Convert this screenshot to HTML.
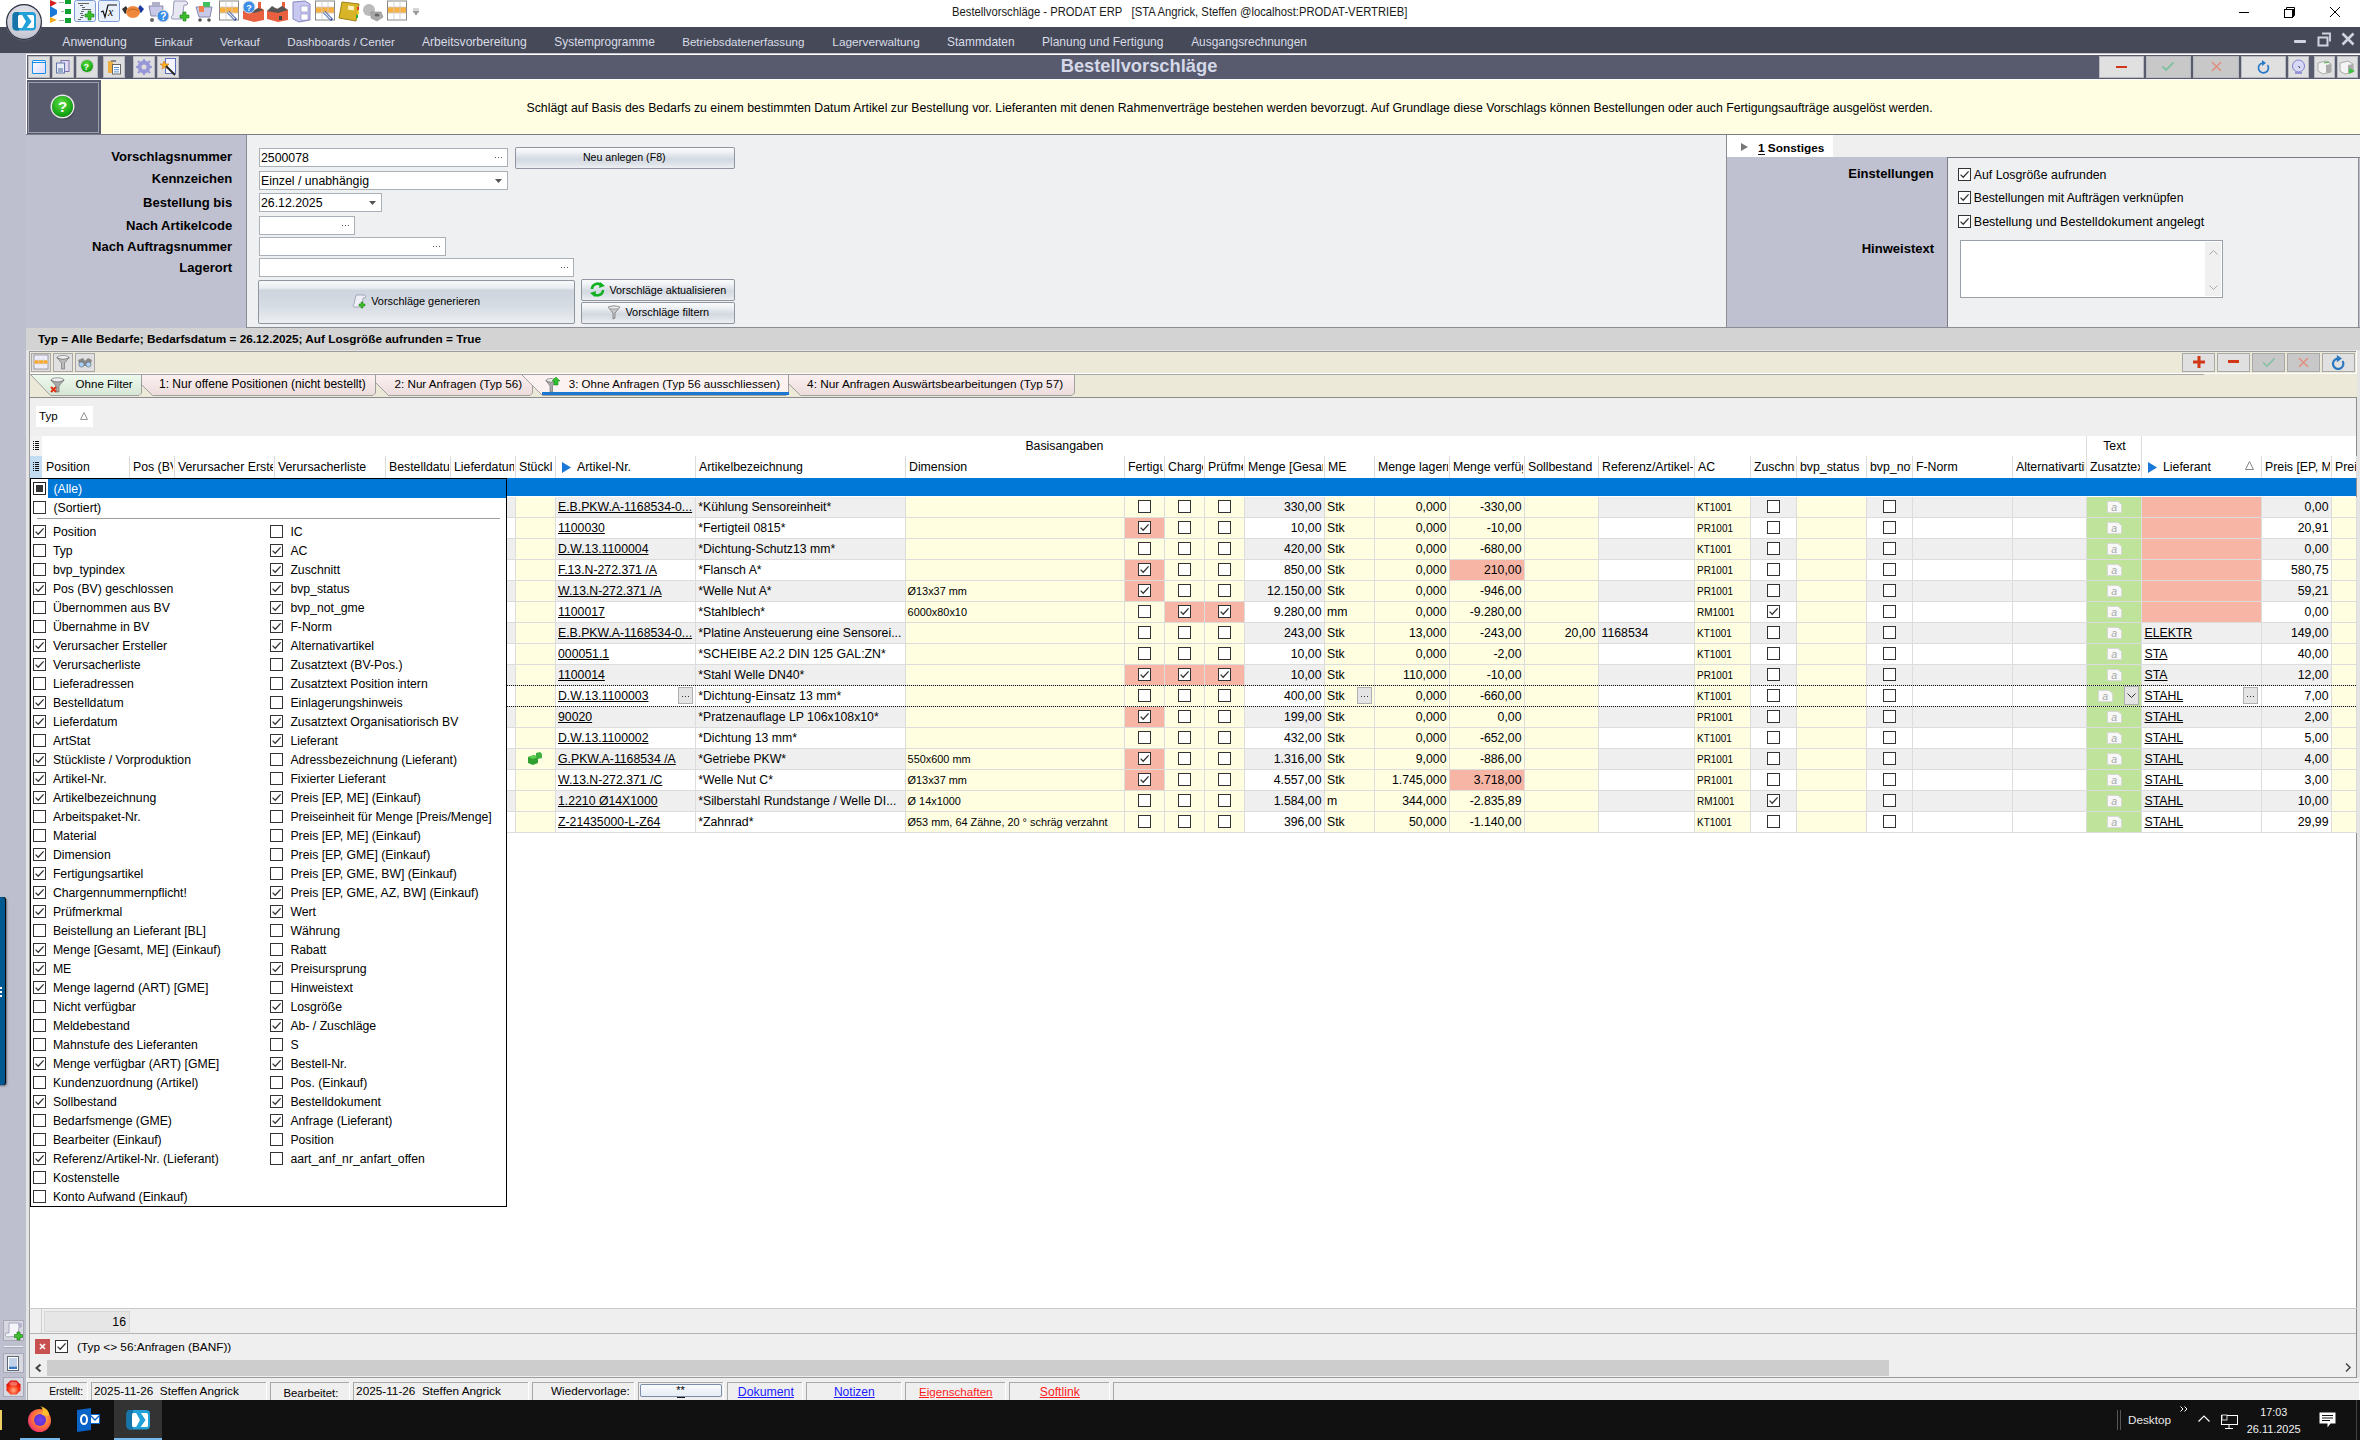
<!DOCTYPE html><html><head><meta charset="utf-8"><style>
html,body{margin:0;padding:0;}
body{width:2360px;height:1440px;position:relative;overflow:hidden;background:#bdbfcf;font-family:"Liberation Sans",sans-serif;color:#000;}
.a{position:absolute;}
.t{position:absolute;white-space:pre;line-height:20px;height:20px;}
svg.a{overflow:visible}
</style></head><body>
<div class="a" style="left:0px;top:0px;width:2360px;height:27px;background:#ffffff;"></div>
<div class="a" style="left:0px;top:27px;width:2360px;height:26px;background:#464957;"></div>
<div class="a" style="left:0px;top:53px;width:26px;height:1347px;background:#bdbfcf;"></div>
<div class="a" style="left:26px;top:53px;width:2334px;height:1px;background:#c4c5cf;"></div>
<div class="a" style="left:26px;top:54px;width:2334px;height:1px;background:#ffffff;"></div>
<div class="a" style="left:26px;top:54px;width:1px;height:80px;background:#ffffff;"></div>
<div class="a" style="left:27px;top:55px;width:2333px;height:24px;background:#585b6d;"></div>
<div class="a" style="left:26px;top:79px;width:2334px;height:1px;background:#ffffff;"></div>
<div class="a" style="left:6px;top:4px;width:36px;height:36px;border-radius:50%;background:radial-gradient(circle at 50% 30%,#e4e5ec 0%,#cfd0da 55%,#b4b6c4 100%);box-shadow:inset 0 0 0 1.2px #2e3140, 0 1px 1px rgba(80,90,120,.6);"></div>
<svg class="a" style="left:12px;top:12px" width="24" height="19" viewBox="0 0 24 19"><rect x="0.5" y="0" width="23.5" height="18.5" rx="4" fill="#22a0d8"/><path d="M4.5 0 Q0.5 0 0.5 4 V14.5 Q0.5 18.5 4.5 18.5 H7 V0Z" fill="#1674a8"/><rect x="6" y="3" width="16" height="13" rx="1.5" fill="#fff"/><path d="M10.2 3 L14.9 3 L19.5 9.5 L14.7 16 L10.2 16 L14 9.5Z" fill="#22a0d8"/></svg>
<svg class="a" style="left:49px;top:0px" width="25" height="24" viewBox="0 0 25 24"><path d="M1 0 L8 3 L1 7Z" fill="#d42020"/><path d="M1 6 L8 10 L8 14 L1 18Z" fill="#1a78d8"/><path d="M1 17 L8 20 L1 23Z" fill="#f8a818"/><rect x="16" y="0" width="6" height="4" fill="#10a030"/><rect x="16" y="9" width="6" height="5" fill="#10a030"/><rect x="16" y="18" width="6" height="5" fill="#10a030"/><rect x="10" y="2" width="5" height="1" fill="#aaa"/><rect x="12" y="11" width="3" height="1" fill="#aaa"/><rect x="10" y="20" width="5" height="1" fill="#aaa"/></svg>
<svg class="a" style="left:74px;top:0px" width="23" height="23" viewBox="0 0 23 23"><rect x="0.5" y="0.5" width="21" height="21" rx="2" fill="#e8f0fc" stroke="#7c9ad8"/><path d="M4 3.5h11M6 5.5h3M8 7.5h3M8 9.5h9M7 11.5h3M6 13.5h3M7 15.5h3M6 17.5h3M4 19.5h3" stroke="#555" stroke-width="0.9"/><path d="M14 11h3v3h3v3h-3v3h-3v-3h-3v-3h3z" fill="#3ac02a" stroke="#1a7a10" stroke-width="0.6"/></svg>
<svg class="a" style="left:98px;top:0px" width="23" height="23" viewBox="0 0 23 23"><rect x="0.5" y="0.5" width="21" height="21" rx="2" fill="#e8f0fc" stroke="#7c9ad8"/><path d="M3 12 L5 11 L7 17 L10 5 L19 5" fill="none" stroke="#111" stroke-width="1.2"/><text x="10" y="16" font-family="Liberation Serif" font-style="italic" font-size="12" fill="#111">x</text></svg>
<svg class="a" style="left:122px;top:3px" width="23" height="17" viewBox="0 0 23 17"><path d="M0 6 L4 3 L7 8 L3 11Z" fill="#333"/><path d="M22 6 L18 2 L15 7 L19 10Z" fill="#1838a0"/><ellipse cx="11" cy="9" rx="7" ry="6" fill="#f0883c"/><path d="M6 8 Q11 4 16 8" stroke="#c06020" fill="none"/></svg>
<svg class="a" style="left:148px;top:0px" width="21" height="23" viewBox="0 0 21 23"><path d="M1 6 L15 6 L14 16 L3 16Z" fill="#c8c8e8" stroke="#8888a8"/><path d="M4 2h8v4H4z" fill="#b0b0c8"/><circle cx="4" cy="20" r="2" fill="#666"/><circle cx="13" cy="11" r="0" fill="#666"/><circle cx="15" cy="16" r="6" fill="#3a8ee8" stroke="#ddd"/><text x="12.3" y="19.5" font-family="Liberation Sans" font-weight="bold" font-size="10" fill="#fff">?</text></svg>
<svg class="a" style="left:170px;top:0px" width="22" height="22" viewBox="0 0 22 22"><path d="M4 1 L16 1 Q19 3 17 5 L14 5 L12 19 L2 19 Q0 16 3 15Z" fill="#e8e8f4" stroke="#9898b8"/><path d="M13 12h3v3h3v3h-3v3h-3v-3h-3v-3h3z" fill="#3ac02a" stroke="#1a7a10" stroke-width="0.6"/></svg>
<svg class="a" style="left:195px;top:0px" width="20" height="22" viewBox="0 0 20 22"><path d="M1 7 L17 7 L15 17 L4 17Z" fill="#c8c8e8" stroke="#8888a8"/><rect x="8" y="2" width="7" height="5" fill="#40c060"/><rect x="4" y="6" width="5" height="6" fill="#f08050"/><circle cx="5" cy="20" r="1.8" fill="#555"/><circle cx="14" cy="20" r="1.8" fill="#555"/></svg>
<svg class="a" style="left:219px;top:0px" width="21" height="22" viewBox="0 0 21 22"><rect x="0.5" y="1" width="19" height="19" fill="#fff" stroke="#888"/><rect x="1" y="7" width="18" height="6" fill="#f8b040"/><path d="M7 1v19M13 1v19M1 7h18M1 13h18" stroke="#ccc" stroke-width="0.8"/><path d="M9 12 L17 20" stroke="#3050b0" stroke-width="3"/><path d="M9 12 L16 19" stroke="#ddd" stroke-width="1.5"/></svg>
<svg class="a" style="left:242px;top:0px" width="23" height="23" viewBox="0 0 23 23"><path d="M1 11 L6 8 L6 11 L11 8 L11 11 L16 8 L16 2 L19 2 L19 8 L22 10 L22 20 L12 22 L1 19Z" fill="#e86040"/><path d="M1 11 L6 8 L11 11 L16 8 L22 10 L12 13Z" fill="#555"/><circle cx="7" cy="7" r="6" fill="#3a8ee8" stroke="#ddd"/><text x="4.3" y="10.5" font-family="Liberation Sans" font-weight="bold" font-size="9" fill="#fff">?</text></svg>
<svg class="a" style="left:266px;top:0px" width="23" height="23" viewBox="0 0 23 23"><path d="M1 11 L6 8 L6 11 L11 8 L11 11 L16 8 L16 2 L19 2 L19 8 L22 10 L22 20 L12 22 L1 19Z" fill="#e86040"/><path d="M1 11 L6 6 L11 9 L16 6 L22 10 L12 13Z" fill="#555"/><rect x="13" y="16" width="3" height="4" fill="#444"/></svg>
<svg class="a" style="left:292px;top:0px" width="19" height="23" viewBox="0 0 19 23"><path d="M1 2 L13 1 L18 4 L18 20 L7 22 L1 19Z" fill="#c8c8f0" stroke="#8888c0"/><rect x="9" y="6" width="7" height="6" fill="#fff" stroke="#8888c0" stroke-width="0.6"/><rect x="9" y="14" width="7" height="6" fill="#fff" stroke="#8888c0" stroke-width="0.6"/></svg>
<svg class="a" style="left:315px;top:0px" width="21" height="22" viewBox="0 0 21 22"><rect x="0.5" y="1" width="19" height="19" fill="#fff" stroke="#888"/><rect x="1" y="7" width="18" height="6" fill="#f8b040"/><path d="M7 1v19M13 1v19M1 7h18M1 13h18" stroke="#ccc" stroke-width="0.8"/><path d="M9 12 L17 20" stroke="#3050b0" stroke-width="3"/><path d="M9 12 L16 19" stroke="#ddd" stroke-width="1.5"/></svg>
<svg class="a" style="left:338px;top:1px" width="23" height="21" viewBox="0 0 23 21"><path d="M4 1 L21 3 L18 20 L1 17Z" fill="#d8b428" stroke="#a08010"/><rect x="10" y="5" width="6" height="4" fill="#fff3c0" transform="rotate(8 13 7)"/><rect x="19" y="6" width="2" height="3" fill="#e04020"/><rect x="19" y="10" width="2" height="3" fill="#f0d020"/><rect x="18" y="14" width="2" height="3" fill="#30b030"/></svg>
<svg class="a" style="left:362px;top:2px" width="22" height="19" viewBox="0 0 22 19"><ellipse cx="7" cy="8" rx="6" ry="6" fill="#bbb"/><path d="M9 10 L19 10 L21 15 L15 19 L9 16Z" fill="#aaa" stroke="#888" stroke-width="0.6"/><ellipse cx="15" cy="13" rx="2.5" ry="1.5" fill="#666"/></svg>
<svg class="a" style="left:387px;top:0px" width="21" height="22" viewBox="0 0 21 22"><rect x="0.5" y="1" width="19" height="19" fill="#fff" stroke="#888"/><rect x="1" y="7" width="18" height="6" fill="#f8b040"/><path d="M7 1v19M13 1v19M1 7h18M1 13h18" stroke="#ccc" stroke-width="0.8"/></svg>
<svg class="a" style="left:413px;top:9px" width="7" height="7" viewBox="0 0 7 7"><path d="M0 0h6M0 2 L3 6 L6 2Z" stroke="#999" fill="#999" stroke-width="0.8"/></svg>
<div class="t" style="left:951.70px;top:2.18px;font-size:11.900px;color:#1a1a1a;transform:scaleX(0.9465555524102656);transform-origin:0 0;">Bestellvorschläge - PRODAT ERP   [STA Angrick, Steffen @localhost:PRODAT-VERTRIEB]</div>
<div class="a" style="left:2239px;top:12px;width:10px;height:1px;background:#000;"></div>
<div class="a" style="left:2286px;top:9px;width:8px;height:8px;box-shadow:inset 0 0 0 1px #000;"></div>
<div class="a" style="left:2284px;top:7px;width:10px;height:10px;"></div>
<svg class="a" style="left:2284px;top:7px" width="11" height="11" viewBox="0 0 11 11"><path d="M2.5 2.5V0.5h8v8h-2" fill="none" stroke="#000"/><rect x="0.5" y="2.5" width="8" height="8" fill="#fff" stroke="#000"/></svg>
<svg class="a" style="left:2330px;top:7px" width="11" height="11" viewBox="0 0 11 11"><path d="M0 0L10 10M10 0L0 10" stroke="#000" stroke-width="1"/></svg>
<div class="t" style="left:62.30px;top:31.56px;font-size:12.230px;color:#d8dce8;">Anwendung</div>
<div class="t" style="left:154.30px;top:31.83px;font-size:11.453px;color:#d8dce8;">Einkauf</div>
<div class="t" style="left:219.90px;top:31.71px;font-size:11.795px;color:#d8dce8;">Verkauf</div>
<div class="t" style="left:287.30px;top:31.76px;font-size:11.661px;color:#d8dce8;">Dashboards / Center</div>
<div class="t" style="left:422.00px;top:31.61px;font-size:12.086px;color:#d8dce8;">Arbeitsvorbereitung</div>
<div class="t" style="left:554.30px;top:31.67px;font-size:11.910px;color:#d8dce8;">Systemprogramme</div>
<div class="t" style="left:682.20px;top:31.78px;font-size:11.598px;color:#d8dce8;">Betriebsdatenerfassung</div>
<div class="t" style="left:832.30px;top:31.70px;font-size:11.835px;color:#d8dce8;">Lagerverwaltung</div>
<div class="t" style="left:947.10px;top:31.67px;font-size:11.924px;color:#d8dce8;">Stammdaten</div>
<div class="t" style="left:1042.00px;top:31.64px;font-size:12.017px;color:#d8dce8;">Planung und Fertigung</div>
<div class="t" style="left:1191.20px;top:31.68px;font-size:11.901px;color:#d8dce8;">Ausgangsrechnungen</div>
<div class="a" style="left:2294px;top:40px;width:12px;height:3px;background:#d0d4e0;border-radius:1px;"></div>
<svg class="a" style="left:2317px;top:32px" width="15" height="15" viewBox="0 0 15 15"><path d="M5 1.5h8v8" fill="none" stroke="#d0d4e0" stroke-width="1.8"/><rect x="1.5" y="5.5" width="9" height="8" fill="none" stroke="#d0d4e0" stroke-width="2"/></svg>
<svg class="a" style="left:2341px;top:32px" width="14" height="14" viewBox="0 0 14 14"><path d="M1.5 1.5L12.5 12.5M12.5 1.5L1.5 12.5" stroke="#d0d4e0" stroke-width="2.6"/></svg>
<div class="a" style="left:28px;top:56px;width:22px;height:22px;background:#dedede;box-shadow:inset 0 0 0 1px #b8b8c0;"></div>
<div class="a" style="left:52px;top:56px;width:22px;height:22px;background:#dedede;box-shadow:inset 0 0 0 1px #b8b8c0;"></div>
<div class="a" style="left:76px;top:56px;width:22px;height:22px;background:#dedede;box-shadow:inset 0 0 0 1px #b8b8c0;"></div>
<div class="a" style="left:103px;top:56px;width:22px;height:22px;background:#dedede;box-shadow:inset 0 0 0 1px #b8b8c0;"></div>
<div class="a" style="left:133px;top:56px;width:22px;height:22px;background:#dedede;box-shadow:inset 0 0 0 1px #b8b8c0;"></div>
<div class="a" style="left:157px;top:56px;width:22px;height:22px;background:#dedede;box-shadow:inset 0 0 0 1px #b8b8c0;"></div>
<div class="a" style="left:32px;top:60px;width:14px;height:14px;background:linear-gradient(135deg,#fff,#d8d8ff);box-shadow:inset 0 0 0 1px #1890f0;border-radius:1.5px;"></div>
<div class="a" style="left:33px;top:62px;width:12px;height:1px;background:#1890f0;"></div>
<svg class="a" style="left:56px;top:60px" width="15" height="14" viewBox="0 0 15 14"><rect x="5" y="0.5" width="8" height="11" fill="#e0d8f0" stroke="#8070b0"/><rect x="0.5" y="3" width="8" height="10" fill="#e8ecf8" stroke="#6078a8"/><rect x="2" y="8" width="5" height="4" fill="#98a8c8"/></svg>
<div class="a" style="left:81px;top:60px;width:12px;height:12px;border-radius:50%;background:radial-gradient(circle at 45% 35%,#5ee040,#10a010 70%,#087008);box-shadow:0 0 0 1px #ccc;"></div>
<div class="t" style="left:83.50px;top:56.88px;font-size:9.000px;font-weight:bold;color:#fff;">?</div>
<svg class="a" style="left:107px;top:59px" width="15" height="16" viewBox="0 0 15 16"><rect x="1" y="2" width="5" height="12" fill="#f0b040"/><rect x="4" y="1" width="5" height="2" fill="#888"/><rect x="5.5" y="5.5" width="8" height="9.5" fill="#fff" stroke="#666"/><path d="M7 8.5h5M7 10.7h5M7 12.9h5" stroke="#2a70c8" stroke-width="0.8"/></svg>
<svg class="a" style="left:136px;top:59px" width="16" height="16" viewBox="0 0 16 16"><circle cx="8" cy="8" r="6.5" fill="#9898d8"/><circle cx="8" cy="8" r="2.5" fill="#dedede"/><path d="M8 0v3M8 13v3M0 8h3M13 8h3M2 2l2 2M12 12l2 2M2 14l2-2M12 4l2-2" stroke="#9898d8" stroke-width="2.2"/></svg>
<svg class="a" style="left:160px;top:58px" width="17" height="18" viewBox="0 0 17 18"><rect x="5.5" y="0.5" width="10" height="15" fill="#f4f4ff" stroke="#6070c0"/><path d="M4 3 L6 6 L9 6 L7 8 L8 11 L5 9 L2 11 L3 8 L0 6 L3 6Z" fill="#f8b020" stroke="#e07010" stroke-width="0.6"/><path d="M6 8 L15 17" stroke="#222" stroke-width="1.8"/></svg>
<div class="t" style="left:1060.70px;top:56.36px;font-size:18.307px;font-weight:bold;color:#d4d8e8;">Bestellvorschläge</div>
<div class="a" style="left:2099px;top:56px;width:45px;height:22px;background:#e0e0e0;box-shadow:inset 0 0 0 1px #b8b8c0;"></div>
<div class="a" style="left:2146px;top:56px;width:45px;height:22px;background:#c8c8c8;box-shadow:inset 0 0 0 1px #b8b8c0;"></div>
<div class="a" style="left:2193px;top:56px;width:46px;height:22px;background:#c8c8c8;box-shadow:inset 0 0 0 1px #b8b8c0;"></div>
<div class="a" style="left:2241px;top:56px;width:45px;height:22px;background:#e0e0e0;box-shadow:inset 0 0 0 1px #b8b8c0;"></div>
<div class="a" style="left:2288px;top:56px;width:21px;height:22px;background:#e0e0e0;box-shadow:inset 0 0 0 1px #b8b8c0;"></div>
<div class="a" style="left:2314px;top:56px;width:21px;height:22px;background:#e0e0e0;box-shadow:inset 0 0 0 1px #b8b8c0;"></div>
<div class="a" style="left:2337px;top:56px;width:21px;height:22px;background:#e0e0e0;box-shadow:inset 0 0 0 1px #b8b8c0;"></div>
<div class="a" style="left:2116px;top:66px;width:11px;height:2px;background:#d03818;"></div>
<svg class="a" style="left:2161px;top:61px" width="14" height="11" viewBox="0 0 14 11"><path d="M1.5 5.5 L5 9 L12.5 1.5" fill="none" stroke="#80c0a0" stroke-width="1.8"/></svg>
<svg class="a" style="left:2211px;top:61px" width="11" height="11" viewBox="0 0 11 11"><path d="M1 1L10 10M10 1L1 10" stroke="#e09080" stroke-width="1.6"/></svg>
<svg class="a" style="left:2256px;top:59px" width="15" height="16" viewBox="0 0 15 16"><path d="M11.5 6 A5 5 0 1 1 6.5 4" fill="none" stroke="#2878c8" stroke-width="1.7"/><path d="M6 1 L10 4 L6 7Z" fill="#2878c8"/></svg>
<svg class="a" style="left:2291px;top:59px" width="15" height="16" viewBox="0 0 15 16"><circle cx="7.5" cy="7" r="6" fill="#d8d8f8" stroke="#8080d0"/><path d="M7.5 7 L9 9" stroke="#333"/><path d="M4 14h7" stroke="#8080d0" stroke-width="1.5"/></svg>
<svg class="a" style="left:2317px;top:60px" width="15" height="14" viewBox="0 0 15 14"><path d="M1 3 L9 1 L14 4 L14 12 L6 14 L1 11Z" fill="#f4f4f4" stroke="#999" stroke-width="0.8"/><path d="M9 5 L14 4 L14 12 L9 13Z" fill="#aaa"/><path d="M7 3 L12 2" stroke="#40b040"/></svg>
<svg class="a" style="left:2339px;top:60px" width="17" height="15" viewBox="0 0 17 15"><path d="M1 3 L9 1 L14 4 L14 12 L6 14 L1 11Z" fill="#f4f4f4" stroke="#999" stroke-width="0.8"/><path d="M9 5 L14 4 L14 12 L9 13Z" fill="#aaa"/><path d="M10 8 L16 11 L10 14Z" fill="#40c040"/></svg>
<div class="a" style="left:27px;top:80px;width:74px;height:54px;background:#585b6d;"></div>
<div class="a" style="left:28px;top:82px;width:71px;height:51px;box-shadow:inset 0 0 0 1px #9a9dac;"></div>
<div class="a" style="left:101px;top:80px;width:2259px;height:54px;background:#fffee2;"></div>
<div class="a" style="left:52px;top:96px;width:21px;height:21px;border-radius:50%;background:radial-gradient(circle at 45% 35%,#60e040,#18a818 60%,#0a780a);box-shadow:0 0 0 1.5px #e8e8e8, 1px 2px 2px rgba(0,0,0,.6);"></div>
<div class="t" style="left:57.92px;top:96.80px;font-size:15.000px;font-weight:bold;color:#fff;">?</div>
<div class="t" style="left:526.50px;top:97.74px;font-size:12.303px;color:#000;">Schlägt auf Basis des Bedarfs zu einem bestimmten Datum Artikel zur Bestellung vor. Lieferanten mit denen Rahmenverträge bestehen werden bevorzugt. Auf Grundlage diese Vorschlags können Bestellungen oder auch Fertigungsaufträge ausgelöst werden.</div>
<div class="a" style="left:26px;top:134px;width:2334px;height:1px;background:#7c7c84;"></div>
<div class="a" style="left:26px;top:135px;width:220px;height:193px;background:#bfc0d0;"></div>
<div class="a" style="left:246px;top:135px;width:1px;height:193px;background:#8c8c94;"></div>
<div class="a" style="left:247px;top:135px;width:1479px;height:192px;background:#eff0f2;"></div>
<div class="a" style="left:1726px;top:135px;width:1px;height:193px;background:#8c8c94;"></div>
<div class="a" style="left:246px;top:327px;width:1481px;height:1px;background:#8c8c94;"></div>
<div class="t" style="left:111.33px;top:147.48px;font-size:13.050px;font-weight:bold;color:#000;">Vorschlagsnummer</div>
<div class="t" style="left:151.71px;top:169.08px;font-size:13.050px;font-weight:bold;color:#000;">Kennzeichen</div>
<div class="t" style="left:143.01px;top:193.48px;font-size:13.050px;font-weight:bold;color:#000;">Bestellung bis</div>
<div class="t" style="left:126.07px;top:216.48px;font-size:13.050px;font-weight:bold;color:#000;">Nach Artikelcode</div>
<div class="t" style="left:92.01px;top:236.68px;font-size:13.050px;font-weight:bold;color:#000;">Nach Auftragsnummer</div>
<div class="t" style="left:179.27px;top:257.88px;font-size:13.050px;font-weight:bold;color:#000;">Lagerort</div>
<div class="a" style="left:259px;top:148px;width:249px;height:19px;background:#ffffff;box-shadow:inset 0 0 0 1px #aab0b8;"></div>
<div class="t" style="left:261.00px;top:147.74px;font-size:12.300px;color:#000;">2500078</div>
<div class="a" style="left:495px;top:157px;width:1px;height:1px;background:#555;"></div>
<div class="a" style="left:498px;top:157px;width:1px;height:1px;background:#555;"></div>
<div class="a" style="left:501px;top:157px;width:1px;height:1px;background:#555;"></div>
<div class="a" style="left:259px;top:171px;width:249px;height:19px;background:#ffffff;box-shadow:inset 0 0 0 1px #aab0b8;"></div>
<div class="t" style="left:261.00px;top:170.74px;font-size:12.300px;color:#000;">Einzel / unabhängig</div>
<svg class="a" style="left:495px;top:179px" width="7" height="4" viewBox="0 0 7 4"><path d="M0 0h7L3.5 4Z" fill="#555"/></svg>
<div class="a" style="left:259px;top:193px;width:123px;height:19px;background:#ffffff;box-shadow:inset 0 0 0 1px #aab0b8;"></div>
<div class="t" style="left:261.00px;top:192.74px;font-size:12.300px;color:#000;">26.12.2025</div>
<svg class="a" style="left:369px;top:201px" width="7" height="4" viewBox="0 0 7 4"><path d="M0 0h7L3.5 4Z" fill="#555"/></svg>
<div class="a" style="left:259px;top:216px;width:96px;height:19px;background:#ffffff;box-shadow:inset 0 0 0 1px #aab0b8;"></div>
<div class="a" style="left:342px;top:225px;width:1px;height:1px;background:#555;"></div>
<div class="a" style="left:345px;top:225px;width:1px;height:1px;background:#555;"></div>
<div class="a" style="left:348px;top:225px;width:1px;height:1px;background:#555;"></div>
<div class="a" style="left:259px;top:237px;width:187px;height:19px;background:#ffffff;box-shadow:inset 0 0 0 1px #aab0b8;"></div>
<div class="a" style="left:433px;top:246px;width:1px;height:1px;background:#555;"></div>
<div class="a" style="left:436px;top:246px;width:1px;height:1px;background:#555;"></div>
<div class="a" style="left:439px;top:246px;width:1px;height:1px;background:#555;"></div>
<div class="a" style="left:259px;top:258px;width:315px;height:19px;background:#ffffff;box-shadow:inset 0 0 0 1px #aab0b8;"></div>
<div class="a" style="left:561px;top:267px;width:1px;height:1px;background:#555;"></div>
<div class="a" style="left:564px;top:267px;width:1px;height:1px;background:#555;"></div>
<div class="a" style="left:567px;top:267px;width:1px;height:1px;background:#555;"></div>
<div class="a" style="left:515px;top:147px;width:220px;height:22px;border-radius:2px;box-shadow:inset 0 0 0 1px #8f96a0;background:linear-gradient(to bottom,#fdfdfe 0%,#eef1f4 25%,#d3d9e1 55%,#dde2e8 75%,#f1f3f6 100%);"></div>
<div class="t" style="left:582.90px;top:147.11px;font-size:10.640px;color:#000;">Neu anlegen (F8)</div>
<div class="a" style="left:258px;top:280px;width:317px;height:44px;border-radius:2px;box-shadow:inset 0 0 0 1px #8f96a0;background:linear-gradient(to bottom,#fafbfc 0%,#e9edf1 18%,#ced5de 24%,#d6dce3 60%,#edf0f3 100%);"></div>
<div class="t" style="left:371.20px;top:291.42px;font-size:10.902px;color:#000;">Vorschläge generieren</div>
<svg class="a" style="left:352px;top:294px" width="16" height="15" viewBox="0 0 16 15"><path d="M4 1 L12 1 Q15 2 13 4 L11 4 L10 13 L2 13 Q0 11 2 10Z" fill="#eeeef6" stroke="#9898b0" stroke-width="0.8"/><path d="M9 8h2v2h2v2h-2v2H9v-2H7v-2h2z" fill="#3ac02a" stroke="#1a7a10" stroke-width="0.5"/></svg>
<div class="a" style="left:581px;top:279px;width:154px;height:22px;border-radius:2px;box-shadow:inset 0 0 0 1px #8f96a0;background:linear-gradient(to bottom,#fdfdfe 0%,#eef1f4 25%,#d3d9e1 55%,#dde2e8 75%,#f1f3f6 100%);"></div>
<div class="t" style="left:609.50px;top:280.27px;font-size:10.775px;color:#000;">Vorschläge aktualisieren</div>
<svg class="a" style="left:589px;top:281px" width="17" height="17" viewBox="0 0 17 17"><path d="M3 8 A5.5 5.5 0 0 1 13 5" fill="none" stroke="#10b020" stroke-width="2.6"/><path d="M14 9 A5.5 5.5 0 0 1 4 12" fill="none" stroke="#10b020" stroke-width="2.6"/><path d="M11 1 L16 5 L10 7Z" fill="#10b020"/><path d="M6 16 L1 12 L7 10Z" fill="#10b020"/></svg>
<div class="a" style="left:581px;top:302px;width:154px;height:22px;border-radius:2px;box-shadow:inset 0 0 0 1px #8f96a0;background:linear-gradient(to bottom,#fdfdfe 0%,#eef1f4 25%,#d3d9e1 55%,#dde2e8 75%,#f1f3f6 100%);"></div>
<div class="t" style="left:625.40px;top:302.01px;font-size:10.937px;color:#000;">Vorschläge filtern</div>
<svg class="a" style="left:607px;top:305px" width="14" height="15" viewBox="0 0 14 15"><path d="M1 2 Q7 0 13 2 L8 8 L8 13 L6 14 L6 8Z" fill="#c8c8c8" stroke="#777" stroke-width="0.8"/><ellipse cx="7" cy="2.5" rx="5.5" ry="1.5" fill="#eee" stroke="#777" stroke-width="0.6"/></svg>
<div class="a" style="left:1727px;top:135px;width:633px;height:22px;background:#efefef;"></div>
<div class="a" style="left:1727px;top:135px;width:106px;height:22px;background:#ffffff;"></div>
<svg class="a" style="left:1741px;top:143px" width="7" height="8" viewBox="0 0 7 8"><path d="M0 0 L7 4 L0 8Z" fill="#777"/></svg>
<div class="t" style="left:1758.00px;top:137.90px;font-size:11.830px;font-weight:bold;color:#000;">1 Sonstiges</div>
<div class="a" style="left:1758px;top:154px;width:7px;height:1px;background:#111;"></div>
<div class="a" style="left:1727px;top:157px;width:220px;height:170px;background:#bfc0d0;"></div>
<div class="a" style="left:1947px;top:157px;width:413px;height:1px;background:#7c7c84;"></div>
<div class="a" style="left:1947px;top:157px;width:1px;height:171px;background:#7c7c84;"></div>
<div class="a" style="left:1948px;top:158px;width:410px;height:169px;background:#eff0f2;"></div>
<div class="a" style="left:2358px;top:157px;width:1px;height:171px;background:#8c8c94;"></div>
<div class="a" style="left:1727px;top:327px;width:633px;height:1px;background:#8c8c94;"></div>
<div class="t" style="left:1848.30px;top:163.68px;font-size:13.041px;font-weight:bold;color:#000;">Einstellungen</div>
<div class="t" style="left:1861.68px;top:238.88px;font-size:13.050px;font-weight:bold;color:#000;">Hinweistext</div>
<div class="a" style="left:1958px;top:168px;width:13px;height:13px;background:#fff;box-shadow:inset 0 0 0 1px #333;"></div>
<svg class="a" style="left:1958px;top:168px" width="13" height="13" viewBox="0 0 13 13"><path d="M2.6 6.6 L5.2 9.2 L10.6 3.4" fill="none" stroke="#333" stroke-width="1.3"/></svg>
<div class="t" style="left:1973.80px;top:164.73px;font-size:12.313px;color:#000;">Auf Losgröße aufrunden</div>
<div class="a" style="left:1958px;top:191px;width:13px;height:13px;background:#fff;box-shadow:inset 0 0 0 1px #333;"></div>
<svg class="a" style="left:1958px;top:191px" width="13" height="13" viewBox="0 0 13 13"><path d="M2.6 6.6 L5.2 9.2 L10.6 3.4" fill="none" stroke="#333" stroke-width="1.3"/></svg>
<div class="t" style="left:1973.80px;top:187.77px;font-size:12.219px;color:#000;">Bestellungen mit Aufträgen verknüpfen</div>
<div class="a" style="left:1958px;top:215px;width:13px;height:13px;background:#fff;box-shadow:inset 0 0 0 1px #333;"></div>
<svg class="a" style="left:1958px;top:215px" width="13" height="13" viewBox="0 0 13 13"><path d="M2.6 6.6 L5.2 9.2 L10.6 3.4" fill="none" stroke="#333" stroke-width="1.3"/></svg>
<div class="t" style="left:1973.80px;top:211.66px;font-size:12.526px;color:#000;">Bestellung und Bestelldokument angelegt</div>
<div class="a" style="left:1960px;top:240px;width:263px;height:58px;background:#ffffff;box-shadow:inset 0 0 0 1px #9aa0a8;"></div>
<div class="a" style="left:2205px;top:242px;width:16px;height:54px;background:#f0f0f0;"></div>
<svg class="a" style="left:2209px;top:250px" width="9" height="5" viewBox="0 0 9 5"><path d="M0.5 4.5 L4.5 0.5 L8.5 4.5" fill="none" stroke="#aaa"/></svg>
<svg class="a" style="left:2209px;top:285px" width="9" height="5" viewBox="0 0 9 5"><path d="M0.5 0.5 L4.5 4.5 L8.5 0.5" fill="none" stroke="#aaa"/></svg>
<div class="a" style="left:26px;top:328px;width:2334px;height:22px;background:#d3d3d3;"></div>
<div class="t" style="left:38.00px;top:329.11px;font-size:11.791px;font-weight:bold;color:#000;">Typ = Alle Bedarfe; Bedarfsdatum = 26.12.2025; Auf Losgröße aufrunden = True</div>
<div class="a" style="left:26px;top:350px;width:2334px;height:1050px;background:#e4e4e4;"></div>
<div class="a" style="left:29px;top:351px;width:2328px;height:1026px;background:#ece9d8;"></div>
<div class="a" style="left:29px;top:351px;width:2328px;height:1px;background:#9a9a9a;"></div>
<div class="a" style="left:29px;top:351px;width:1px;height:1026px;background:#9a9a9a;"></div>
<div class="a" style="left:2356px;top:397px;width:1px;height:980px;background:#8c8c8c;"></div>
<div class="a" style="left:2356px;top:351px;width:1px;height:23px;background:#ffffff;"></div>
<div class="a" style="left:30px;top:373px;width:2326px;height:1px;background:#ffffff;"></div>
<div class="a" style="left:31px;top:353px;width:20px;height:19px;background:#e0e0e0;box-shadow:inset 0 0 0 1px #a8a8a8;"></div>
<div class="a" style="left:53px;top:353px;width:20px;height:19px;background:#e0e0e0;box-shadow:inset 0 0 0 1px #a8a8a8;"></div>
<div class="a" style="left:75px;top:353px;width:20px;height:19px;background:#e0e0e0;box-shadow:inset 0 0 0 1px #a8a8a8;"></div>
<svg class="a" style="left:34px;top:355px" width="14" height="14" viewBox="0 0 14 14"><rect x="0" y="0" width="14" height="14" fill="#eef" stroke="#888" stroke-width="0.8"/><rect x="0.5" y="5" width="13" height="4" fill="#f8a830"/><path d="M4.7 0v14M9.3 0v14M0 5h14M0 9h14" stroke="#ddd" stroke-width="0.6"/></svg>
<svg class="a" style="left:56px;top:355px" width="14" height="15" viewBox="0 0 14 15"><ellipse cx="7" cy="2.5" rx="6" ry="2" fill="#eee" stroke="#666" stroke-width="0.6"/><path d="M1 2.5 Q7 6 13 2.5 L8.5 8 L8.5 14 L5.5 14 L5.5 8Z" fill="#bbb" stroke="#666" stroke-width="0.6"/></svg>
<svg class="a" style="left:77px;top:357px" width="16" height="11" viewBox="0 0 16 11"><path d="M1 3 L6 1 L8 4 L11 1 L15 3 L13 9 L3 9Z" fill="#888"/><circle cx="4.5" cy="7.5" r="2.6" fill="#a8d0f8" stroke="#666" stroke-width="0.6"/><circle cx="11.5" cy="7.5" r="2.6" fill="#a8d0f8" stroke="#666" stroke-width="0.6"/></svg>
<div class="a" style="left:2182px;top:353px;width:33px;height:19px;background:#e0e0e0;box-shadow:inset 0 0 0 1px #a8a8a8;"></div>
<div class="a" style="left:2217px;top:353px;width:33px;height:19px;background:#e0e0e0;box-shadow:inset 0 0 0 1px #a8a8a8;"></div>
<div class="a" style="left:2252px;top:353px;width:33px;height:19px;background:#c8c8c8;box-shadow:inset 0 0 0 1px #a8a8a8;"></div>
<div class="a" style="left:2287px;top:353px;width:33px;height:19px;background:#c8c8c8;box-shadow:inset 0 0 0 1px #a8a8a8;"></div>
<div class="a" style="left:2322px;top:353px;width:33px;height:19px;background:#e0e0e0;box-shadow:inset 0 0 0 1px #a8a8a8;"></div>
<svg class="a" style="left:2193px;top:356px" width="12" height="12" viewBox="0 0 12 12"><path d="M4.5 0h3v4.5H12v3H7.5V12h-3V7.5H0v-3h4.5z" fill="#d03818"/></svg>
<div class="a" style="left:2228px;top:361px;width:11px;height:2px;background:#d03818;"></div>
<div class="a" style="left:2228px;top:360px;width:11px;height:3px;background:#d03818;"></div>
<svg class="a" style="left:2262px;top:357px" width="14" height="11" viewBox="0 0 14 11"><path d="M1.2 5.5 L5 9.2 L12.5 1.5" fill="none" stroke="#80c0a0" stroke-width="1.6"/></svg>
<svg class="a" style="left:2298px;top:357px" width="11" height="11" viewBox="0 0 11 11"><path d="M1 1L10 10M10 1L1 10" stroke="#e09080" stroke-width="1.5"/></svg>
<svg class="a" style="left:2331px;top:355px" width="15" height="15" viewBox="0 0 15 15"><path d="M11.6 6 A5.2 5.2 0 1 1 6.5 3.6" fill="none" stroke="#2a78c0" stroke-width="2.2"/><path d="M5.8 0 L11 3.6 L5.8 7.2Z" fill="#2a78c0"/></svg>
<div class="a" style="left:30px;top:374px;width:2174px;height:1px;background:#a8a8a8;"></div>
<svg width="0" height="0" class="a"><defs><linearGradient id="gt" x1="0" y1="0" x2="0" y2="1"><stop offset="0" stop-color="#eefaee"/><stop offset="1" stop-color="#d6e6d6"/></linearGradient><linearGradient id="pt" x1="0" y1="0" x2="0" y2="1"><stop offset="0" stop-color="#fcf0f0"/><stop offset="1" stop-color="#ecdcdc"/></linearGradient></defs></svg>
<svg class="a" style="left:779px;top:374px" width="297" height="23" viewBox="0 0 297 23"><path d="M0.5 0.5 L295.5 0.5 L295.5 19 L293 21.5 L21.5 21.5 Z" fill="url(#pt)" stroke="#a0a0a0" stroke-width="1"/></svg>
<svg class="a" style="left:367px;top:374px" width="167" height="23" viewBox="0 0 167 23"><path d="M0.5 0.5 L165.5 0.5 L165.5 19 L163 21.5 L21.5 21.5 Z" fill="url(#pt)" stroke="#a0a0a0" stroke-width="1"/></svg>
<svg class="a" style="left:131px;top:374px" width="246" height="23" viewBox="0 0 246 23"><path d="M0.5 0.5 L244.5 0.5 L244.5 19 L242 21.5 L21.5 21.5 Z" fill="url(#pt)" stroke="#a0a0a0" stroke-width="1"/></svg>
<svg class="a" style="left:30px;top:374px" width="113" height="23" viewBox="0 0 113 23"><path d="M0.5 0.5 L111.5 0.5 L111.5 19 L109 21.5 L20.5 21.5 Z" fill="url(#gt)" stroke="#a0a0a0" stroke-width="1"/></svg>
<svg class="a" style="left:521px;top:374px" width="269" height="23" viewBox="0 0 269 23"><path d="M0.5 0.5 L267.5 0.5 L267.5 19 L265 21.5 L21.5 21.5 Z" fill="#fdf2f2" stroke="#a0a0a0" stroke-width="1"/></svg>
<div class="a" style="left:542px;top:392px;width:247px;height:3px;background:#1a78d0;"></div>
<svg class="a" style="left:50px;top:377px" width="15" height="17" viewBox="0 0 15 17"><ellipse cx="7.5" cy="3" rx="6.5" ry="2.2" fill="#eee" stroke="#666" stroke-width="0.6"/><path d="M1 3 Q7.5 7 14 3 L9 9 L9 15 L6 15 L6 9Z" fill="#aaa" stroke="#666" stroke-width="0.6"/><path d="M1 10 L6 15 M6 10 L1 15" stroke="#e03010" stroke-width="2"/></svg>
<div class="t" style="left:75.60px;top:374.00px;font-size:11.544px;color:#000;">Ohne Filter</div>
<div class="t" style="left:159.00px;top:373.83px;font-size:12.025px;color:#000;">1: Nur offene Positionen (nicht bestellt)</div>
<div class="t" style="left:394.50px;top:373.96px;font-size:11.662px;color:#000;">2: Nur Anfragen (Typ 56)</div>
<svg class="a" style="left:545px;top:377px" width="15" height="17" viewBox="0 0 15 17"><ellipse cx="6" cy="3.5" rx="5" ry="2" fill="#eee" stroke="#666" stroke-width="0.6"/><path d="M1 3.5 Q6 7 11 3.5 L7.5 9 L7.5 15 L5 15 L5 9Z" fill="#aaa" stroke="#666" stroke-width="0.6"/><path d="M11 0 L15 4 L13 4 L13 8 L9 8 L9 4 L7 4Z" fill="#30c030" stroke="#108010" stroke-width="0.5"/></svg>
<div class="t" style="left:568.80px;top:374.00px;font-size:11.535px;color:#000;">3: Ohne Anfragen (Typ 56 ausschliessen)</div>
<div class="t" style="left:807.10px;top:373.90px;font-size:11.822px;color:#000;">4: Nur Anfragen Auswärtsbearbeitungen (Typ 57)</div>
<div class="a" style="left:29px;top:397px;width:2328px;height:1px;background:#8c8c8c;"></div>
<div class="a" style="left:30px;top:398px;width:2326px;height:38px;background:#efefef;"></div>
<div class="a" style="left:36px;top:406px;width:57px;height:21px;background:#ffffff;"></div>
<div class="t" style="left:39.00px;top:406.48px;font-size:11.600px;color:#000;">Typ</div>
<svg class="a" style="left:80px;top:412px" width="8" height="8" viewBox="0 0 8 8"><path d="M4 0.5 L7.5 7.5 L0.5 7.5Z" fill="none" stroke="#999"/></svg>
<div class="a" style="left:30px;top:436px;width:2326px;height:872px;background:#ffffff;"></div>
<div class="a" style="left:30px;top:436px;width:12px;height:20px;background:#f2f2f2;"></div>
<div class="a" style="left:30px;top:456px;width:12px;height:22px;background:#c2dcf2;"></div>
<div class="a" style="left:33px;top:441px;width:1px;height:1px;background:#111;"></div>
<div class="a" style="left:35px;top:441px;width:4px;height:1px;background:#111;"></div>
<div class="a" style="left:33px;top:443px;width:1px;height:1px;background:#111;"></div>
<div class="a" style="left:35px;top:443px;width:4px;height:1px;background:#111;"></div>
<div class="a" style="left:33px;top:445px;width:1px;height:1px;background:#111;"></div>
<div class="a" style="left:35px;top:445px;width:4px;height:1px;background:#111;"></div>
<div class="a" style="left:33px;top:447px;width:1px;height:1px;background:#111;"></div>
<div class="a" style="left:35px;top:447px;width:4px;height:1px;background:#111;"></div>
<div class="a" style="left:33px;top:449px;width:1px;height:1px;background:#111;"></div>
<div class="a" style="left:35px;top:449px;width:4px;height:1px;background:#111;"></div>
<div class="a" style="left:33px;top:462px;width:1px;height:1px;background:#111;"></div>
<div class="a" style="left:35px;top:462px;width:4px;height:1px;background:#111;"></div>
<div class="a" style="left:33px;top:464px;width:1px;height:1px;background:#111;"></div>
<div class="a" style="left:35px;top:464px;width:4px;height:1px;background:#111;"></div>
<div class="a" style="left:33px;top:466px;width:1px;height:1px;background:#111;"></div>
<div class="a" style="left:35px;top:466px;width:4px;height:1px;background:#111;"></div>
<div class="a" style="left:33px;top:468px;width:1px;height:1px;background:#111;"></div>
<div class="a" style="left:35px;top:468px;width:4px;height:1px;background:#111;"></div>
<div class="a" style="left:33px;top:470px;width:1px;height:1px;background:#111;"></div>
<div class="a" style="left:35px;top:470px;width:4px;height:1px;background:#111;"></div>
<div class="a" style="left:2086px;top:436px;width:1px;height:42px;background:#dcdcdc;"></div>
<div class="a" style="left:2141px;top:436px;width:1px;height:42px;background:#dcdcdc;"></div>
<div class="t" style="left:1025.42px;top:435.54px;font-size:12.300px;color:#000;">Basisangaben</div>
<div class="t" style="left:2103.22px;top:435.54px;font-size:12.300px;color:#000;">Text</div>
<div class="a" style="left:129px;top:456px;width:1px;height:22px;background:#dcdcdc;"></div>
<div class="a" style="left:46px;top:456px;width:82px;height:22px;overflow:hidden;">
<div class="t" style="left:0;top:0.54px;font-size:12.3px;color:#000">Position</div></div>
<div class="a" style="left:174px;top:456px;width:1px;height:22px;background:#dcdcdc;"></div>
<div class="a" style="left:133px;top:456px;width:40px;height:22px;overflow:hidden;">
<div class="t" style="left:0;top:0.54px;font-size:12.3px;color:#000">Pos (BV) geschlossen</div></div>
<div class="a" style="left:274px;top:456px;width:1px;height:22px;background:#dcdcdc;"></div>
<div class="a" style="left:178px;top:456px;width:95px;height:22px;overflow:hidden;">
<div class="t" style="left:0;top:0.54px;font-size:12.3px;color:#000">Verursacher Ersteller</div></div>
<div class="a" style="left:385px;top:456px;width:1px;height:22px;background:#dcdcdc;"></div>
<div class="a" style="left:278px;top:456px;width:106px;height:22px;overflow:hidden;">
<div class="t" style="left:0;top:0.54px;font-size:12.3px;color:#000">Verursacherliste</div></div>
<div class="a" style="left:450px;top:456px;width:1px;height:22px;background:#dcdcdc;"></div>
<div class="a" style="left:389px;top:456px;width:60px;height:22px;overflow:hidden;">
<div class="t" style="left:0;top:0.54px;font-size:12.3px;color:#000">Bestelldatum</div></div>
<div class="a" style="left:515px;top:456px;width:1px;height:22px;background:#dcdcdc;"></div>
<div class="a" style="left:454px;top:456px;width:60px;height:22px;overflow:hidden;">
<div class="t" style="left:0;top:0.54px;font-size:12.3px;color:#000">Lieferdatum</div></div>
<div class="a" style="left:555px;top:456px;width:1px;height:22px;background:#dcdcdc;"></div>
<div class="a" style="left:519px;top:456px;width:35px;height:22px;overflow:hidden;">
<div class="t" style="left:0;top:0.54px;font-size:12.3px;color:#000">Stückl</div></div>
<div class="a" style="left:695px;top:456px;width:1px;height:22px;background:#dcdcdc;"></div>
<svg class="a" style="left:562px;top:462px" width="9" height="11" viewBox="0 0 9 11"><path d="M0 0 L9 5.5 L0 11Z" fill="#1a78d8"/></svg>
<div class="a" style="left:577px;top:456px;width:117px;height:22px;overflow:hidden;">
<div class="t" style="left:0;top:0.54px;font-size:12.3px;color:#000">Artikel-Nr.</div></div>
<div class="a" style="left:905px;top:456px;width:1px;height:22px;background:#dcdcdc;"></div>
<div class="a" style="left:699px;top:456px;width:205px;height:22px;overflow:hidden;">
<div class="t" style="left:0;top:0.54px;font-size:12.3px;color:#000">Artikelbezeichnung</div></div>
<div class="a" style="left:1124px;top:456px;width:1px;height:22px;background:#dcdcdc;"></div>
<div class="a" style="left:909px;top:456px;width:214px;height:22px;overflow:hidden;">
<div class="t" style="left:0;top:0.54px;font-size:12.3px;color:#000">Dimension</div></div>
<div class="a" style="left:1164px;top:456px;width:1px;height:22px;background:#dcdcdc;"></div>
<div class="a" style="left:1128px;top:456px;width:35px;height:22px;overflow:hidden;">
<div class="t" style="left:0;top:0.54px;font-size:12.3px;color:#000">Fertigungsartikel</div></div>
<div class="a" style="left:1204px;top:456px;width:1px;height:22px;background:#dcdcdc;"></div>
<div class="a" style="left:1168px;top:456px;width:35px;height:22px;overflow:hidden;">
<div class="t" style="left:0;top:0.54px;font-size:12.3px;color:#000">Chargennummernpflicht!</div></div>
<div class="a" style="left:1244px;top:456px;width:1px;height:22px;background:#dcdcdc;"></div>
<div class="a" style="left:1208px;top:456px;width:35px;height:22px;overflow:hidden;">
<div class="t" style="left:0;top:0.54px;font-size:12.3px;color:#000">Prüfmerkmal</div></div>
<div class="a" style="left:1324px;top:456px;width:1px;height:22px;background:#dcdcdc;"></div>
<div class="a" style="left:1248px;top:456px;width:75px;height:22px;overflow:hidden;">
<div class="t" style="left:0;top:0.54px;font-size:12.3px;color:#000">Menge [Gesamt, ME] (Einkauf)</div></div>
<div class="a" style="left:1374px;top:456px;width:1px;height:22px;background:#dcdcdc;"></div>
<div class="a" style="left:1328px;top:456px;width:45px;height:22px;overflow:hidden;">
<div class="t" style="left:0;top:0.54px;font-size:12.3px;color:#000">ME</div></div>
<div class="a" style="left:1449px;top:456px;width:1px;height:22px;background:#dcdcdc;"></div>
<div class="a" style="left:1378px;top:456px;width:70px;height:22px;overflow:hidden;">
<div class="t" style="left:0;top:0.54px;font-size:12.3px;color:#000">Menge lagernd (ART) [GME]</div></div>
<div class="a" style="left:1524px;top:456px;width:1px;height:22px;background:#dcdcdc;"></div>
<div class="a" style="left:1453px;top:456px;width:70px;height:22px;overflow:hidden;">
<div class="t" style="left:0;top:0.54px;font-size:12.3px;color:#000">Menge verfügbar (ART) [GME]</div></div>
<div class="a" style="left:1598px;top:456px;width:1px;height:22px;background:#dcdcdc;"></div>
<div class="a" style="left:1528px;top:456px;width:69px;height:22px;overflow:hidden;">
<div class="t" style="left:0;top:0.54px;font-size:12.3px;color:#000">Sollbestand</div></div>
<div class="a" style="left:1694px;top:456px;width:1px;height:22px;background:#dcdcdc;"></div>
<div class="a" style="left:1602px;top:456px;width:91px;height:22px;overflow:hidden;">
<div class="t" style="left:0;top:0.54px;font-size:12.3px;color:#000">Referenz/Artikel-Nr. (Lieferant)</div></div>
<div class="a" style="left:1750px;top:456px;width:1px;height:22px;background:#dcdcdc;"></div>
<div class="a" style="left:1698px;top:456px;width:51px;height:22px;overflow:hidden;">
<div class="t" style="left:0;top:0.54px;font-size:12.3px;color:#000">AC</div></div>
<div class="a" style="left:1796px;top:456px;width:1px;height:22px;background:#dcdcdc;"></div>
<div class="a" style="left:1754px;top:456px;width:41px;height:22px;overflow:hidden;">
<div class="t" style="left:0;top:0.54px;font-size:12.3px;color:#000">Zuschnitt</div></div>
<div class="a" style="left:1866px;top:456px;width:1px;height:22px;background:#dcdcdc;"></div>
<div class="a" style="left:1800px;top:456px;width:65px;height:22px;overflow:hidden;">
<div class="t" style="left:0;top:0.54px;font-size:12.3px;color:#000">bvp_status</div></div>
<div class="a" style="left:1912px;top:456px;width:1px;height:22px;background:#dcdcdc;"></div>
<div class="a" style="left:1870px;top:456px;width:41px;height:22px;overflow:hidden;">
<div class="t" style="left:0;top:0.54px;font-size:12.3px;color:#000">bvp_not_gme</div></div>
<div class="a" style="left:2012px;top:456px;width:1px;height:22px;background:#dcdcdc;"></div>
<div class="a" style="left:1916px;top:456px;width:95px;height:22px;overflow:hidden;">
<div class="t" style="left:0;top:0.54px;font-size:12.3px;color:#000">F-Norm</div></div>
<div class="a" style="left:2086px;top:456px;width:1px;height:22px;background:#dcdcdc;"></div>
<div class="a" style="left:2016px;top:456px;width:69px;height:22px;overflow:hidden;">
<div class="t" style="left:0;top:0.54px;font-size:12.3px;color:#000">Alternativartikel</div></div>
<div class="a" style="left:2141px;top:456px;width:1px;height:22px;background:#dcdcdc;"></div>
<div class="a" style="left:2090px;top:456px;width:50px;height:22px;overflow:hidden;">
<div class="t" style="left:0;top:0.54px;font-size:12.3px;color:#000">Zusatztext Organisatiorisch BV</div></div>
<div class="a" style="left:2261px;top:456px;width:1px;height:22px;background:#dcdcdc;"></div>
<svg class="a" style="left:2148px;top:462px" width="9" height="11" viewBox="0 0 9 11"><path d="M0 0 L9 5.5 L0 11Z" fill="#1a78d8"/></svg>
<div class="a" style="left:2163px;top:456px;width:97px;height:22px;overflow:hidden;">
<div class="t" style="left:0;top:0.54px;font-size:12.3px;color:#000">Lieferant</div></div>
<div class="a" style="left:2331px;top:456px;width:1px;height:22px;background:#dcdcdc;"></div>
<div class="a" style="left:2265px;top:456px;width:65px;height:22px;overflow:hidden;">
<div class="t" style="left:0;top:0.54px;font-size:12.3px;color:#000">Preis [EP, ME] (Einkauf)</div></div>
<div class="a" style="left:2356px;top:456px;width:1px;height:22px;background:#dcdcdc;"></div>
<div class="a" style="left:2335px;top:456px;width:21px;height:22px;overflow:hidden;">
<div class="t" style="left:0;top:0.54px;font-size:12.3px;color:#000">Preis [EP, GME, AZ, BW] (Einkauf)</div></div>
<svg class="a" style="left:2245px;top:461px" width="9" height="9" viewBox="0 0 9 9"><path d="M4.5 0.5 L8.5 8.5 L0.5 8.5Z" fill="none" stroke="#888"/></svg>
<div class="a" style="left:30px;top:478px;width:2326px;height:18px;background:#0078d7;"></div>
<div class="a" style="left:30px;top:497px;width:2326px;height:20px;background:#efefef;"></div>
<div class="a" style="left:129px;top:497px;width:1px;height:21px;background:#dcdcdc;"></div>
<div class="a" style="left:174px;top:497px;width:1px;height:21px;background:#dcdcdc;"></div>
<div class="a" style="left:274px;top:497px;width:1px;height:21px;background:#dcdcdc;"></div>
<div class="a" style="left:385px;top:497px;width:1px;height:21px;background:#dcdcdc;"></div>
<div class="a" style="left:450px;top:497px;width:1px;height:21px;background:#dcdcdc;"></div>
<div class="a" style="left:515px;top:497px;width:1px;height:21px;background:#dcdcdc;"></div>
<div class="a" style="left:516px;top:497px;width:39px;height:20px;background:#fffee0;"></div>
<div class="a" style="left:555px;top:497px;width:1px;height:21px;background:#dcdcdc;"></div>
<div class="a" style="left:695px;top:497px;width:1px;height:21px;background:#dcdcdc;"></div>
<div class="a" style="left:905px;top:497px;width:1px;height:21px;background:#dcdcdc;"></div>
<div class="a" style="left:906px;top:497px;width:218px;height:20px;background:#fffee0;"></div>
<div class="a" style="left:1124px;top:497px;width:1px;height:21px;background:#dcdcdc;"></div>
<div class="a" style="left:1125px;top:497px;width:39px;height:20px;background:#fffee0;"></div>
<div class="a" style="left:1164px;top:497px;width:1px;height:21px;background:#dcdcdc;"></div>
<div class="a" style="left:1165px;top:497px;width:39px;height:20px;background:#fffee0;"></div>
<div class="a" style="left:1204px;top:497px;width:1px;height:21px;background:#dcdcdc;"></div>
<div class="a" style="left:1205px;top:497px;width:39px;height:20px;background:#fffee0;"></div>
<div class="a" style="left:1244px;top:497px;width:1px;height:21px;background:#dcdcdc;"></div>
<div class="a" style="left:1324px;top:497px;width:1px;height:21px;background:#dcdcdc;"></div>
<div class="a" style="left:1325px;top:497px;width:49px;height:20px;background:#fffee0;"></div>
<div class="a" style="left:1374px;top:497px;width:1px;height:21px;background:#dcdcdc;"></div>
<div class="a" style="left:1375px;top:497px;width:74px;height:20px;background:#fffee0;"></div>
<div class="a" style="left:1449px;top:497px;width:1px;height:21px;background:#dcdcdc;"></div>
<div class="a" style="left:1450px;top:497px;width:74px;height:20px;background:#fffee0;"></div>
<div class="a" style="left:1524px;top:497px;width:1px;height:21px;background:#dcdcdc;"></div>
<div class="a" style="left:1525px;top:497px;width:73px;height:20px;background:#fffee0;"></div>
<div class="a" style="left:1598px;top:497px;width:1px;height:21px;background:#dcdcdc;"></div>
<div class="a" style="left:1694px;top:497px;width:1px;height:21px;background:#dcdcdc;"></div>
<div class="a" style="left:1695px;top:497px;width:55px;height:20px;background:#fffee0;"></div>
<div class="a" style="left:1750px;top:497px;width:1px;height:21px;background:#dcdcdc;"></div>
<div class="a" style="left:1796px;top:497px;width:1px;height:21px;background:#dcdcdc;"></div>
<div class="a" style="left:1797px;top:497px;width:69px;height:20px;background:#fffee0;"></div>
<div class="a" style="left:1866px;top:497px;width:1px;height:21px;background:#dcdcdc;"></div>
<div class="a" style="left:1912px;top:497px;width:1px;height:21px;background:#dcdcdc;"></div>
<div class="a" style="left:2012px;top:497px;width:1px;height:21px;background:#dcdcdc;"></div>
<div class="a" style="left:2086px;top:497px;width:1px;height:21px;background:#dcdcdc;"></div>
<div class="a" style="left:2087px;top:497px;width:54px;height:20px;background:#c0e39b;"></div>
<div class="a" style="left:2141px;top:497px;width:1px;height:21px;background:#dcdcdc;"></div>
<div class="a" style="left:2142px;top:497px;width:119px;height:20px;background:#f7b5a5;"></div>
<div class="a" style="left:2261px;top:497px;width:1px;height:21px;background:#dcdcdc;"></div>
<div class="a" style="left:2331px;top:497px;width:1px;height:21px;background:#dcdcdc;"></div>
<div class="a" style="left:2332px;top:497px;width:24px;height:20px;background:#fffee0;"></div>
<div class="a" style="left:2356px;top:497px;width:1px;height:21px;background:#dcdcdc;"></div>
<div class="a" style="left:30px;top:517px;width:2326px;height:1px;background:#dcdcdc;"></div>
<div class="t" style="left:558.00px;top:496.75px;font-size:12.270px;color:#000;text-decoration:underline;">E.B.PKW.A-1168534-0...</div>
<div class="t" style="left:698.20px;top:496.75px;font-size:12.270px;color:#000;">*Kühlung Sensoreinheit*</div>
<div class="a" style="left:1138px;top:500px;width:13px;height:13px;background:#fff;box-shadow:inset 0 0 0 1px #333;"></div>
<div class="a" style="left:1178px;top:500px;width:13px;height:13px;background:#fff;box-shadow:inset 0 0 0 1px #333;"></div>
<div class="a" style="left:1218px;top:500px;width:13px;height:13px;background:#fff;box-shadow:inset 0 0 0 1px #333;"></div>
<div class="t" style="left:1283.97px;top:496.75px;font-size:12.270px;color:#000;">330,00</div>
<div class="t" style="left:1327.00px;top:496.75px;font-size:12.270px;color:#000;">Stk</div>
<div class="t" style="left:1415.79px;top:496.75px;font-size:12.270px;color:#000;">0,000</div>
<div class="t" style="left:1479.88px;top:496.75px;font-size:12.270px;color:#000;">-330,00</div>
<div class="t" style="left:1697.30px;top:497.19px;font-size:11.000px;color:#000;transform:scaleX(0.905);transform-origin:0 0;">KT1001</div>
<div class="a" style="left:1767px;top:500px;width:13px;height:13px;background:#fff;box-shadow:inset 0 0 0 1px #333;"></div>
<div class="a" style="left:1883px;top:500px;width:13px;height:13px;background:#fff;box-shadow:inset 0 0 0 1px #333;"></div>
<svg class="a" style="left:2107px;top:501px" width="15" height="12" viewBox="0 0 15 12"><path d="M0.5 0.5 H11 L14.5 3.5 V11.5 H0.5Z" fill="#f8f8f8" stroke="#d8d8d8"/><text x="4.3" y="9.8" font-family="Liberation Sans" font-style="italic" font-size="10.5" fill="#a8a8a8">a</text></svg>
<div class="t" style="left:2304.62px;top:496.75px;font-size:12.270px;color:#000;">0,00</div>
<div class="a" style="left:30px;top:518px;width:2326px;height:20px;background:#ffffff;"></div>
<div class="a" style="left:129px;top:518px;width:1px;height:21px;background:#dcdcdc;"></div>
<div class="a" style="left:174px;top:518px;width:1px;height:21px;background:#dcdcdc;"></div>
<div class="a" style="left:274px;top:518px;width:1px;height:21px;background:#dcdcdc;"></div>
<div class="a" style="left:385px;top:518px;width:1px;height:21px;background:#dcdcdc;"></div>
<div class="a" style="left:450px;top:518px;width:1px;height:21px;background:#dcdcdc;"></div>
<div class="a" style="left:515px;top:518px;width:1px;height:21px;background:#dcdcdc;"></div>
<div class="a" style="left:516px;top:518px;width:39px;height:20px;background:#fffee0;"></div>
<div class="a" style="left:555px;top:518px;width:1px;height:21px;background:#dcdcdc;"></div>
<div class="a" style="left:695px;top:518px;width:1px;height:21px;background:#dcdcdc;"></div>
<div class="a" style="left:905px;top:518px;width:1px;height:21px;background:#dcdcdc;"></div>
<div class="a" style="left:906px;top:518px;width:218px;height:20px;background:#fffee0;"></div>
<div class="a" style="left:1124px;top:518px;width:1px;height:21px;background:#dcdcdc;"></div>
<div class="a" style="left:1125px;top:518px;width:39px;height:20px;background:#f7b5a5;"></div>
<div class="a" style="left:1164px;top:518px;width:1px;height:21px;background:#dcdcdc;"></div>
<div class="a" style="left:1165px;top:518px;width:39px;height:20px;background:#fffee0;"></div>
<div class="a" style="left:1204px;top:518px;width:1px;height:21px;background:#dcdcdc;"></div>
<div class="a" style="left:1205px;top:518px;width:39px;height:20px;background:#fffee0;"></div>
<div class="a" style="left:1244px;top:518px;width:1px;height:21px;background:#dcdcdc;"></div>
<div class="a" style="left:1324px;top:518px;width:1px;height:21px;background:#dcdcdc;"></div>
<div class="a" style="left:1325px;top:518px;width:49px;height:20px;background:#fffee0;"></div>
<div class="a" style="left:1374px;top:518px;width:1px;height:21px;background:#dcdcdc;"></div>
<div class="a" style="left:1375px;top:518px;width:74px;height:20px;background:#fffee0;"></div>
<div class="a" style="left:1449px;top:518px;width:1px;height:21px;background:#dcdcdc;"></div>
<div class="a" style="left:1450px;top:518px;width:74px;height:20px;background:#fffee0;"></div>
<div class="a" style="left:1524px;top:518px;width:1px;height:21px;background:#dcdcdc;"></div>
<div class="a" style="left:1525px;top:518px;width:73px;height:20px;background:#fffee0;"></div>
<div class="a" style="left:1598px;top:518px;width:1px;height:21px;background:#dcdcdc;"></div>
<div class="a" style="left:1694px;top:518px;width:1px;height:21px;background:#dcdcdc;"></div>
<div class="a" style="left:1695px;top:518px;width:55px;height:20px;background:#fffee0;"></div>
<div class="a" style="left:1750px;top:518px;width:1px;height:21px;background:#dcdcdc;"></div>
<div class="a" style="left:1796px;top:518px;width:1px;height:21px;background:#dcdcdc;"></div>
<div class="a" style="left:1797px;top:518px;width:69px;height:20px;background:#fffee0;"></div>
<div class="a" style="left:1866px;top:518px;width:1px;height:21px;background:#dcdcdc;"></div>
<div class="a" style="left:1912px;top:518px;width:1px;height:21px;background:#dcdcdc;"></div>
<div class="a" style="left:2012px;top:518px;width:1px;height:21px;background:#dcdcdc;"></div>
<div class="a" style="left:2086px;top:518px;width:1px;height:21px;background:#dcdcdc;"></div>
<div class="a" style="left:2087px;top:518px;width:54px;height:20px;background:#c0e39b;"></div>
<div class="a" style="left:2141px;top:518px;width:1px;height:21px;background:#dcdcdc;"></div>
<div class="a" style="left:2142px;top:518px;width:119px;height:20px;background:#f7b5a5;"></div>
<div class="a" style="left:2261px;top:518px;width:1px;height:21px;background:#dcdcdc;"></div>
<div class="a" style="left:2331px;top:518px;width:1px;height:21px;background:#dcdcdc;"></div>
<div class="a" style="left:2332px;top:518px;width:24px;height:20px;background:#fffee0;"></div>
<div class="a" style="left:2356px;top:518px;width:1px;height:21px;background:#dcdcdc;"></div>
<div class="a" style="left:30px;top:538px;width:2326px;height:1px;background:#dcdcdc;"></div>
<div class="t" style="left:558.00px;top:517.75px;font-size:12.270px;color:#000;text-decoration:underline;">1100030</div>
<div class="t" style="left:698.20px;top:517.75px;font-size:12.270px;color:#000;">*Fertigteil 0815*</div>
<div class="a" style="left:1138px;top:521px;width:13px;height:13px;background:#fff;box-shadow:inset 0 0 0 1px #333;"></div>
<svg class="a" style="left:1138px;top:521px" width="13" height="13" viewBox="0 0 13 13"><path d="M2.6 6.6 L5.2 9.2 L10.6 3.4" fill="none" stroke="#333" stroke-width="1.3"/></svg>
<div class="a" style="left:1178px;top:521px;width:13px;height:13px;background:#fff;box-shadow:inset 0 0 0 1px #333;"></div>
<div class="a" style="left:1218px;top:521px;width:13px;height:13px;background:#fff;box-shadow:inset 0 0 0 1px #333;"></div>
<div class="t" style="left:1290.79px;top:517.75px;font-size:12.270px;color:#000;">10,00</div>
<div class="t" style="left:1327.00px;top:517.75px;font-size:12.270px;color:#000;">Stk</div>
<div class="t" style="left:1415.79px;top:517.75px;font-size:12.270px;color:#000;">0,000</div>
<div class="t" style="left:1486.71px;top:517.75px;font-size:12.270px;color:#000;">-10,00</div>
<div class="t" style="left:1697.30px;top:518.19px;font-size:11.000px;color:#000;transform:scaleX(0.905);transform-origin:0 0;">PR1001</div>
<div class="a" style="left:1767px;top:521px;width:13px;height:13px;background:#fff;box-shadow:inset 0 0 0 1px #333;"></div>
<div class="a" style="left:1883px;top:521px;width:13px;height:13px;background:#fff;box-shadow:inset 0 0 0 1px #333;"></div>
<svg class="a" style="left:2107px;top:522px" width="15" height="12" viewBox="0 0 15 12"><path d="M0.5 0.5 H11 L14.5 3.5 V11.5 H0.5Z" fill="#f8f8f8" stroke="#d8d8d8"/><text x="4.3" y="9.8" font-family="Liberation Sans" font-style="italic" font-size="10.5" fill="#a8a8a8">a</text></svg>
<div class="t" style="left:2297.79px;top:517.75px;font-size:12.270px;color:#000;">20,91</div>
<div class="a" style="left:30px;top:539px;width:2326px;height:20px;background:#efefef;"></div>
<div class="a" style="left:129px;top:539px;width:1px;height:21px;background:#dcdcdc;"></div>
<div class="a" style="left:174px;top:539px;width:1px;height:21px;background:#dcdcdc;"></div>
<div class="a" style="left:274px;top:539px;width:1px;height:21px;background:#dcdcdc;"></div>
<div class="a" style="left:385px;top:539px;width:1px;height:21px;background:#dcdcdc;"></div>
<div class="a" style="left:450px;top:539px;width:1px;height:21px;background:#dcdcdc;"></div>
<div class="a" style="left:515px;top:539px;width:1px;height:21px;background:#dcdcdc;"></div>
<div class="a" style="left:516px;top:539px;width:39px;height:20px;background:#fffee0;"></div>
<div class="a" style="left:555px;top:539px;width:1px;height:21px;background:#dcdcdc;"></div>
<div class="a" style="left:695px;top:539px;width:1px;height:21px;background:#dcdcdc;"></div>
<div class="a" style="left:905px;top:539px;width:1px;height:21px;background:#dcdcdc;"></div>
<div class="a" style="left:906px;top:539px;width:218px;height:20px;background:#fffee0;"></div>
<div class="a" style="left:1124px;top:539px;width:1px;height:21px;background:#dcdcdc;"></div>
<div class="a" style="left:1125px;top:539px;width:39px;height:20px;background:#fffee0;"></div>
<div class="a" style="left:1164px;top:539px;width:1px;height:21px;background:#dcdcdc;"></div>
<div class="a" style="left:1165px;top:539px;width:39px;height:20px;background:#fffee0;"></div>
<div class="a" style="left:1204px;top:539px;width:1px;height:21px;background:#dcdcdc;"></div>
<div class="a" style="left:1205px;top:539px;width:39px;height:20px;background:#fffee0;"></div>
<div class="a" style="left:1244px;top:539px;width:1px;height:21px;background:#dcdcdc;"></div>
<div class="a" style="left:1324px;top:539px;width:1px;height:21px;background:#dcdcdc;"></div>
<div class="a" style="left:1325px;top:539px;width:49px;height:20px;background:#fffee0;"></div>
<div class="a" style="left:1374px;top:539px;width:1px;height:21px;background:#dcdcdc;"></div>
<div class="a" style="left:1375px;top:539px;width:74px;height:20px;background:#fffee0;"></div>
<div class="a" style="left:1449px;top:539px;width:1px;height:21px;background:#dcdcdc;"></div>
<div class="a" style="left:1450px;top:539px;width:74px;height:20px;background:#fffee0;"></div>
<div class="a" style="left:1524px;top:539px;width:1px;height:21px;background:#dcdcdc;"></div>
<div class="a" style="left:1525px;top:539px;width:73px;height:20px;background:#fffee0;"></div>
<div class="a" style="left:1598px;top:539px;width:1px;height:21px;background:#dcdcdc;"></div>
<div class="a" style="left:1694px;top:539px;width:1px;height:21px;background:#dcdcdc;"></div>
<div class="a" style="left:1695px;top:539px;width:55px;height:20px;background:#fffee0;"></div>
<div class="a" style="left:1750px;top:539px;width:1px;height:21px;background:#dcdcdc;"></div>
<div class="a" style="left:1796px;top:539px;width:1px;height:21px;background:#dcdcdc;"></div>
<div class="a" style="left:1797px;top:539px;width:69px;height:20px;background:#fffee0;"></div>
<div class="a" style="left:1866px;top:539px;width:1px;height:21px;background:#dcdcdc;"></div>
<div class="a" style="left:1912px;top:539px;width:1px;height:21px;background:#dcdcdc;"></div>
<div class="a" style="left:2012px;top:539px;width:1px;height:21px;background:#dcdcdc;"></div>
<div class="a" style="left:2086px;top:539px;width:1px;height:21px;background:#dcdcdc;"></div>
<div class="a" style="left:2087px;top:539px;width:54px;height:20px;background:#c0e39b;"></div>
<div class="a" style="left:2141px;top:539px;width:1px;height:21px;background:#dcdcdc;"></div>
<div class="a" style="left:2142px;top:539px;width:119px;height:20px;background:#f7b5a5;"></div>
<div class="a" style="left:2261px;top:539px;width:1px;height:21px;background:#dcdcdc;"></div>
<div class="a" style="left:2331px;top:539px;width:1px;height:21px;background:#dcdcdc;"></div>
<div class="a" style="left:2332px;top:539px;width:24px;height:20px;background:#fffee0;"></div>
<div class="a" style="left:2356px;top:539px;width:1px;height:21px;background:#dcdcdc;"></div>
<div class="a" style="left:30px;top:559px;width:2326px;height:1px;background:#dcdcdc;"></div>
<div class="t" style="left:558.00px;top:538.75px;font-size:12.270px;color:#000;text-decoration:underline;">D.W.13.1100004</div>
<div class="t" style="left:698.20px;top:538.75px;font-size:12.270px;color:#000;">*Dichtung-Schutz13 mm*</div>
<div class="a" style="left:1138px;top:542px;width:13px;height:13px;background:#fff;box-shadow:inset 0 0 0 1px #333;"></div>
<div class="a" style="left:1178px;top:542px;width:13px;height:13px;background:#fff;box-shadow:inset 0 0 0 1px #333;"></div>
<div class="a" style="left:1218px;top:542px;width:13px;height:13px;background:#fff;box-shadow:inset 0 0 0 1px #333;"></div>
<div class="t" style="left:1283.97px;top:538.75px;font-size:12.270px;color:#000;">420,00</div>
<div class="t" style="left:1327.00px;top:538.75px;font-size:12.270px;color:#000;">Stk</div>
<div class="t" style="left:1415.79px;top:538.75px;font-size:12.270px;color:#000;">0,000</div>
<div class="t" style="left:1479.88px;top:538.75px;font-size:12.270px;color:#000;">-680,00</div>
<div class="t" style="left:1697.30px;top:539.19px;font-size:11.000px;color:#000;transform:scaleX(0.905);transform-origin:0 0;">KT1001</div>
<div class="a" style="left:1767px;top:542px;width:13px;height:13px;background:#fff;box-shadow:inset 0 0 0 1px #333;"></div>
<div class="a" style="left:1883px;top:542px;width:13px;height:13px;background:#fff;box-shadow:inset 0 0 0 1px #333;"></div>
<svg class="a" style="left:2107px;top:543px" width="15" height="12" viewBox="0 0 15 12"><path d="M0.5 0.5 H11 L14.5 3.5 V11.5 H0.5Z" fill="#f8f8f8" stroke="#d8d8d8"/><text x="4.3" y="9.8" font-family="Liberation Sans" font-style="italic" font-size="10.5" fill="#a8a8a8">a</text></svg>
<div class="t" style="left:2304.62px;top:538.75px;font-size:12.270px;color:#000;">0,00</div>
<div class="a" style="left:30px;top:560px;width:2326px;height:20px;background:#ffffff;"></div>
<div class="a" style="left:129px;top:560px;width:1px;height:21px;background:#dcdcdc;"></div>
<div class="a" style="left:174px;top:560px;width:1px;height:21px;background:#dcdcdc;"></div>
<div class="a" style="left:274px;top:560px;width:1px;height:21px;background:#dcdcdc;"></div>
<div class="a" style="left:385px;top:560px;width:1px;height:21px;background:#dcdcdc;"></div>
<div class="a" style="left:450px;top:560px;width:1px;height:21px;background:#dcdcdc;"></div>
<div class="a" style="left:515px;top:560px;width:1px;height:21px;background:#dcdcdc;"></div>
<div class="a" style="left:516px;top:560px;width:39px;height:20px;background:#fffee0;"></div>
<div class="a" style="left:555px;top:560px;width:1px;height:21px;background:#dcdcdc;"></div>
<div class="a" style="left:695px;top:560px;width:1px;height:21px;background:#dcdcdc;"></div>
<div class="a" style="left:905px;top:560px;width:1px;height:21px;background:#dcdcdc;"></div>
<div class="a" style="left:906px;top:560px;width:218px;height:20px;background:#fffee0;"></div>
<div class="a" style="left:1124px;top:560px;width:1px;height:21px;background:#dcdcdc;"></div>
<div class="a" style="left:1125px;top:560px;width:39px;height:20px;background:#f7b5a5;"></div>
<div class="a" style="left:1164px;top:560px;width:1px;height:21px;background:#dcdcdc;"></div>
<div class="a" style="left:1165px;top:560px;width:39px;height:20px;background:#fffee0;"></div>
<div class="a" style="left:1204px;top:560px;width:1px;height:21px;background:#dcdcdc;"></div>
<div class="a" style="left:1205px;top:560px;width:39px;height:20px;background:#fffee0;"></div>
<div class="a" style="left:1244px;top:560px;width:1px;height:21px;background:#dcdcdc;"></div>
<div class="a" style="left:1324px;top:560px;width:1px;height:21px;background:#dcdcdc;"></div>
<div class="a" style="left:1325px;top:560px;width:49px;height:20px;background:#fffee0;"></div>
<div class="a" style="left:1374px;top:560px;width:1px;height:21px;background:#dcdcdc;"></div>
<div class="a" style="left:1375px;top:560px;width:74px;height:20px;background:#fffee0;"></div>
<div class="a" style="left:1449px;top:560px;width:1px;height:21px;background:#dcdcdc;"></div>
<div class="a" style="left:1450px;top:560px;width:74px;height:20px;background:#f7b5a5;"></div>
<div class="a" style="left:1524px;top:560px;width:1px;height:21px;background:#dcdcdc;"></div>
<div class="a" style="left:1525px;top:560px;width:73px;height:20px;background:#fffee0;"></div>
<div class="a" style="left:1598px;top:560px;width:1px;height:21px;background:#dcdcdc;"></div>
<div class="a" style="left:1694px;top:560px;width:1px;height:21px;background:#dcdcdc;"></div>
<div class="a" style="left:1695px;top:560px;width:55px;height:20px;background:#fffee0;"></div>
<div class="a" style="left:1750px;top:560px;width:1px;height:21px;background:#dcdcdc;"></div>
<div class="a" style="left:1796px;top:560px;width:1px;height:21px;background:#dcdcdc;"></div>
<div class="a" style="left:1797px;top:560px;width:69px;height:20px;background:#fffee0;"></div>
<div class="a" style="left:1866px;top:560px;width:1px;height:21px;background:#dcdcdc;"></div>
<div class="a" style="left:1912px;top:560px;width:1px;height:21px;background:#dcdcdc;"></div>
<div class="a" style="left:2012px;top:560px;width:1px;height:21px;background:#dcdcdc;"></div>
<div class="a" style="left:2086px;top:560px;width:1px;height:21px;background:#dcdcdc;"></div>
<div class="a" style="left:2087px;top:560px;width:54px;height:20px;background:#c0e39b;"></div>
<div class="a" style="left:2141px;top:560px;width:1px;height:21px;background:#dcdcdc;"></div>
<div class="a" style="left:2142px;top:560px;width:119px;height:20px;background:#f7b5a5;"></div>
<div class="a" style="left:2261px;top:560px;width:1px;height:21px;background:#dcdcdc;"></div>
<div class="a" style="left:2331px;top:560px;width:1px;height:21px;background:#dcdcdc;"></div>
<div class="a" style="left:2332px;top:560px;width:24px;height:20px;background:#fffee0;"></div>
<div class="a" style="left:2356px;top:560px;width:1px;height:21px;background:#dcdcdc;"></div>
<div class="a" style="left:30px;top:580px;width:2326px;height:1px;background:#dcdcdc;"></div>
<div class="t" style="left:558.00px;top:559.75px;font-size:12.270px;color:#000;text-decoration:underline;">F.13.N-272.371 /A</div>
<div class="t" style="left:698.20px;top:559.75px;font-size:12.270px;color:#000;">*Flansch A*</div>
<div class="a" style="left:1138px;top:563px;width:13px;height:13px;background:#fff;box-shadow:inset 0 0 0 1px #333;"></div>
<svg class="a" style="left:1138px;top:563px" width="13" height="13" viewBox="0 0 13 13"><path d="M2.6 6.6 L5.2 9.2 L10.6 3.4" fill="none" stroke="#333" stroke-width="1.3"/></svg>
<div class="a" style="left:1178px;top:563px;width:13px;height:13px;background:#fff;box-shadow:inset 0 0 0 1px #333;"></div>
<div class="a" style="left:1218px;top:563px;width:13px;height:13px;background:#fff;box-shadow:inset 0 0 0 1px #333;"></div>
<div class="t" style="left:1283.97px;top:559.75px;font-size:12.270px;color:#000;">850,00</div>
<div class="t" style="left:1327.00px;top:559.75px;font-size:12.270px;color:#000;">Stk</div>
<div class="t" style="left:1415.79px;top:559.75px;font-size:12.270px;color:#000;">0,000</div>
<div class="t" style="left:1483.97px;top:559.75px;font-size:12.270px;color:#000;">210,00</div>
<div class="t" style="left:1697.30px;top:560.19px;font-size:11.000px;color:#000;transform:scaleX(0.905);transform-origin:0 0;">PR1001</div>
<div class="a" style="left:1767px;top:563px;width:13px;height:13px;background:#fff;box-shadow:inset 0 0 0 1px #333;"></div>
<div class="a" style="left:1883px;top:563px;width:13px;height:13px;background:#fff;box-shadow:inset 0 0 0 1px #333;"></div>
<svg class="a" style="left:2107px;top:564px" width="15" height="12" viewBox="0 0 15 12"><path d="M0.5 0.5 H11 L14.5 3.5 V11.5 H0.5Z" fill="#f8f8f8" stroke="#d8d8d8"/><text x="4.3" y="9.8" font-family="Liberation Sans" font-style="italic" font-size="10.5" fill="#a8a8a8">a</text></svg>
<div class="t" style="left:2290.97px;top:559.75px;font-size:12.270px;color:#000;">580,75</div>
<div class="a" style="left:30px;top:581px;width:2326px;height:20px;background:#efefef;"></div>
<div class="a" style="left:129px;top:581px;width:1px;height:21px;background:#dcdcdc;"></div>
<div class="a" style="left:174px;top:581px;width:1px;height:21px;background:#dcdcdc;"></div>
<div class="a" style="left:274px;top:581px;width:1px;height:21px;background:#dcdcdc;"></div>
<div class="a" style="left:385px;top:581px;width:1px;height:21px;background:#dcdcdc;"></div>
<div class="a" style="left:450px;top:581px;width:1px;height:21px;background:#dcdcdc;"></div>
<div class="a" style="left:515px;top:581px;width:1px;height:21px;background:#dcdcdc;"></div>
<div class="a" style="left:516px;top:581px;width:39px;height:20px;background:#fffee0;"></div>
<div class="a" style="left:555px;top:581px;width:1px;height:21px;background:#dcdcdc;"></div>
<div class="a" style="left:695px;top:581px;width:1px;height:21px;background:#dcdcdc;"></div>
<div class="a" style="left:905px;top:581px;width:1px;height:21px;background:#dcdcdc;"></div>
<div class="a" style="left:906px;top:581px;width:218px;height:20px;background:#fffee0;"></div>
<div class="a" style="left:1124px;top:581px;width:1px;height:21px;background:#dcdcdc;"></div>
<div class="a" style="left:1125px;top:581px;width:39px;height:20px;background:#f7b5a5;"></div>
<div class="a" style="left:1164px;top:581px;width:1px;height:21px;background:#dcdcdc;"></div>
<div class="a" style="left:1165px;top:581px;width:39px;height:20px;background:#fffee0;"></div>
<div class="a" style="left:1204px;top:581px;width:1px;height:21px;background:#dcdcdc;"></div>
<div class="a" style="left:1205px;top:581px;width:39px;height:20px;background:#fffee0;"></div>
<div class="a" style="left:1244px;top:581px;width:1px;height:21px;background:#dcdcdc;"></div>
<div class="a" style="left:1324px;top:581px;width:1px;height:21px;background:#dcdcdc;"></div>
<div class="a" style="left:1325px;top:581px;width:49px;height:20px;background:#fffee0;"></div>
<div class="a" style="left:1374px;top:581px;width:1px;height:21px;background:#dcdcdc;"></div>
<div class="a" style="left:1375px;top:581px;width:74px;height:20px;background:#fffee0;"></div>
<div class="a" style="left:1449px;top:581px;width:1px;height:21px;background:#dcdcdc;"></div>
<div class="a" style="left:1450px;top:581px;width:74px;height:20px;background:#fffee0;"></div>
<div class="a" style="left:1524px;top:581px;width:1px;height:21px;background:#dcdcdc;"></div>
<div class="a" style="left:1525px;top:581px;width:73px;height:20px;background:#fffee0;"></div>
<div class="a" style="left:1598px;top:581px;width:1px;height:21px;background:#dcdcdc;"></div>
<div class="a" style="left:1694px;top:581px;width:1px;height:21px;background:#dcdcdc;"></div>
<div class="a" style="left:1695px;top:581px;width:55px;height:20px;background:#fffee0;"></div>
<div class="a" style="left:1750px;top:581px;width:1px;height:21px;background:#dcdcdc;"></div>
<div class="a" style="left:1796px;top:581px;width:1px;height:21px;background:#dcdcdc;"></div>
<div class="a" style="left:1797px;top:581px;width:69px;height:20px;background:#fffee0;"></div>
<div class="a" style="left:1866px;top:581px;width:1px;height:21px;background:#dcdcdc;"></div>
<div class="a" style="left:1912px;top:581px;width:1px;height:21px;background:#dcdcdc;"></div>
<div class="a" style="left:2012px;top:581px;width:1px;height:21px;background:#dcdcdc;"></div>
<div class="a" style="left:2086px;top:581px;width:1px;height:21px;background:#dcdcdc;"></div>
<div class="a" style="left:2087px;top:581px;width:54px;height:20px;background:#c0e39b;"></div>
<div class="a" style="left:2141px;top:581px;width:1px;height:21px;background:#dcdcdc;"></div>
<div class="a" style="left:2142px;top:581px;width:119px;height:20px;background:#f7b5a5;"></div>
<div class="a" style="left:2261px;top:581px;width:1px;height:21px;background:#dcdcdc;"></div>
<div class="a" style="left:2331px;top:581px;width:1px;height:21px;background:#dcdcdc;"></div>
<div class="a" style="left:2332px;top:581px;width:24px;height:20px;background:#fffee0;"></div>
<div class="a" style="left:2356px;top:581px;width:1px;height:21px;background:#dcdcdc;"></div>
<div class="a" style="left:30px;top:601px;width:2326px;height:1px;background:#dcdcdc;"></div>
<div class="t" style="left:558.00px;top:580.75px;font-size:12.270px;color:#000;text-decoration:underline;">W.13.N-272.371 /A</div>
<div class="t" style="left:698.20px;top:580.75px;font-size:12.270px;color:#000;">*Welle Nut A*</div>
<div class="t" style="left:907.60px;top:581.22px;font-size:10.900px;color:#000;">Ø13x37 mm</div>
<div class="a" style="left:1138px;top:584px;width:13px;height:13px;background:#fff;box-shadow:inset 0 0 0 1px #333;"></div>
<svg class="a" style="left:1138px;top:584px" width="13" height="13" viewBox="0 0 13 13"><path d="M2.6 6.6 L5.2 9.2 L10.6 3.4" fill="none" stroke="#333" stroke-width="1.3"/></svg>
<div class="a" style="left:1178px;top:584px;width:13px;height:13px;background:#fff;box-shadow:inset 0 0 0 1px #333;"></div>
<div class="a" style="left:1218px;top:584px;width:13px;height:13px;background:#fff;box-shadow:inset 0 0 0 1px #333;"></div>
<div class="t" style="left:1266.91px;top:580.75px;font-size:12.270px;color:#000;">12.150,00</div>
<div class="t" style="left:1327.00px;top:580.75px;font-size:12.270px;color:#000;">Stk</div>
<div class="t" style="left:1415.79px;top:580.75px;font-size:12.270px;color:#000;">0,000</div>
<div class="t" style="left:1479.88px;top:580.75px;font-size:12.270px;color:#000;">-946,00</div>
<div class="t" style="left:1697.30px;top:581.19px;font-size:11.000px;color:#000;transform:scaleX(0.905);transform-origin:0 0;">PR1001</div>
<div class="a" style="left:1767px;top:584px;width:13px;height:13px;background:#fff;box-shadow:inset 0 0 0 1px #333;"></div>
<div class="a" style="left:1883px;top:584px;width:13px;height:13px;background:#fff;box-shadow:inset 0 0 0 1px #333;"></div>
<svg class="a" style="left:2107px;top:585px" width="15" height="12" viewBox="0 0 15 12"><path d="M0.5 0.5 H11 L14.5 3.5 V11.5 H0.5Z" fill="#f8f8f8" stroke="#d8d8d8"/><text x="4.3" y="9.8" font-family="Liberation Sans" font-style="italic" font-size="10.5" fill="#a8a8a8">a</text></svg>
<div class="t" style="left:2297.79px;top:580.75px;font-size:12.270px;color:#000;">59,21</div>
<div class="a" style="left:30px;top:602px;width:2326px;height:20px;background:#ffffff;"></div>
<div class="a" style="left:129px;top:602px;width:1px;height:21px;background:#dcdcdc;"></div>
<div class="a" style="left:174px;top:602px;width:1px;height:21px;background:#dcdcdc;"></div>
<div class="a" style="left:274px;top:602px;width:1px;height:21px;background:#dcdcdc;"></div>
<div class="a" style="left:385px;top:602px;width:1px;height:21px;background:#dcdcdc;"></div>
<div class="a" style="left:450px;top:602px;width:1px;height:21px;background:#dcdcdc;"></div>
<div class="a" style="left:515px;top:602px;width:1px;height:21px;background:#dcdcdc;"></div>
<div class="a" style="left:516px;top:602px;width:39px;height:20px;background:#fffee0;"></div>
<div class="a" style="left:555px;top:602px;width:1px;height:21px;background:#dcdcdc;"></div>
<div class="a" style="left:695px;top:602px;width:1px;height:21px;background:#dcdcdc;"></div>
<div class="a" style="left:905px;top:602px;width:1px;height:21px;background:#dcdcdc;"></div>
<div class="a" style="left:906px;top:602px;width:218px;height:20px;background:#fffee0;"></div>
<div class="a" style="left:1124px;top:602px;width:1px;height:21px;background:#dcdcdc;"></div>
<div class="a" style="left:1125px;top:602px;width:39px;height:20px;background:#fffee0;"></div>
<div class="a" style="left:1164px;top:602px;width:1px;height:21px;background:#dcdcdc;"></div>
<div class="a" style="left:1165px;top:602px;width:39px;height:20px;background:#f7b5a5;"></div>
<div class="a" style="left:1204px;top:602px;width:1px;height:21px;background:#dcdcdc;"></div>
<div class="a" style="left:1205px;top:602px;width:39px;height:20px;background:#f7b5a5;"></div>
<div class="a" style="left:1244px;top:602px;width:1px;height:21px;background:#dcdcdc;"></div>
<div class="a" style="left:1324px;top:602px;width:1px;height:21px;background:#dcdcdc;"></div>
<div class="a" style="left:1325px;top:602px;width:49px;height:20px;background:#fffee0;"></div>
<div class="a" style="left:1374px;top:602px;width:1px;height:21px;background:#dcdcdc;"></div>
<div class="a" style="left:1375px;top:602px;width:74px;height:20px;background:#fffee0;"></div>
<div class="a" style="left:1449px;top:602px;width:1px;height:21px;background:#dcdcdc;"></div>
<div class="a" style="left:1450px;top:602px;width:74px;height:20px;background:#fffee0;"></div>
<div class="a" style="left:1524px;top:602px;width:1px;height:21px;background:#dcdcdc;"></div>
<div class="a" style="left:1525px;top:602px;width:73px;height:20px;background:#fffee0;"></div>
<div class="a" style="left:1598px;top:602px;width:1px;height:21px;background:#dcdcdc;"></div>
<div class="a" style="left:1694px;top:602px;width:1px;height:21px;background:#dcdcdc;"></div>
<div class="a" style="left:1695px;top:602px;width:55px;height:20px;background:#fffee0;"></div>
<div class="a" style="left:1750px;top:602px;width:1px;height:21px;background:#dcdcdc;"></div>
<div class="a" style="left:1796px;top:602px;width:1px;height:21px;background:#dcdcdc;"></div>
<div class="a" style="left:1797px;top:602px;width:69px;height:20px;background:#fffee0;"></div>
<div class="a" style="left:1866px;top:602px;width:1px;height:21px;background:#dcdcdc;"></div>
<div class="a" style="left:1912px;top:602px;width:1px;height:21px;background:#dcdcdc;"></div>
<div class="a" style="left:2012px;top:602px;width:1px;height:21px;background:#dcdcdc;"></div>
<div class="a" style="left:2086px;top:602px;width:1px;height:21px;background:#dcdcdc;"></div>
<div class="a" style="left:2087px;top:602px;width:54px;height:20px;background:#c0e39b;"></div>
<div class="a" style="left:2141px;top:602px;width:1px;height:21px;background:#dcdcdc;"></div>
<div class="a" style="left:2142px;top:602px;width:119px;height:20px;background:#f7b5a5;"></div>
<div class="a" style="left:2261px;top:602px;width:1px;height:21px;background:#dcdcdc;"></div>
<div class="a" style="left:2331px;top:602px;width:1px;height:21px;background:#dcdcdc;"></div>
<div class="a" style="left:2332px;top:602px;width:24px;height:20px;background:#fffee0;"></div>
<div class="a" style="left:2356px;top:602px;width:1px;height:21px;background:#dcdcdc;"></div>
<div class="a" style="left:30px;top:622px;width:2326px;height:1px;background:#dcdcdc;"></div>
<div class="t" style="left:558.00px;top:601.75px;font-size:12.270px;color:#000;text-decoration:underline;">1100017</div>
<div class="t" style="left:698.20px;top:601.75px;font-size:12.270px;color:#000;">*Stahlblech*</div>
<div class="t" style="left:907.60px;top:602.22px;font-size:10.900px;color:#000;">6000x80x10</div>
<div class="a" style="left:1138px;top:605px;width:13px;height:13px;background:#fff;box-shadow:inset 0 0 0 1px #333;"></div>
<div class="a" style="left:1178px;top:605px;width:13px;height:13px;background:#fff;box-shadow:inset 0 0 0 1px #333;"></div>
<svg class="a" style="left:1178px;top:605px" width="13" height="13" viewBox="0 0 13 13"><path d="M2.6 6.6 L5.2 9.2 L10.6 3.4" fill="none" stroke="#333" stroke-width="1.3"/></svg>
<div class="a" style="left:1218px;top:605px;width:13px;height:13px;background:#fff;box-shadow:inset 0 0 0 1px #333;"></div>
<svg class="a" style="left:1218px;top:605px" width="13" height="13" viewBox="0 0 13 13"><path d="M2.6 6.6 L5.2 9.2 L10.6 3.4" fill="none" stroke="#333" stroke-width="1.3"/></svg>
<div class="t" style="left:1273.74px;top:601.75px;font-size:12.270px;color:#000;">9.280,00</div>
<div class="t" style="left:1327.00px;top:601.75px;font-size:12.270px;color:#000;">mm</div>
<div class="t" style="left:1415.79px;top:601.75px;font-size:12.270px;color:#000;">0,000</div>
<div class="t" style="left:1469.65px;top:601.75px;font-size:12.270px;color:#000;">-9.280,00</div>
<div class="t" style="left:1697.30px;top:602.19px;font-size:11.000px;color:#000;transform:scaleX(0.905);transform-origin:0 0;">RM1001</div>
<div class="a" style="left:1767px;top:605px;width:13px;height:13px;background:#fff;box-shadow:inset 0 0 0 1px #333;"></div>
<svg class="a" style="left:1767px;top:605px" width="13" height="13" viewBox="0 0 13 13"><path d="M2.6 6.6 L5.2 9.2 L10.6 3.4" fill="none" stroke="#333" stroke-width="1.3"/></svg>
<div class="a" style="left:1883px;top:605px;width:13px;height:13px;background:#fff;box-shadow:inset 0 0 0 1px #333;"></div>
<svg class="a" style="left:2107px;top:606px" width="15" height="12" viewBox="0 0 15 12"><path d="M0.5 0.5 H11 L14.5 3.5 V11.5 H0.5Z" fill="#f8f8f8" stroke="#d8d8d8"/><text x="4.3" y="9.8" font-family="Liberation Sans" font-style="italic" font-size="10.5" fill="#a8a8a8">a</text></svg>
<div class="t" style="left:2304.62px;top:601.75px;font-size:12.270px;color:#000;">0,00</div>
<div class="a" style="left:30px;top:623px;width:2326px;height:20px;background:#efefef;"></div>
<div class="a" style="left:129px;top:623px;width:1px;height:21px;background:#dcdcdc;"></div>
<div class="a" style="left:174px;top:623px;width:1px;height:21px;background:#dcdcdc;"></div>
<div class="a" style="left:274px;top:623px;width:1px;height:21px;background:#dcdcdc;"></div>
<div class="a" style="left:385px;top:623px;width:1px;height:21px;background:#dcdcdc;"></div>
<div class="a" style="left:450px;top:623px;width:1px;height:21px;background:#dcdcdc;"></div>
<div class="a" style="left:515px;top:623px;width:1px;height:21px;background:#dcdcdc;"></div>
<div class="a" style="left:516px;top:623px;width:39px;height:20px;background:#fffee0;"></div>
<div class="a" style="left:555px;top:623px;width:1px;height:21px;background:#dcdcdc;"></div>
<div class="a" style="left:695px;top:623px;width:1px;height:21px;background:#dcdcdc;"></div>
<div class="a" style="left:905px;top:623px;width:1px;height:21px;background:#dcdcdc;"></div>
<div class="a" style="left:906px;top:623px;width:218px;height:20px;background:#fffee0;"></div>
<div class="a" style="left:1124px;top:623px;width:1px;height:21px;background:#dcdcdc;"></div>
<div class="a" style="left:1125px;top:623px;width:39px;height:20px;background:#fffee0;"></div>
<div class="a" style="left:1164px;top:623px;width:1px;height:21px;background:#dcdcdc;"></div>
<div class="a" style="left:1165px;top:623px;width:39px;height:20px;background:#fffee0;"></div>
<div class="a" style="left:1204px;top:623px;width:1px;height:21px;background:#dcdcdc;"></div>
<div class="a" style="left:1205px;top:623px;width:39px;height:20px;background:#fffee0;"></div>
<div class="a" style="left:1244px;top:623px;width:1px;height:21px;background:#dcdcdc;"></div>
<div class="a" style="left:1324px;top:623px;width:1px;height:21px;background:#dcdcdc;"></div>
<div class="a" style="left:1325px;top:623px;width:49px;height:20px;background:#fffee0;"></div>
<div class="a" style="left:1374px;top:623px;width:1px;height:21px;background:#dcdcdc;"></div>
<div class="a" style="left:1375px;top:623px;width:74px;height:20px;background:#fffee0;"></div>
<div class="a" style="left:1449px;top:623px;width:1px;height:21px;background:#dcdcdc;"></div>
<div class="a" style="left:1450px;top:623px;width:74px;height:20px;background:#fffee0;"></div>
<div class="a" style="left:1524px;top:623px;width:1px;height:21px;background:#dcdcdc;"></div>
<div class="a" style="left:1525px;top:623px;width:73px;height:20px;background:#fffee0;"></div>
<div class="a" style="left:1598px;top:623px;width:1px;height:21px;background:#dcdcdc;"></div>
<div class="a" style="left:1694px;top:623px;width:1px;height:21px;background:#dcdcdc;"></div>
<div class="a" style="left:1695px;top:623px;width:55px;height:20px;background:#fffee0;"></div>
<div class="a" style="left:1750px;top:623px;width:1px;height:21px;background:#dcdcdc;"></div>
<div class="a" style="left:1796px;top:623px;width:1px;height:21px;background:#dcdcdc;"></div>
<div class="a" style="left:1797px;top:623px;width:69px;height:20px;background:#fffee0;"></div>
<div class="a" style="left:1866px;top:623px;width:1px;height:21px;background:#dcdcdc;"></div>
<div class="a" style="left:1912px;top:623px;width:1px;height:21px;background:#dcdcdc;"></div>
<div class="a" style="left:2012px;top:623px;width:1px;height:21px;background:#dcdcdc;"></div>
<div class="a" style="left:2086px;top:623px;width:1px;height:21px;background:#dcdcdc;"></div>
<div class="a" style="left:2087px;top:623px;width:54px;height:20px;background:#c0e39b;"></div>
<div class="a" style="left:2141px;top:623px;width:1px;height:21px;background:#dcdcdc;"></div>
<div class="a" style="left:2261px;top:623px;width:1px;height:21px;background:#dcdcdc;"></div>
<div class="a" style="left:2331px;top:623px;width:1px;height:21px;background:#dcdcdc;"></div>
<div class="a" style="left:2332px;top:623px;width:24px;height:20px;background:#fffee0;"></div>
<div class="a" style="left:2356px;top:623px;width:1px;height:21px;background:#dcdcdc;"></div>
<div class="a" style="left:30px;top:643px;width:2326px;height:1px;background:#dcdcdc;"></div>
<div class="t" style="left:558.00px;top:622.75px;font-size:12.270px;color:#000;text-decoration:underline;">E.B.PKW.A-1168534-0...</div>
<div class="t" style="left:698.20px;top:622.75px;font-size:12.270px;color:#000;">*Platine Ansteuerung eine Sensorei...</div>
<div class="a" style="left:1138px;top:626px;width:13px;height:13px;background:#fff;box-shadow:inset 0 0 0 1px #333;"></div>
<div class="a" style="left:1178px;top:626px;width:13px;height:13px;background:#fff;box-shadow:inset 0 0 0 1px #333;"></div>
<div class="a" style="left:1218px;top:626px;width:13px;height:13px;background:#fff;box-shadow:inset 0 0 0 1px #333;"></div>
<div class="t" style="left:1283.97px;top:622.75px;font-size:12.270px;color:#000;">243,00</div>
<div class="t" style="left:1327.00px;top:622.75px;font-size:12.270px;color:#000;">Stk</div>
<div class="t" style="left:1408.97px;top:622.75px;font-size:12.270px;color:#000;">13,000</div>
<div class="t" style="left:1479.88px;top:622.75px;font-size:12.270px;color:#000;">-243,00</div>
<div class="t" style="left:1564.79px;top:622.75px;font-size:12.270px;color:#000;">20,00</div>
<div class="t" style="left:1601.50px;top:622.75px;font-size:12.270px;color:#000;">1168534</div>
<div class="t" style="left:1697.30px;top:623.19px;font-size:11.000px;color:#000;transform:scaleX(0.905);transform-origin:0 0;">KT1001</div>
<div class="a" style="left:1767px;top:626px;width:13px;height:13px;background:#fff;box-shadow:inset 0 0 0 1px #333;"></div>
<div class="a" style="left:1883px;top:626px;width:13px;height:13px;background:#fff;box-shadow:inset 0 0 0 1px #333;"></div>
<svg class="a" style="left:2107px;top:627px" width="15" height="12" viewBox="0 0 15 12"><path d="M0.5 0.5 H11 L14.5 3.5 V11.5 H0.5Z" fill="#f8f8f8" stroke="#d8d8d8"/><text x="4.3" y="9.8" font-family="Liberation Sans" font-style="italic" font-size="10.5" fill="#a8a8a8">a</text></svg>
<div class="t" style="left:2144.50px;top:622.75px;font-size:12.270px;color:#000;text-decoration:underline;">ELEKTR</div>
<div class="t" style="left:2290.97px;top:622.75px;font-size:12.270px;color:#000;">149,00</div>
<div class="a" style="left:30px;top:644px;width:2326px;height:20px;background:#ffffff;"></div>
<div class="a" style="left:129px;top:644px;width:1px;height:21px;background:#dcdcdc;"></div>
<div class="a" style="left:174px;top:644px;width:1px;height:21px;background:#dcdcdc;"></div>
<div class="a" style="left:274px;top:644px;width:1px;height:21px;background:#dcdcdc;"></div>
<div class="a" style="left:385px;top:644px;width:1px;height:21px;background:#dcdcdc;"></div>
<div class="a" style="left:450px;top:644px;width:1px;height:21px;background:#dcdcdc;"></div>
<div class="a" style="left:515px;top:644px;width:1px;height:21px;background:#dcdcdc;"></div>
<div class="a" style="left:516px;top:644px;width:39px;height:20px;background:#fffee0;"></div>
<div class="a" style="left:555px;top:644px;width:1px;height:21px;background:#dcdcdc;"></div>
<div class="a" style="left:695px;top:644px;width:1px;height:21px;background:#dcdcdc;"></div>
<div class="a" style="left:905px;top:644px;width:1px;height:21px;background:#dcdcdc;"></div>
<div class="a" style="left:906px;top:644px;width:218px;height:20px;background:#fffee0;"></div>
<div class="a" style="left:1124px;top:644px;width:1px;height:21px;background:#dcdcdc;"></div>
<div class="a" style="left:1125px;top:644px;width:39px;height:20px;background:#fffee0;"></div>
<div class="a" style="left:1164px;top:644px;width:1px;height:21px;background:#dcdcdc;"></div>
<div class="a" style="left:1165px;top:644px;width:39px;height:20px;background:#fffee0;"></div>
<div class="a" style="left:1204px;top:644px;width:1px;height:21px;background:#dcdcdc;"></div>
<div class="a" style="left:1205px;top:644px;width:39px;height:20px;background:#fffee0;"></div>
<div class="a" style="left:1244px;top:644px;width:1px;height:21px;background:#dcdcdc;"></div>
<div class="a" style="left:1324px;top:644px;width:1px;height:21px;background:#dcdcdc;"></div>
<div class="a" style="left:1325px;top:644px;width:49px;height:20px;background:#fffee0;"></div>
<div class="a" style="left:1374px;top:644px;width:1px;height:21px;background:#dcdcdc;"></div>
<div class="a" style="left:1375px;top:644px;width:74px;height:20px;background:#fffee0;"></div>
<div class="a" style="left:1449px;top:644px;width:1px;height:21px;background:#dcdcdc;"></div>
<div class="a" style="left:1450px;top:644px;width:74px;height:20px;background:#fffee0;"></div>
<div class="a" style="left:1524px;top:644px;width:1px;height:21px;background:#dcdcdc;"></div>
<div class="a" style="left:1525px;top:644px;width:73px;height:20px;background:#fffee0;"></div>
<div class="a" style="left:1598px;top:644px;width:1px;height:21px;background:#dcdcdc;"></div>
<div class="a" style="left:1694px;top:644px;width:1px;height:21px;background:#dcdcdc;"></div>
<div class="a" style="left:1695px;top:644px;width:55px;height:20px;background:#fffee0;"></div>
<div class="a" style="left:1750px;top:644px;width:1px;height:21px;background:#dcdcdc;"></div>
<div class="a" style="left:1796px;top:644px;width:1px;height:21px;background:#dcdcdc;"></div>
<div class="a" style="left:1797px;top:644px;width:69px;height:20px;background:#fffee0;"></div>
<div class="a" style="left:1866px;top:644px;width:1px;height:21px;background:#dcdcdc;"></div>
<div class="a" style="left:1912px;top:644px;width:1px;height:21px;background:#dcdcdc;"></div>
<div class="a" style="left:2012px;top:644px;width:1px;height:21px;background:#dcdcdc;"></div>
<div class="a" style="left:2086px;top:644px;width:1px;height:21px;background:#dcdcdc;"></div>
<div class="a" style="left:2087px;top:644px;width:54px;height:20px;background:#c0e39b;"></div>
<div class="a" style="left:2141px;top:644px;width:1px;height:21px;background:#dcdcdc;"></div>
<div class="a" style="left:2261px;top:644px;width:1px;height:21px;background:#dcdcdc;"></div>
<div class="a" style="left:2331px;top:644px;width:1px;height:21px;background:#dcdcdc;"></div>
<div class="a" style="left:2332px;top:644px;width:24px;height:20px;background:#fffee0;"></div>
<div class="a" style="left:2356px;top:644px;width:1px;height:21px;background:#dcdcdc;"></div>
<div class="a" style="left:30px;top:664px;width:2326px;height:1px;background:#dcdcdc;"></div>
<div class="t" style="left:558.00px;top:643.75px;font-size:12.270px;color:#000;text-decoration:underline;">000051.1</div>
<div class="t" style="left:698.20px;top:643.75px;font-size:12.270px;color:#000;">*SCHEIBE A2.2 DIN 125 GAL:ZN*</div>
<div class="a" style="left:1138px;top:647px;width:13px;height:13px;background:#fff;box-shadow:inset 0 0 0 1px #333;"></div>
<div class="a" style="left:1178px;top:647px;width:13px;height:13px;background:#fff;box-shadow:inset 0 0 0 1px #333;"></div>
<div class="a" style="left:1218px;top:647px;width:13px;height:13px;background:#fff;box-shadow:inset 0 0 0 1px #333;"></div>
<div class="t" style="left:1290.79px;top:643.75px;font-size:12.270px;color:#000;">10,00</div>
<div class="t" style="left:1327.00px;top:643.75px;font-size:12.270px;color:#000;">Stk</div>
<div class="t" style="left:1415.79px;top:643.75px;font-size:12.270px;color:#000;">0,000</div>
<div class="t" style="left:1493.53px;top:643.75px;font-size:12.270px;color:#000;">-2,00</div>
<div class="t" style="left:1697.30px;top:644.19px;font-size:11.000px;color:#000;transform:scaleX(0.905);transform-origin:0 0;">KT1001</div>
<div class="a" style="left:1767px;top:647px;width:13px;height:13px;background:#fff;box-shadow:inset 0 0 0 1px #333;"></div>
<div class="a" style="left:1883px;top:647px;width:13px;height:13px;background:#fff;box-shadow:inset 0 0 0 1px #333;"></div>
<svg class="a" style="left:2107px;top:648px" width="15" height="12" viewBox="0 0 15 12"><path d="M0.5 0.5 H11 L14.5 3.5 V11.5 H0.5Z" fill="#f8f8f8" stroke="#d8d8d8"/><text x="4.3" y="9.8" font-family="Liberation Sans" font-style="italic" font-size="10.5" fill="#a8a8a8">a</text></svg>
<div class="t" style="left:2144.50px;top:643.75px;font-size:12.270px;color:#000;text-decoration:underline;">STA</div>
<div class="t" style="left:2297.79px;top:643.75px;font-size:12.270px;color:#000;">40,00</div>
<div class="a" style="left:30px;top:665px;width:2326px;height:20px;background:#efefef;"></div>
<div class="a" style="left:129px;top:665px;width:1px;height:21px;background:#dcdcdc;"></div>
<div class="a" style="left:174px;top:665px;width:1px;height:21px;background:#dcdcdc;"></div>
<div class="a" style="left:274px;top:665px;width:1px;height:21px;background:#dcdcdc;"></div>
<div class="a" style="left:385px;top:665px;width:1px;height:21px;background:#dcdcdc;"></div>
<div class="a" style="left:450px;top:665px;width:1px;height:21px;background:#dcdcdc;"></div>
<div class="a" style="left:515px;top:665px;width:1px;height:21px;background:#dcdcdc;"></div>
<div class="a" style="left:516px;top:665px;width:39px;height:20px;background:#fffee0;"></div>
<div class="a" style="left:555px;top:665px;width:1px;height:21px;background:#dcdcdc;"></div>
<div class="a" style="left:695px;top:665px;width:1px;height:21px;background:#dcdcdc;"></div>
<div class="a" style="left:905px;top:665px;width:1px;height:21px;background:#dcdcdc;"></div>
<div class="a" style="left:906px;top:665px;width:218px;height:20px;background:#fffee0;"></div>
<div class="a" style="left:1124px;top:665px;width:1px;height:21px;background:#dcdcdc;"></div>
<div class="a" style="left:1125px;top:665px;width:39px;height:20px;background:#f7b5a5;"></div>
<div class="a" style="left:1164px;top:665px;width:1px;height:21px;background:#dcdcdc;"></div>
<div class="a" style="left:1165px;top:665px;width:39px;height:20px;background:#f7b5a5;"></div>
<div class="a" style="left:1204px;top:665px;width:1px;height:21px;background:#dcdcdc;"></div>
<div class="a" style="left:1205px;top:665px;width:39px;height:20px;background:#f7b5a5;"></div>
<div class="a" style="left:1244px;top:665px;width:1px;height:21px;background:#dcdcdc;"></div>
<div class="a" style="left:1324px;top:665px;width:1px;height:21px;background:#dcdcdc;"></div>
<div class="a" style="left:1325px;top:665px;width:49px;height:20px;background:#fffee0;"></div>
<div class="a" style="left:1374px;top:665px;width:1px;height:21px;background:#dcdcdc;"></div>
<div class="a" style="left:1375px;top:665px;width:74px;height:20px;background:#fffee0;"></div>
<div class="a" style="left:1449px;top:665px;width:1px;height:21px;background:#dcdcdc;"></div>
<div class="a" style="left:1450px;top:665px;width:74px;height:20px;background:#fffee0;"></div>
<div class="a" style="left:1524px;top:665px;width:1px;height:21px;background:#dcdcdc;"></div>
<div class="a" style="left:1525px;top:665px;width:73px;height:20px;background:#fffee0;"></div>
<div class="a" style="left:1598px;top:665px;width:1px;height:21px;background:#dcdcdc;"></div>
<div class="a" style="left:1694px;top:665px;width:1px;height:21px;background:#dcdcdc;"></div>
<div class="a" style="left:1695px;top:665px;width:55px;height:20px;background:#fffee0;"></div>
<div class="a" style="left:1750px;top:665px;width:1px;height:21px;background:#dcdcdc;"></div>
<div class="a" style="left:1796px;top:665px;width:1px;height:21px;background:#dcdcdc;"></div>
<div class="a" style="left:1797px;top:665px;width:69px;height:20px;background:#fffee0;"></div>
<div class="a" style="left:1866px;top:665px;width:1px;height:21px;background:#dcdcdc;"></div>
<div class="a" style="left:1912px;top:665px;width:1px;height:21px;background:#dcdcdc;"></div>
<div class="a" style="left:2012px;top:665px;width:1px;height:21px;background:#dcdcdc;"></div>
<div class="a" style="left:2086px;top:665px;width:1px;height:21px;background:#dcdcdc;"></div>
<div class="a" style="left:2087px;top:665px;width:54px;height:20px;background:#c0e39b;"></div>
<div class="a" style="left:2141px;top:665px;width:1px;height:21px;background:#dcdcdc;"></div>
<div class="a" style="left:2261px;top:665px;width:1px;height:21px;background:#dcdcdc;"></div>
<div class="a" style="left:2331px;top:665px;width:1px;height:21px;background:#dcdcdc;"></div>
<div class="a" style="left:2332px;top:665px;width:24px;height:20px;background:#fffee0;"></div>
<div class="a" style="left:2356px;top:665px;width:1px;height:21px;background:#dcdcdc;"></div>
<div class="a" style="left:30px;top:685px;width:2326px;height:1px;background:#dcdcdc;"></div>
<div class="t" style="left:558.00px;top:664.75px;font-size:12.270px;color:#000;text-decoration:underline;">1100014</div>
<div class="t" style="left:698.20px;top:664.75px;font-size:12.270px;color:#000;">*Stahl Welle DN40*</div>
<div class="a" style="left:1138px;top:668px;width:13px;height:13px;background:#fff;box-shadow:inset 0 0 0 1px #333;"></div>
<svg class="a" style="left:1138px;top:668px" width="13" height="13" viewBox="0 0 13 13"><path d="M2.6 6.6 L5.2 9.2 L10.6 3.4" fill="none" stroke="#333" stroke-width="1.3"/></svg>
<div class="a" style="left:1178px;top:668px;width:13px;height:13px;background:#fff;box-shadow:inset 0 0 0 1px #333;"></div>
<svg class="a" style="left:1178px;top:668px" width="13" height="13" viewBox="0 0 13 13"><path d="M2.6 6.6 L5.2 9.2 L10.6 3.4" fill="none" stroke="#333" stroke-width="1.3"/></svg>
<div class="a" style="left:1218px;top:668px;width:13px;height:13px;background:#fff;box-shadow:inset 0 0 0 1px #333;"></div>
<svg class="a" style="left:1218px;top:668px" width="13" height="13" viewBox="0 0 13 13"><path d="M2.6 6.6 L5.2 9.2 L10.6 3.4" fill="none" stroke="#333" stroke-width="1.3"/></svg>
<div class="t" style="left:1290.79px;top:664.75px;font-size:12.270px;color:#000;">10,00</div>
<div class="t" style="left:1327.00px;top:664.75px;font-size:12.270px;color:#000;">Stk</div>
<div class="t" style="left:1403.06px;top:664.75px;font-size:12.270px;color:#000;">110,000</div>
<div class="t" style="left:1486.71px;top:664.75px;font-size:12.270px;color:#000;">-10,00</div>
<div class="t" style="left:1697.30px;top:665.19px;font-size:11.000px;color:#000;transform:scaleX(0.905);transform-origin:0 0;">PR1001</div>
<div class="a" style="left:1767px;top:668px;width:13px;height:13px;background:#fff;box-shadow:inset 0 0 0 1px #333;"></div>
<div class="a" style="left:1883px;top:668px;width:13px;height:13px;background:#fff;box-shadow:inset 0 0 0 1px #333;"></div>
<svg class="a" style="left:2107px;top:669px" width="15" height="12" viewBox="0 0 15 12"><path d="M0.5 0.5 H11 L14.5 3.5 V11.5 H0.5Z" fill="#f8f8f8" stroke="#d8d8d8"/><text x="4.3" y="9.8" font-family="Liberation Sans" font-style="italic" font-size="10.5" fill="#a8a8a8">a</text></svg>
<div class="t" style="left:2144.50px;top:664.75px;font-size:12.270px;color:#000;text-decoration:underline;">STA</div>
<div class="t" style="left:2297.79px;top:664.75px;font-size:12.270px;color:#000;">12,00</div>
<div class="a" style="left:30px;top:686px;width:2326px;height:20px;background:#ffffff;"></div>
<div class="a" style="left:129px;top:686px;width:1px;height:21px;background:#dcdcdc;"></div>
<div class="a" style="left:174px;top:686px;width:1px;height:21px;background:#dcdcdc;"></div>
<div class="a" style="left:274px;top:686px;width:1px;height:21px;background:#dcdcdc;"></div>
<div class="a" style="left:385px;top:686px;width:1px;height:21px;background:#dcdcdc;"></div>
<div class="a" style="left:450px;top:686px;width:1px;height:21px;background:#dcdcdc;"></div>
<div class="a" style="left:515px;top:686px;width:1px;height:21px;background:#dcdcdc;"></div>
<div class="a" style="left:516px;top:686px;width:39px;height:20px;background:#fffee0;"></div>
<div class="a" style="left:555px;top:686px;width:1px;height:21px;background:#dcdcdc;"></div>
<div class="a" style="left:695px;top:686px;width:1px;height:21px;background:#dcdcdc;"></div>
<div class="a" style="left:905px;top:686px;width:1px;height:21px;background:#dcdcdc;"></div>
<div class="a" style="left:906px;top:686px;width:218px;height:20px;background:#fffee0;"></div>
<div class="a" style="left:1124px;top:686px;width:1px;height:21px;background:#dcdcdc;"></div>
<div class="a" style="left:1125px;top:686px;width:39px;height:20px;background:#fffee0;"></div>
<div class="a" style="left:1164px;top:686px;width:1px;height:21px;background:#dcdcdc;"></div>
<div class="a" style="left:1165px;top:686px;width:39px;height:20px;background:#fffee0;"></div>
<div class="a" style="left:1204px;top:686px;width:1px;height:21px;background:#dcdcdc;"></div>
<div class="a" style="left:1205px;top:686px;width:39px;height:20px;background:#fffee0;"></div>
<div class="a" style="left:1244px;top:686px;width:1px;height:21px;background:#dcdcdc;"></div>
<div class="a" style="left:1324px;top:686px;width:1px;height:21px;background:#dcdcdc;"></div>
<div class="a" style="left:1325px;top:686px;width:49px;height:20px;background:#fffee0;"></div>
<div class="a" style="left:1374px;top:686px;width:1px;height:21px;background:#dcdcdc;"></div>
<div class="a" style="left:1375px;top:686px;width:74px;height:20px;background:#fffee0;"></div>
<div class="a" style="left:1449px;top:686px;width:1px;height:21px;background:#dcdcdc;"></div>
<div class="a" style="left:1450px;top:686px;width:74px;height:20px;background:#fffee0;"></div>
<div class="a" style="left:1524px;top:686px;width:1px;height:21px;background:#dcdcdc;"></div>
<div class="a" style="left:1525px;top:686px;width:73px;height:20px;background:#fffee0;"></div>
<div class="a" style="left:1598px;top:686px;width:1px;height:21px;background:#dcdcdc;"></div>
<div class="a" style="left:1694px;top:686px;width:1px;height:21px;background:#dcdcdc;"></div>
<div class="a" style="left:1695px;top:686px;width:55px;height:20px;background:#fffee0;"></div>
<div class="a" style="left:1750px;top:686px;width:1px;height:21px;background:#dcdcdc;"></div>
<div class="a" style="left:1796px;top:686px;width:1px;height:21px;background:#dcdcdc;"></div>
<div class="a" style="left:1797px;top:686px;width:69px;height:20px;background:#fffee0;"></div>
<div class="a" style="left:1866px;top:686px;width:1px;height:21px;background:#dcdcdc;"></div>
<div class="a" style="left:1912px;top:686px;width:1px;height:21px;background:#dcdcdc;"></div>
<div class="a" style="left:2012px;top:686px;width:1px;height:21px;background:#dcdcdc;"></div>
<div class="a" style="left:2086px;top:686px;width:1px;height:21px;background:#dcdcdc;"></div>
<div class="a" style="left:2087px;top:686px;width:54px;height:20px;background:#c0e39b;"></div>
<div class="a" style="left:2141px;top:686px;width:1px;height:21px;background:#dcdcdc;"></div>
<div class="a" style="left:2261px;top:686px;width:1px;height:21px;background:#dcdcdc;"></div>
<div class="a" style="left:2331px;top:686px;width:1px;height:21px;background:#dcdcdc;"></div>
<div class="a" style="left:2332px;top:686px;width:24px;height:20px;background:#fffee0;"></div>
<div class="a" style="left:2356px;top:686px;width:1px;height:21px;background:#dcdcdc;"></div>
<div class="a" style="left:30px;top:706px;width:2326px;height:1px;background:#dcdcdc;"></div>
<div class="t" style="left:558.00px;top:685.75px;font-size:12.270px;color:#000;text-decoration:underline;">D.W.13.1100003</div>
<div class="t" style="left:698.20px;top:685.75px;font-size:12.270px;color:#000;">*Dichtung-Einsatz 13 mm*</div>
<div class="a" style="left:1138px;top:689px;width:13px;height:13px;background:#fff;box-shadow:inset 0 0 0 1px #333;"></div>
<div class="a" style="left:1178px;top:689px;width:13px;height:13px;background:#fff;box-shadow:inset 0 0 0 1px #333;"></div>
<div class="a" style="left:1218px;top:689px;width:13px;height:13px;background:#fff;box-shadow:inset 0 0 0 1px #333;"></div>
<div class="t" style="left:1283.97px;top:685.75px;font-size:12.270px;color:#000;">400,00</div>
<div class="t" style="left:1327.00px;top:685.75px;font-size:12.270px;color:#000;">Stk</div>
<div class="t" style="left:1415.79px;top:685.75px;font-size:12.270px;color:#000;">0,000</div>
<div class="t" style="left:1479.88px;top:685.75px;font-size:12.270px;color:#000;">-660,00</div>
<div class="t" style="left:1697.30px;top:686.19px;font-size:11.000px;color:#000;transform:scaleX(0.905);transform-origin:0 0;">KT1001</div>
<div class="a" style="left:1767px;top:689px;width:13px;height:13px;background:#fff;box-shadow:inset 0 0 0 1px #333;"></div>
<div class="a" style="left:1883px;top:689px;width:13px;height:13px;background:#fff;box-shadow:inset 0 0 0 1px #333;"></div>
<svg class="a" style="left:2098px;top:690px" width="15" height="12" viewBox="0 0 15 12"><path d="M0.5 0.5 H11 L14.5 3.5 V11.5 H0.5Z" fill="#f8f8f8" stroke="#d8d8d8"/><text x="4.3" y="9.8" font-family="Liberation Sans" font-style="italic" font-size="10.5" fill="#a8a8a8">a</text></svg>
<div class="t" style="left:2144.50px;top:685.75px;font-size:12.270px;color:#000;text-decoration:underline;">STAHL</div>
<div class="t" style="left:2304.62px;top:685.75px;font-size:12.270px;color:#000;">7,00</div>
<div class="a" style="left:30px;top:707px;width:2326px;height:20px;background:#efefef;"></div>
<div class="a" style="left:129px;top:707px;width:1px;height:21px;background:#dcdcdc;"></div>
<div class="a" style="left:174px;top:707px;width:1px;height:21px;background:#dcdcdc;"></div>
<div class="a" style="left:274px;top:707px;width:1px;height:21px;background:#dcdcdc;"></div>
<div class="a" style="left:385px;top:707px;width:1px;height:21px;background:#dcdcdc;"></div>
<div class="a" style="left:450px;top:707px;width:1px;height:21px;background:#dcdcdc;"></div>
<div class="a" style="left:515px;top:707px;width:1px;height:21px;background:#dcdcdc;"></div>
<div class="a" style="left:516px;top:707px;width:39px;height:20px;background:#fffee0;"></div>
<div class="a" style="left:555px;top:707px;width:1px;height:21px;background:#dcdcdc;"></div>
<div class="a" style="left:695px;top:707px;width:1px;height:21px;background:#dcdcdc;"></div>
<div class="a" style="left:905px;top:707px;width:1px;height:21px;background:#dcdcdc;"></div>
<div class="a" style="left:906px;top:707px;width:218px;height:20px;background:#fffee0;"></div>
<div class="a" style="left:1124px;top:707px;width:1px;height:21px;background:#dcdcdc;"></div>
<div class="a" style="left:1125px;top:707px;width:39px;height:20px;background:#f7b5a5;"></div>
<div class="a" style="left:1164px;top:707px;width:1px;height:21px;background:#dcdcdc;"></div>
<div class="a" style="left:1165px;top:707px;width:39px;height:20px;background:#fffee0;"></div>
<div class="a" style="left:1204px;top:707px;width:1px;height:21px;background:#dcdcdc;"></div>
<div class="a" style="left:1205px;top:707px;width:39px;height:20px;background:#fffee0;"></div>
<div class="a" style="left:1244px;top:707px;width:1px;height:21px;background:#dcdcdc;"></div>
<div class="a" style="left:1324px;top:707px;width:1px;height:21px;background:#dcdcdc;"></div>
<div class="a" style="left:1325px;top:707px;width:49px;height:20px;background:#fffee0;"></div>
<div class="a" style="left:1374px;top:707px;width:1px;height:21px;background:#dcdcdc;"></div>
<div class="a" style="left:1375px;top:707px;width:74px;height:20px;background:#fffee0;"></div>
<div class="a" style="left:1449px;top:707px;width:1px;height:21px;background:#dcdcdc;"></div>
<div class="a" style="left:1450px;top:707px;width:74px;height:20px;background:#fffee0;"></div>
<div class="a" style="left:1524px;top:707px;width:1px;height:21px;background:#dcdcdc;"></div>
<div class="a" style="left:1525px;top:707px;width:73px;height:20px;background:#fffee0;"></div>
<div class="a" style="left:1598px;top:707px;width:1px;height:21px;background:#dcdcdc;"></div>
<div class="a" style="left:1694px;top:707px;width:1px;height:21px;background:#dcdcdc;"></div>
<div class="a" style="left:1695px;top:707px;width:55px;height:20px;background:#fffee0;"></div>
<div class="a" style="left:1750px;top:707px;width:1px;height:21px;background:#dcdcdc;"></div>
<div class="a" style="left:1796px;top:707px;width:1px;height:21px;background:#dcdcdc;"></div>
<div class="a" style="left:1797px;top:707px;width:69px;height:20px;background:#fffee0;"></div>
<div class="a" style="left:1866px;top:707px;width:1px;height:21px;background:#dcdcdc;"></div>
<div class="a" style="left:1912px;top:707px;width:1px;height:21px;background:#dcdcdc;"></div>
<div class="a" style="left:2012px;top:707px;width:1px;height:21px;background:#dcdcdc;"></div>
<div class="a" style="left:2086px;top:707px;width:1px;height:21px;background:#dcdcdc;"></div>
<div class="a" style="left:2087px;top:707px;width:54px;height:20px;background:#c0e39b;"></div>
<div class="a" style="left:2141px;top:707px;width:1px;height:21px;background:#dcdcdc;"></div>
<div class="a" style="left:2261px;top:707px;width:1px;height:21px;background:#dcdcdc;"></div>
<div class="a" style="left:2331px;top:707px;width:1px;height:21px;background:#dcdcdc;"></div>
<div class="a" style="left:2332px;top:707px;width:24px;height:20px;background:#fffee0;"></div>
<div class="a" style="left:2356px;top:707px;width:1px;height:21px;background:#dcdcdc;"></div>
<div class="a" style="left:30px;top:727px;width:2326px;height:1px;background:#dcdcdc;"></div>
<div class="t" style="left:558.00px;top:706.75px;font-size:12.270px;color:#000;text-decoration:underline;">90020</div>
<div class="t" style="left:698.20px;top:706.75px;font-size:12.270px;color:#000;">*Pratzenauflage LP 106x108x10*</div>
<div class="a" style="left:1138px;top:710px;width:13px;height:13px;background:#fff;box-shadow:inset 0 0 0 1px #333;"></div>
<svg class="a" style="left:1138px;top:710px" width="13" height="13" viewBox="0 0 13 13"><path d="M2.6 6.6 L5.2 9.2 L10.6 3.4" fill="none" stroke="#333" stroke-width="1.3"/></svg>
<div class="a" style="left:1178px;top:710px;width:13px;height:13px;background:#fff;box-shadow:inset 0 0 0 1px #333;"></div>
<div class="a" style="left:1218px;top:710px;width:13px;height:13px;background:#fff;box-shadow:inset 0 0 0 1px #333;"></div>
<div class="t" style="left:1283.97px;top:706.75px;font-size:12.270px;color:#000;">199,00</div>
<div class="t" style="left:1327.00px;top:706.75px;font-size:12.270px;color:#000;">Stk</div>
<div class="t" style="left:1415.79px;top:706.75px;font-size:12.270px;color:#000;">0,000</div>
<div class="t" style="left:1497.62px;top:706.75px;font-size:12.270px;color:#000;">0,00</div>
<div class="t" style="left:1697.30px;top:707.19px;font-size:11.000px;color:#000;transform:scaleX(0.905);transform-origin:0 0;">PR1001</div>
<div class="a" style="left:1767px;top:710px;width:13px;height:13px;background:#fff;box-shadow:inset 0 0 0 1px #333;"></div>
<div class="a" style="left:1883px;top:710px;width:13px;height:13px;background:#fff;box-shadow:inset 0 0 0 1px #333;"></div>
<svg class="a" style="left:2107px;top:711px" width="15" height="12" viewBox="0 0 15 12"><path d="M0.5 0.5 H11 L14.5 3.5 V11.5 H0.5Z" fill="#f8f8f8" stroke="#d8d8d8"/><text x="4.3" y="9.8" font-family="Liberation Sans" font-style="italic" font-size="10.5" fill="#a8a8a8">a</text></svg>
<div class="t" style="left:2144.50px;top:706.75px;font-size:12.270px;color:#000;text-decoration:underline;">STAHL</div>
<div class="t" style="left:2304.62px;top:706.75px;font-size:12.270px;color:#000;">2,00</div>
<div class="a" style="left:30px;top:728px;width:2326px;height:20px;background:#ffffff;"></div>
<div class="a" style="left:129px;top:728px;width:1px;height:21px;background:#dcdcdc;"></div>
<div class="a" style="left:174px;top:728px;width:1px;height:21px;background:#dcdcdc;"></div>
<div class="a" style="left:274px;top:728px;width:1px;height:21px;background:#dcdcdc;"></div>
<div class="a" style="left:385px;top:728px;width:1px;height:21px;background:#dcdcdc;"></div>
<div class="a" style="left:450px;top:728px;width:1px;height:21px;background:#dcdcdc;"></div>
<div class="a" style="left:515px;top:728px;width:1px;height:21px;background:#dcdcdc;"></div>
<div class="a" style="left:516px;top:728px;width:39px;height:20px;background:#fffee0;"></div>
<div class="a" style="left:555px;top:728px;width:1px;height:21px;background:#dcdcdc;"></div>
<div class="a" style="left:695px;top:728px;width:1px;height:21px;background:#dcdcdc;"></div>
<div class="a" style="left:905px;top:728px;width:1px;height:21px;background:#dcdcdc;"></div>
<div class="a" style="left:906px;top:728px;width:218px;height:20px;background:#fffee0;"></div>
<div class="a" style="left:1124px;top:728px;width:1px;height:21px;background:#dcdcdc;"></div>
<div class="a" style="left:1125px;top:728px;width:39px;height:20px;background:#fffee0;"></div>
<div class="a" style="left:1164px;top:728px;width:1px;height:21px;background:#dcdcdc;"></div>
<div class="a" style="left:1165px;top:728px;width:39px;height:20px;background:#fffee0;"></div>
<div class="a" style="left:1204px;top:728px;width:1px;height:21px;background:#dcdcdc;"></div>
<div class="a" style="left:1205px;top:728px;width:39px;height:20px;background:#fffee0;"></div>
<div class="a" style="left:1244px;top:728px;width:1px;height:21px;background:#dcdcdc;"></div>
<div class="a" style="left:1324px;top:728px;width:1px;height:21px;background:#dcdcdc;"></div>
<div class="a" style="left:1325px;top:728px;width:49px;height:20px;background:#fffee0;"></div>
<div class="a" style="left:1374px;top:728px;width:1px;height:21px;background:#dcdcdc;"></div>
<div class="a" style="left:1375px;top:728px;width:74px;height:20px;background:#fffee0;"></div>
<div class="a" style="left:1449px;top:728px;width:1px;height:21px;background:#dcdcdc;"></div>
<div class="a" style="left:1450px;top:728px;width:74px;height:20px;background:#fffee0;"></div>
<div class="a" style="left:1524px;top:728px;width:1px;height:21px;background:#dcdcdc;"></div>
<div class="a" style="left:1525px;top:728px;width:73px;height:20px;background:#fffee0;"></div>
<div class="a" style="left:1598px;top:728px;width:1px;height:21px;background:#dcdcdc;"></div>
<div class="a" style="left:1694px;top:728px;width:1px;height:21px;background:#dcdcdc;"></div>
<div class="a" style="left:1695px;top:728px;width:55px;height:20px;background:#fffee0;"></div>
<div class="a" style="left:1750px;top:728px;width:1px;height:21px;background:#dcdcdc;"></div>
<div class="a" style="left:1796px;top:728px;width:1px;height:21px;background:#dcdcdc;"></div>
<div class="a" style="left:1797px;top:728px;width:69px;height:20px;background:#fffee0;"></div>
<div class="a" style="left:1866px;top:728px;width:1px;height:21px;background:#dcdcdc;"></div>
<div class="a" style="left:1912px;top:728px;width:1px;height:21px;background:#dcdcdc;"></div>
<div class="a" style="left:2012px;top:728px;width:1px;height:21px;background:#dcdcdc;"></div>
<div class="a" style="left:2086px;top:728px;width:1px;height:21px;background:#dcdcdc;"></div>
<div class="a" style="left:2087px;top:728px;width:54px;height:20px;background:#c0e39b;"></div>
<div class="a" style="left:2141px;top:728px;width:1px;height:21px;background:#dcdcdc;"></div>
<div class="a" style="left:2261px;top:728px;width:1px;height:21px;background:#dcdcdc;"></div>
<div class="a" style="left:2331px;top:728px;width:1px;height:21px;background:#dcdcdc;"></div>
<div class="a" style="left:2332px;top:728px;width:24px;height:20px;background:#fffee0;"></div>
<div class="a" style="left:2356px;top:728px;width:1px;height:21px;background:#dcdcdc;"></div>
<div class="a" style="left:30px;top:748px;width:2326px;height:1px;background:#dcdcdc;"></div>
<div class="t" style="left:558.00px;top:727.75px;font-size:12.270px;color:#000;text-decoration:underline;">D.W.13.1100002</div>
<div class="t" style="left:698.20px;top:727.75px;font-size:12.270px;color:#000;">*Dichtung 13 mm*</div>
<div class="a" style="left:1138px;top:731px;width:13px;height:13px;background:#fff;box-shadow:inset 0 0 0 1px #333;"></div>
<div class="a" style="left:1178px;top:731px;width:13px;height:13px;background:#fff;box-shadow:inset 0 0 0 1px #333;"></div>
<div class="a" style="left:1218px;top:731px;width:13px;height:13px;background:#fff;box-shadow:inset 0 0 0 1px #333;"></div>
<div class="t" style="left:1283.97px;top:727.75px;font-size:12.270px;color:#000;">432,00</div>
<div class="t" style="left:1327.00px;top:727.75px;font-size:12.270px;color:#000;">Stk</div>
<div class="t" style="left:1415.79px;top:727.75px;font-size:12.270px;color:#000;">0,000</div>
<div class="t" style="left:1479.88px;top:727.75px;font-size:12.270px;color:#000;">-652,00</div>
<div class="t" style="left:1697.30px;top:728.19px;font-size:11.000px;color:#000;transform:scaleX(0.905);transform-origin:0 0;">KT1001</div>
<div class="a" style="left:1767px;top:731px;width:13px;height:13px;background:#fff;box-shadow:inset 0 0 0 1px #333;"></div>
<div class="a" style="left:1883px;top:731px;width:13px;height:13px;background:#fff;box-shadow:inset 0 0 0 1px #333;"></div>
<svg class="a" style="left:2107px;top:732px" width="15" height="12" viewBox="0 0 15 12"><path d="M0.5 0.5 H11 L14.5 3.5 V11.5 H0.5Z" fill="#f8f8f8" stroke="#d8d8d8"/><text x="4.3" y="9.8" font-family="Liberation Sans" font-style="italic" font-size="10.5" fill="#a8a8a8">a</text></svg>
<div class="t" style="left:2144.50px;top:727.75px;font-size:12.270px;color:#000;text-decoration:underline;">STAHL</div>
<div class="t" style="left:2304.62px;top:727.75px;font-size:12.270px;color:#000;">5,00</div>
<div class="a" style="left:30px;top:749px;width:2326px;height:20px;background:#efefef;"></div>
<div class="a" style="left:129px;top:749px;width:1px;height:21px;background:#dcdcdc;"></div>
<div class="a" style="left:174px;top:749px;width:1px;height:21px;background:#dcdcdc;"></div>
<div class="a" style="left:274px;top:749px;width:1px;height:21px;background:#dcdcdc;"></div>
<div class="a" style="left:385px;top:749px;width:1px;height:21px;background:#dcdcdc;"></div>
<div class="a" style="left:450px;top:749px;width:1px;height:21px;background:#dcdcdc;"></div>
<div class="a" style="left:515px;top:749px;width:1px;height:21px;background:#dcdcdc;"></div>
<div class="a" style="left:516px;top:749px;width:39px;height:20px;background:#fffee0;"></div>
<div class="a" style="left:555px;top:749px;width:1px;height:21px;background:#dcdcdc;"></div>
<div class="a" style="left:695px;top:749px;width:1px;height:21px;background:#dcdcdc;"></div>
<div class="a" style="left:905px;top:749px;width:1px;height:21px;background:#dcdcdc;"></div>
<div class="a" style="left:906px;top:749px;width:218px;height:20px;background:#fffee0;"></div>
<div class="a" style="left:1124px;top:749px;width:1px;height:21px;background:#dcdcdc;"></div>
<div class="a" style="left:1125px;top:749px;width:39px;height:20px;background:#f7b5a5;"></div>
<div class="a" style="left:1164px;top:749px;width:1px;height:21px;background:#dcdcdc;"></div>
<div class="a" style="left:1165px;top:749px;width:39px;height:20px;background:#fffee0;"></div>
<div class="a" style="left:1204px;top:749px;width:1px;height:21px;background:#dcdcdc;"></div>
<div class="a" style="left:1205px;top:749px;width:39px;height:20px;background:#fffee0;"></div>
<div class="a" style="left:1244px;top:749px;width:1px;height:21px;background:#dcdcdc;"></div>
<div class="a" style="left:1324px;top:749px;width:1px;height:21px;background:#dcdcdc;"></div>
<div class="a" style="left:1325px;top:749px;width:49px;height:20px;background:#fffee0;"></div>
<div class="a" style="left:1374px;top:749px;width:1px;height:21px;background:#dcdcdc;"></div>
<div class="a" style="left:1375px;top:749px;width:74px;height:20px;background:#fffee0;"></div>
<div class="a" style="left:1449px;top:749px;width:1px;height:21px;background:#dcdcdc;"></div>
<div class="a" style="left:1450px;top:749px;width:74px;height:20px;background:#fffee0;"></div>
<div class="a" style="left:1524px;top:749px;width:1px;height:21px;background:#dcdcdc;"></div>
<div class="a" style="left:1525px;top:749px;width:73px;height:20px;background:#fffee0;"></div>
<div class="a" style="left:1598px;top:749px;width:1px;height:21px;background:#dcdcdc;"></div>
<div class="a" style="left:1694px;top:749px;width:1px;height:21px;background:#dcdcdc;"></div>
<div class="a" style="left:1695px;top:749px;width:55px;height:20px;background:#fffee0;"></div>
<div class="a" style="left:1750px;top:749px;width:1px;height:21px;background:#dcdcdc;"></div>
<div class="a" style="left:1796px;top:749px;width:1px;height:21px;background:#dcdcdc;"></div>
<div class="a" style="left:1797px;top:749px;width:69px;height:20px;background:#fffee0;"></div>
<div class="a" style="left:1866px;top:749px;width:1px;height:21px;background:#dcdcdc;"></div>
<div class="a" style="left:1912px;top:749px;width:1px;height:21px;background:#dcdcdc;"></div>
<div class="a" style="left:2012px;top:749px;width:1px;height:21px;background:#dcdcdc;"></div>
<div class="a" style="left:2086px;top:749px;width:1px;height:21px;background:#dcdcdc;"></div>
<div class="a" style="left:2087px;top:749px;width:54px;height:20px;background:#c0e39b;"></div>
<div class="a" style="left:2141px;top:749px;width:1px;height:21px;background:#dcdcdc;"></div>
<div class="a" style="left:2261px;top:749px;width:1px;height:21px;background:#dcdcdc;"></div>
<div class="a" style="left:2331px;top:749px;width:1px;height:21px;background:#dcdcdc;"></div>
<div class="a" style="left:2332px;top:749px;width:24px;height:20px;background:#fffee0;"></div>
<div class="a" style="left:2356px;top:749px;width:1px;height:21px;background:#dcdcdc;"></div>
<div class="a" style="left:30px;top:769px;width:2326px;height:1px;background:#dcdcdc;"></div>
<div class="t" style="left:558.00px;top:748.75px;font-size:12.270px;color:#000;text-decoration:underline;">G.PKW.A-1168534 /A</div>
<div class="t" style="left:698.20px;top:748.75px;font-size:12.270px;color:#000;">*Getriebe PKW*</div>
<div class="t" style="left:907.60px;top:749.22px;font-size:10.900px;color:#000;">550x600 mm</div>
<div class="a" style="left:1138px;top:752px;width:13px;height:13px;background:#fff;box-shadow:inset 0 0 0 1px #333;"></div>
<svg class="a" style="left:1138px;top:752px" width="13" height="13" viewBox="0 0 13 13"><path d="M2.6 6.6 L5.2 9.2 L10.6 3.4" fill="none" stroke="#333" stroke-width="1.3"/></svg>
<div class="a" style="left:1178px;top:752px;width:13px;height:13px;background:#fff;box-shadow:inset 0 0 0 1px #333;"></div>
<div class="a" style="left:1218px;top:752px;width:13px;height:13px;background:#fff;box-shadow:inset 0 0 0 1px #333;"></div>
<div class="t" style="left:1273.74px;top:748.75px;font-size:12.270px;color:#000;">1.316,00</div>
<div class="t" style="left:1327.00px;top:748.75px;font-size:12.270px;color:#000;">Stk</div>
<div class="t" style="left:1415.79px;top:748.75px;font-size:12.270px;color:#000;">9,000</div>
<div class="t" style="left:1479.88px;top:748.75px;font-size:12.270px;color:#000;">-886,00</div>
<div class="t" style="left:1697.30px;top:749.19px;font-size:11.000px;color:#000;transform:scaleX(0.905);transform-origin:0 0;">PR1001</div>
<div class="a" style="left:1767px;top:752px;width:13px;height:13px;background:#fff;box-shadow:inset 0 0 0 1px #333;"></div>
<div class="a" style="left:1883px;top:752px;width:13px;height:13px;background:#fff;box-shadow:inset 0 0 0 1px #333;"></div>
<svg class="a" style="left:2107px;top:753px" width="15" height="12" viewBox="0 0 15 12"><path d="M0.5 0.5 H11 L14.5 3.5 V11.5 H0.5Z" fill="#f8f8f8" stroke="#d8d8d8"/><text x="4.3" y="9.8" font-family="Liberation Sans" font-style="italic" font-size="10.5" fill="#a8a8a8">a</text></svg>
<div class="t" style="left:2144.50px;top:748.75px;font-size:12.270px;color:#000;text-decoration:underline;">STAHL</div>
<div class="t" style="left:2304.62px;top:748.75px;font-size:12.270px;color:#000;">4,00</div>
<div class="a" style="left:30px;top:770px;width:2326px;height:20px;background:#ffffff;"></div>
<div class="a" style="left:129px;top:770px;width:1px;height:21px;background:#dcdcdc;"></div>
<div class="a" style="left:174px;top:770px;width:1px;height:21px;background:#dcdcdc;"></div>
<div class="a" style="left:274px;top:770px;width:1px;height:21px;background:#dcdcdc;"></div>
<div class="a" style="left:385px;top:770px;width:1px;height:21px;background:#dcdcdc;"></div>
<div class="a" style="left:450px;top:770px;width:1px;height:21px;background:#dcdcdc;"></div>
<div class="a" style="left:515px;top:770px;width:1px;height:21px;background:#dcdcdc;"></div>
<div class="a" style="left:516px;top:770px;width:39px;height:20px;background:#fffee0;"></div>
<div class="a" style="left:555px;top:770px;width:1px;height:21px;background:#dcdcdc;"></div>
<div class="a" style="left:695px;top:770px;width:1px;height:21px;background:#dcdcdc;"></div>
<div class="a" style="left:905px;top:770px;width:1px;height:21px;background:#dcdcdc;"></div>
<div class="a" style="left:906px;top:770px;width:218px;height:20px;background:#fffee0;"></div>
<div class="a" style="left:1124px;top:770px;width:1px;height:21px;background:#dcdcdc;"></div>
<div class="a" style="left:1125px;top:770px;width:39px;height:20px;background:#f7b5a5;"></div>
<div class="a" style="left:1164px;top:770px;width:1px;height:21px;background:#dcdcdc;"></div>
<div class="a" style="left:1165px;top:770px;width:39px;height:20px;background:#fffee0;"></div>
<div class="a" style="left:1204px;top:770px;width:1px;height:21px;background:#dcdcdc;"></div>
<div class="a" style="left:1205px;top:770px;width:39px;height:20px;background:#fffee0;"></div>
<div class="a" style="left:1244px;top:770px;width:1px;height:21px;background:#dcdcdc;"></div>
<div class="a" style="left:1324px;top:770px;width:1px;height:21px;background:#dcdcdc;"></div>
<div class="a" style="left:1325px;top:770px;width:49px;height:20px;background:#fffee0;"></div>
<div class="a" style="left:1374px;top:770px;width:1px;height:21px;background:#dcdcdc;"></div>
<div class="a" style="left:1375px;top:770px;width:74px;height:20px;background:#fffee0;"></div>
<div class="a" style="left:1449px;top:770px;width:1px;height:21px;background:#dcdcdc;"></div>
<div class="a" style="left:1450px;top:770px;width:74px;height:20px;background:#f7b5a5;"></div>
<div class="a" style="left:1524px;top:770px;width:1px;height:21px;background:#dcdcdc;"></div>
<div class="a" style="left:1525px;top:770px;width:73px;height:20px;background:#fffee0;"></div>
<div class="a" style="left:1598px;top:770px;width:1px;height:21px;background:#dcdcdc;"></div>
<div class="a" style="left:1694px;top:770px;width:1px;height:21px;background:#dcdcdc;"></div>
<div class="a" style="left:1695px;top:770px;width:55px;height:20px;background:#fffee0;"></div>
<div class="a" style="left:1750px;top:770px;width:1px;height:21px;background:#dcdcdc;"></div>
<div class="a" style="left:1796px;top:770px;width:1px;height:21px;background:#dcdcdc;"></div>
<div class="a" style="left:1797px;top:770px;width:69px;height:20px;background:#fffee0;"></div>
<div class="a" style="left:1866px;top:770px;width:1px;height:21px;background:#dcdcdc;"></div>
<div class="a" style="left:1912px;top:770px;width:1px;height:21px;background:#dcdcdc;"></div>
<div class="a" style="left:2012px;top:770px;width:1px;height:21px;background:#dcdcdc;"></div>
<div class="a" style="left:2086px;top:770px;width:1px;height:21px;background:#dcdcdc;"></div>
<div class="a" style="left:2087px;top:770px;width:54px;height:20px;background:#c0e39b;"></div>
<div class="a" style="left:2141px;top:770px;width:1px;height:21px;background:#dcdcdc;"></div>
<div class="a" style="left:2261px;top:770px;width:1px;height:21px;background:#dcdcdc;"></div>
<div class="a" style="left:2331px;top:770px;width:1px;height:21px;background:#dcdcdc;"></div>
<div class="a" style="left:2332px;top:770px;width:24px;height:20px;background:#fffee0;"></div>
<div class="a" style="left:2356px;top:770px;width:1px;height:21px;background:#dcdcdc;"></div>
<div class="a" style="left:30px;top:790px;width:2326px;height:1px;background:#dcdcdc;"></div>
<div class="t" style="left:558.00px;top:769.75px;font-size:12.270px;color:#000;text-decoration:underline;">W.13.N-272.371 /C</div>
<div class="t" style="left:698.20px;top:769.75px;font-size:12.270px;color:#000;">*Welle Nut C*</div>
<div class="t" style="left:907.60px;top:770.22px;font-size:10.900px;color:#000;">Ø13x37 mm</div>
<div class="a" style="left:1138px;top:773px;width:13px;height:13px;background:#fff;box-shadow:inset 0 0 0 1px #333;"></div>
<svg class="a" style="left:1138px;top:773px" width="13" height="13" viewBox="0 0 13 13"><path d="M2.6 6.6 L5.2 9.2 L10.6 3.4" fill="none" stroke="#333" stroke-width="1.3"/></svg>
<div class="a" style="left:1178px;top:773px;width:13px;height:13px;background:#fff;box-shadow:inset 0 0 0 1px #333;"></div>
<div class="a" style="left:1218px;top:773px;width:13px;height:13px;background:#fff;box-shadow:inset 0 0 0 1px #333;"></div>
<div class="t" style="left:1273.74px;top:769.75px;font-size:12.270px;color:#000;">4.557,00</div>
<div class="t" style="left:1327.00px;top:769.75px;font-size:12.270px;color:#000;">Stk</div>
<div class="t" style="left:1391.91px;top:769.75px;font-size:12.270px;color:#000;">1.745,000</div>
<div class="t" style="left:1473.74px;top:769.75px;font-size:12.270px;color:#000;">3.718,00</div>
<div class="t" style="left:1697.30px;top:770.19px;font-size:11.000px;color:#000;transform:scaleX(0.905);transform-origin:0 0;">PR1001</div>
<div class="a" style="left:1767px;top:773px;width:13px;height:13px;background:#fff;box-shadow:inset 0 0 0 1px #333;"></div>
<div class="a" style="left:1883px;top:773px;width:13px;height:13px;background:#fff;box-shadow:inset 0 0 0 1px #333;"></div>
<svg class="a" style="left:2107px;top:774px" width="15" height="12" viewBox="0 0 15 12"><path d="M0.5 0.5 H11 L14.5 3.5 V11.5 H0.5Z" fill="#f8f8f8" stroke="#d8d8d8"/><text x="4.3" y="9.8" font-family="Liberation Sans" font-style="italic" font-size="10.5" fill="#a8a8a8">a</text></svg>
<div class="t" style="left:2144.50px;top:769.75px;font-size:12.270px;color:#000;text-decoration:underline;">STAHL</div>
<div class="t" style="left:2304.62px;top:769.75px;font-size:12.270px;color:#000;">3,00</div>
<div class="a" style="left:30px;top:791px;width:2326px;height:20px;background:#efefef;"></div>
<div class="a" style="left:129px;top:791px;width:1px;height:21px;background:#dcdcdc;"></div>
<div class="a" style="left:174px;top:791px;width:1px;height:21px;background:#dcdcdc;"></div>
<div class="a" style="left:274px;top:791px;width:1px;height:21px;background:#dcdcdc;"></div>
<div class="a" style="left:385px;top:791px;width:1px;height:21px;background:#dcdcdc;"></div>
<div class="a" style="left:450px;top:791px;width:1px;height:21px;background:#dcdcdc;"></div>
<div class="a" style="left:515px;top:791px;width:1px;height:21px;background:#dcdcdc;"></div>
<div class="a" style="left:516px;top:791px;width:39px;height:20px;background:#fffee0;"></div>
<div class="a" style="left:555px;top:791px;width:1px;height:21px;background:#dcdcdc;"></div>
<div class="a" style="left:695px;top:791px;width:1px;height:21px;background:#dcdcdc;"></div>
<div class="a" style="left:905px;top:791px;width:1px;height:21px;background:#dcdcdc;"></div>
<div class="a" style="left:906px;top:791px;width:218px;height:20px;background:#fffee0;"></div>
<div class="a" style="left:1124px;top:791px;width:1px;height:21px;background:#dcdcdc;"></div>
<div class="a" style="left:1125px;top:791px;width:39px;height:20px;background:#fffee0;"></div>
<div class="a" style="left:1164px;top:791px;width:1px;height:21px;background:#dcdcdc;"></div>
<div class="a" style="left:1165px;top:791px;width:39px;height:20px;background:#fffee0;"></div>
<div class="a" style="left:1204px;top:791px;width:1px;height:21px;background:#dcdcdc;"></div>
<div class="a" style="left:1205px;top:791px;width:39px;height:20px;background:#fffee0;"></div>
<div class="a" style="left:1244px;top:791px;width:1px;height:21px;background:#dcdcdc;"></div>
<div class="a" style="left:1324px;top:791px;width:1px;height:21px;background:#dcdcdc;"></div>
<div class="a" style="left:1325px;top:791px;width:49px;height:20px;background:#fffee0;"></div>
<div class="a" style="left:1374px;top:791px;width:1px;height:21px;background:#dcdcdc;"></div>
<div class="a" style="left:1375px;top:791px;width:74px;height:20px;background:#fffee0;"></div>
<div class="a" style="left:1449px;top:791px;width:1px;height:21px;background:#dcdcdc;"></div>
<div class="a" style="left:1450px;top:791px;width:74px;height:20px;background:#fffee0;"></div>
<div class="a" style="left:1524px;top:791px;width:1px;height:21px;background:#dcdcdc;"></div>
<div class="a" style="left:1525px;top:791px;width:73px;height:20px;background:#fffee0;"></div>
<div class="a" style="left:1598px;top:791px;width:1px;height:21px;background:#dcdcdc;"></div>
<div class="a" style="left:1694px;top:791px;width:1px;height:21px;background:#dcdcdc;"></div>
<div class="a" style="left:1695px;top:791px;width:55px;height:20px;background:#fffee0;"></div>
<div class="a" style="left:1750px;top:791px;width:1px;height:21px;background:#dcdcdc;"></div>
<div class="a" style="left:1796px;top:791px;width:1px;height:21px;background:#dcdcdc;"></div>
<div class="a" style="left:1797px;top:791px;width:69px;height:20px;background:#fffee0;"></div>
<div class="a" style="left:1866px;top:791px;width:1px;height:21px;background:#dcdcdc;"></div>
<div class="a" style="left:1912px;top:791px;width:1px;height:21px;background:#dcdcdc;"></div>
<div class="a" style="left:2012px;top:791px;width:1px;height:21px;background:#dcdcdc;"></div>
<div class="a" style="left:2086px;top:791px;width:1px;height:21px;background:#dcdcdc;"></div>
<div class="a" style="left:2087px;top:791px;width:54px;height:20px;background:#c0e39b;"></div>
<div class="a" style="left:2141px;top:791px;width:1px;height:21px;background:#dcdcdc;"></div>
<div class="a" style="left:2261px;top:791px;width:1px;height:21px;background:#dcdcdc;"></div>
<div class="a" style="left:2331px;top:791px;width:1px;height:21px;background:#dcdcdc;"></div>
<div class="a" style="left:2332px;top:791px;width:24px;height:20px;background:#fffee0;"></div>
<div class="a" style="left:2356px;top:791px;width:1px;height:21px;background:#dcdcdc;"></div>
<div class="a" style="left:30px;top:811px;width:2326px;height:1px;background:#dcdcdc;"></div>
<div class="t" style="left:558.00px;top:790.75px;font-size:12.270px;color:#000;text-decoration:underline;">1.2210 Ø14X1000</div>
<div class="t" style="left:698.20px;top:790.75px;font-size:12.270px;color:#000;">*Silberstahl Rundstange / Welle DI...</div>
<div class="t" style="left:907.60px;top:791.22px;font-size:10.900px;color:#000;">Ø 14x1000</div>
<div class="a" style="left:1138px;top:794px;width:13px;height:13px;background:#fff;box-shadow:inset 0 0 0 1px #333;"></div>
<div class="a" style="left:1178px;top:794px;width:13px;height:13px;background:#fff;box-shadow:inset 0 0 0 1px #333;"></div>
<div class="a" style="left:1218px;top:794px;width:13px;height:13px;background:#fff;box-shadow:inset 0 0 0 1px #333;"></div>
<div class="t" style="left:1273.74px;top:790.75px;font-size:12.270px;color:#000;">1.584,00</div>
<div class="t" style="left:1327.00px;top:790.75px;font-size:12.270px;color:#000;">m</div>
<div class="t" style="left:1402.15px;top:790.75px;font-size:12.270px;color:#000;">344,000</div>
<div class="t" style="left:1469.65px;top:790.75px;font-size:12.270px;color:#000;">-2.835,89</div>
<div class="t" style="left:1697.30px;top:791.19px;font-size:11.000px;color:#000;transform:scaleX(0.905);transform-origin:0 0;">RM1001</div>
<div class="a" style="left:1767px;top:794px;width:13px;height:13px;background:#fff;box-shadow:inset 0 0 0 1px #333;"></div>
<svg class="a" style="left:1767px;top:794px" width="13" height="13" viewBox="0 0 13 13"><path d="M2.6 6.6 L5.2 9.2 L10.6 3.4" fill="none" stroke="#333" stroke-width="1.3"/></svg>
<div class="a" style="left:1883px;top:794px;width:13px;height:13px;background:#fff;box-shadow:inset 0 0 0 1px #333;"></div>
<svg class="a" style="left:2107px;top:795px" width="15" height="12" viewBox="0 0 15 12"><path d="M0.5 0.5 H11 L14.5 3.5 V11.5 H0.5Z" fill="#f8f8f8" stroke="#d8d8d8"/><text x="4.3" y="9.8" font-family="Liberation Sans" font-style="italic" font-size="10.5" fill="#a8a8a8">a</text></svg>
<div class="t" style="left:2144.50px;top:790.75px;font-size:12.270px;color:#000;text-decoration:underline;">STAHL</div>
<div class="t" style="left:2297.79px;top:790.75px;font-size:12.270px;color:#000;">10,00</div>
<div class="a" style="left:30px;top:812px;width:2326px;height:20px;background:#ffffff;"></div>
<div class="a" style="left:129px;top:812px;width:1px;height:21px;background:#dcdcdc;"></div>
<div class="a" style="left:174px;top:812px;width:1px;height:21px;background:#dcdcdc;"></div>
<div class="a" style="left:274px;top:812px;width:1px;height:21px;background:#dcdcdc;"></div>
<div class="a" style="left:385px;top:812px;width:1px;height:21px;background:#dcdcdc;"></div>
<div class="a" style="left:450px;top:812px;width:1px;height:21px;background:#dcdcdc;"></div>
<div class="a" style="left:515px;top:812px;width:1px;height:21px;background:#dcdcdc;"></div>
<div class="a" style="left:516px;top:812px;width:39px;height:20px;background:#fffee0;"></div>
<div class="a" style="left:555px;top:812px;width:1px;height:21px;background:#dcdcdc;"></div>
<div class="a" style="left:695px;top:812px;width:1px;height:21px;background:#dcdcdc;"></div>
<div class="a" style="left:905px;top:812px;width:1px;height:21px;background:#dcdcdc;"></div>
<div class="a" style="left:906px;top:812px;width:218px;height:20px;background:#fffee0;"></div>
<div class="a" style="left:1124px;top:812px;width:1px;height:21px;background:#dcdcdc;"></div>
<div class="a" style="left:1125px;top:812px;width:39px;height:20px;background:#fffee0;"></div>
<div class="a" style="left:1164px;top:812px;width:1px;height:21px;background:#dcdcdc;"></div>
<div class="a" style="left:1165px;top:812px;width:39px;height:20px;background:#fffee0;"></div>
<div class="a" style="left:1204px;top:812px;width:1px;height:21px;background:#dcdcdc;"></div>
<div class="a" style="left:1205px;top:812px;width:39px;height:20px;background:#fffee0;"></div>
<div class="a" style="left:1244px;top:812px;width:1px;height:21px;background:#dcdcdc;"></div>
<div class="a" style="left:1324px;top:812px;width:1px;height:21px;background:#dcdcdc;"></div>
<div class="a" style="left:1325px;top:812px;width:49px;height:20px;background:#fffee0;"></div>
<div class="a" style="left:1374px;top:812px;width:1px;height:21px;background:#dcdcdc;"></div>
<div class="a" style="left:1375px;top:812px;width:74px;height:20px;background:#fffee0;"></div>
<div class="a" style="left:1449px;top:812px;width:1px;height:21px;background:#dcdcdc;"></div>
<div class="a" style="left:1450px;top:812px;width:74px;height:20px;background:#fffee0;"></div>
<div class="a" style="left:1524px;top:812px;width:1px;height:21px;background:#dcdcdc;"></div>
<div class="a" style="left:1525px;top:812px;width:73px;height:20px;background:#fffee0;"></div>
<div class="a" style="left:1598px;top:812px;width:1px;height:21px;background:#dcdcdc;"></div>
<div class="a" style="left:1694px;top:812px;width:1px;height:21px;background:#dcdcdc;"></div>
<div class="a" style="left:1695px;top:812px;width:55px;height:20px;background:#fffee0;"></div>
<div class="a" style="left:1750px;top:812px;width:1px;height:21px;background:#dcdcdc;"></div>
<div class="a" style="left:1796px;top:812px;width:1px;height:21px;background:#dcdcdc;"></div>
<div class="a" style="left:1797px;top:812px;width:69px;height:20px;background:#fffee0;"></div>
<div class="a" style="left:1866px;top:812px;width:1px;height:21px;background:#dcdcdc;"></div>
<div class="a" style="left:1912px;top:812px;width:1px;height:21px;background:#dcdcdc;"></div>
<div class="a" style="left:2012px;top:812px;width:1px;height:21px;background:#dcdcdc;"></div>
<div class="a" style="left:2086px;top:812px;width:1px;height:21px;background:#dcdcdc;"></div>
<div class="a" style="left:2087px;top:812px;width:54px;height:20px;background:#c0e39b;"></div>
<div class="a" style="left:2141px;top:812px;width:1px;height:21px;background:#dcdcdc;"></div>
<div class="a" style="left:2261px;top:812px;width:1px;height:21px;background:#dcdcdc;"></div>
<div class="a" style="left:2331px;top:812px;width:1px;height:21px;background:#dcdcdc;"></div>
<div class="a" style="left:2332px;top:812px;width:24px;height:20px;background:#fffee0;"></div>
<div class="a" style="left:2356px;top:812px;width:1px;height:21px;background:#dcdcdc;"></div>
<div class="a" style="left:30px;top:832px;width:2326px;height:1px;background:#dcdcdc;"></div>
<div class="t" style="left:558.00px;top:811.75px;font-size:12.270px;color:#000;text-decoration:underline;">Z-21435000-L-Z64</div>
<div class="t" style="left:698.20px;top:811.75px;font-size:12.270px;color:#000;">*Zahnrad*</div>
<div class="t" style="left:907.60px;top:812.22px;font-size:10.900px;color:#000;">Ø53 mm, 64 Zähne, 20 ° schräg verzahnt</div>
<div class="a" style="left:1138px;top:815px;width:13px;height:13px;background:#fff;box-shadow:inset 0 0 0 1px #333;"></div>
<div class="a" style="left:1178px;top:815px;width:13px;height:13px;background:#fff;box-shadow:inset 0 0 0 1px #333;"></div>
<div class="a" style="left:1218px;top:815px;width:13px;height:13px;background:#fff;box-shadow:inset 0 0 0 1px #333;"></div>
<div class="t" style="left:1283.97px;top:811.75px;font-size:12.270px;color:#000;">396,00</div>
<div class="t" style="left:1327.00px;top:811.75px;font-size:12.270px;color:#000;">Stk</div>
<div class="t" style="left:1408.97px;top:811.75px;font-size:12.270px;color:#000;">50,000</div>
<div class="t" style="left:1469.65px;top:811.75px;font-size:12.270px;color:#000;">-1.140,00</div>
<div class="t" style="left:1697.30px;top:812.19px;font-size:11.000px;color:#000;transform:scaleX(0.905);transform-origin:0 0;">KT1001</div>
<div class="a" style="left:1767px;top:815px;width:13px;height:13px;background:#fff;box-shadow:inset 0 0 0 1px #333;"></div>
<div class="a" style="left:1883px;top:815px;width:13px;height:13px;background:#fff;box-shadow:inset 0 0 0 1px #333;"></div>
<svg class="a" style="left:2107px;top:816px" width="15" height="12" viewBox="0 0 15 12"><path d="M0.5 0.5 H11 L14.5 3.5 V11.5 H0.5Z" fill="#f8f8f8" stroke="#d8d8d8"/><text x="4.3" y="9.8" font-family="Liberation Sans" font-style="italic" font-size="10.5" fill="#a8a8a8">a</text></svg>
<div class="t" style="left:2144.50px;top:811.75px;font-size:12.270px;color:#000;text-decoration:underline;">STAHL</div>
<div class="t" style="left:2297.79px;top:811.75px;font-size:12.270px;color:#000;">29,99</div>
<svg class="a" style="left:527px;top:752px" width="15" height="13" viewBox="0 0 15 13"><path d="M1 5 L7 3 L11 5 L11 11 L6 13 L1 11Z" fill="#30a030"/><path d="M1 5 L7 3 L11 5 L6 7Z" fill="#60d050"/><path d="M9 1 L13 0 L15 2 L15 6 L11 7 L9 5Z" fill="#40b040"/></svg>
<div class="a" style="left:507px;top:685px;width:1849px;height:0;border-top:1px dotted #111;"></div>
<div class="a" style="left:507px;top:706px;width:1849px;height:0;border-top:1px dotted #111;"></div>
<div class="a" style="left:678px;top:687px;width:15px;height:17px;background:#e4e4e4;box-shadow:inset 0 0 0 1px #b0b0b0;"></div>
<div class="a" style="left:682px;top:696px;width:1px;height:1px;background:#333;"></div>
<div class="a" style="left:685px;top:696px;width:1px;height:1px;background:#333;"></div>
<div class="a" style="left:688px;top:696px;width:1px;height:1px;background:#333;"></div>
<div class="a" style="left:1357px;top:687px;width:15px;height:17px;background:#e4e4e4;box-shadow:inset 0 0 0 1px #b0b0b0;"></div>
<div class="a" style="left:1361px;top:696px;width:1px;height:1px;background:#333;"></div>
<div class="a" style="left:1364px;top:696px;width:1px;height:1px;background:#333;"></div>
<div class="a" style="left:1367px;top:696px;width:1px;height:1px;background:#333;"></div>
<div class="a" style="left:2124px;top:686px;width:15px;height:19px;background:#e4e4e4;box-shadow:inset 0 0 0 1px #b0b0b0;"></div>
<svg class="a" style="left:2127px;top:693px" width="9" height="5" viewBox="0 0 9 5"><path d="M0.5 0.5 L4.5 4.5 L8.5 0.5" fill="none" stroke="#333"/></svg>
<div class="a" style="left:2243px;top:687px;width:15px;height:17px;background:#e4e4e4;box-shadow:inset 0 0 0 1px #b0b0b0;"></div>
<div class="a" style="left:2247px;top:696px;width:1px;height:1px;background:#333;"></div>
<div class="a" style="left:2250px;top:696px;width:1px;height:1px;background:#333;"></div>
<div class="a" style="left:2253px;top:696px;width:1px;height:1px;background:#333;"></div>
<div class="a" style="left:29px;top:1308px;width:2328px;height:1px;background:#c8c8c8;"></div>
<div class="a" style="left:30px;top:1309px;width:2326px;height:25px;background:#efefef;"></div>
<div class="a" style="left:41px;top:1309px;width:1px;height:25px;background:#d0d0d0;"></div>
<div class="a" style="left:44px;top:1311px;width:86px;height:21px;background:#e6e6e6;box-shadow:inset 0 0 0 1px #d8d8d8;"></div>
<div class="t" style="left:112.35px;top:1311.95px;font-size:12.270px;color:#000;">16</div>
<div class="a" style="left:30px;top:1333px;width:2326px;height:1px;background:#b4b4b4;"></div>
<div class="a" style="left:30px;top:1334px;width:2326px;height:25px;background:#efefef;"></div>
<div class="a" style="left:35px;top:1339px;width:15px;height:15px;background:#c85050;"></div>
<svg class="a" style="left:39px;top:1343px" width="7" height="7" viewBox="0 0 7 7"><path d="M1 1L6 6M6 1L1 6" stroke="#fff" stroke-width="1.6"/></svg>
<div class="a" style="left:55px;top:1340px;width:13px;height:13px;background:#fff;box-shadow:inset 0 0 0 1px #333;"></div>
<svg class="a" style="left:55px;top:1340px" width="13" height="13" viewBox="0 0 13 13"><path d="M2.6 6.6 L5.2 9.2 L10.6 3.4" fill="none" stroke="#333" stroke-width="1.3"/></svg>
<div class="t" style="left:77.00px;top:1336.70px;font-size:11.821px;color:#000;">(Typ &lt;&gt; 56:Anfragen (BANF))</div>
<div class="a" style="left:30px;top:1359px;width:2326px;height:18px;background:#efefef;"></div>
<div class="a" style="left:47px;top:1360px;width:1842px;height:16px;background:#cdcdcd;"></div>
<svg class="a" style="left:35px;top:1364px" width="7" height="8" viewBox="0 0 7 8"><path d="M5.5 0.5 L1.5 4 L5.5 7.5" fill="none" stroke="#444" stroke-width="2"/></svg>
<svg class="a" style="left:2345px;top:1363px" width="6" height="9" viewBox="0 0 6 9"><path d="M1 0.5 L5 4.5 L1 8.5" fill="none" stroke="#444" stroke-width="1.5"/></svg>
<div class="a" style="left:29px;top:1377px;width:2328px;height:1px;background:#9a9a9a;"></div>
<div class="a" style="left:30px;top:478px;width:477px;height:729px;background:#ffffff;"></div>
<div class="a" style="left:30px;top:478px;width:477px;height:729px;box-shadow:inset 0 0 0 1px #000;"></div>
<div class="a" style="left:48px;top:479px;width:458px;height:19px;background:#0078d7;"></div>
<div class="a" style="left:33px;top:482px;width:13px;height:13px;background:#fff;box-shadow:inset 0 0 0 1px #222;"></div>
<div class="a" style="left:36px;top:485px;width:7px;height:7px;background:#333;"></div>
<div class="t" style="left:53.50px;top:478.65px;font-size:12.270px;color:#fff;">(Alle)</div>
<div class="a" style="left:33px;top:501px;width:13px;height:13px;background:#fff;box-shadow:inset 0 0 0 1px #333;"></div>
<div class="t" style="left:53.50px;top:497.75px;font-size:12.270px;color:#000;">(Sortiert)</div>
<div class="a" style="left:37px;top:518px;width:463px;height:1px;background:#a0a0a0;"></div>
<div class="a" style="left:33px;top:525px;width:13px;height:13px;background:#fff;box-shadow:inset 0 0 0 1px #333;"></div>
<svg class="a" style="left:33px;top:525px" width="13" height="13" viewBox="0 0 13 13"><path d="M2.6 6.6 L5.2 9.2 L10.6 3.4" fill="none" stroke="#333" stroke-width="1.3"/></svg>
<div class="t" style="left:52.90px;top:521.76px;font-size:12.240px;color:#000;">Position</div>
<div class="a" style="left:33px;top:544px;width:13px;height:13px;background:#fff;box-shadow:inset 0 0 0 1px #333;"></div>
<div class="t" style="left:52.90px;top:540.76px;font-size:12.240px;color:#000;">Typ</div>
<div class="a" style="left:33px;top:563px;width:13px;height:13px;background:#fff;box-shadow:inset 0 0 0 1px #333;"></div>
<div class="t" style="left:52.90px;top:559.76px;font-size:12.240px;color:#000;">bvp_typindex</div>
<div class="a" style="left:33px;top:582px;width:13px;height:13px;background:#fff;box-shadow:inset 0 0 0 1px #333;"></div>
<svg class="a" style="left:33px;top:582px" width="13" height="13" viewBox="0 0 13 13"><path d="M2.6 6.6 L5.2 9.2 L10.6 3.4" fill="none" stroke="#333" stroke-width="1.3"/></svg>
<div class="t" style="left:52.90px;top:578.76px;font-size:12.240px;color:#000;">Pos (BV) geschlossen</div>
<div class="a" style="left:33px;top:601px;width:13px;height:13px;background:#fff;box-shadow:inset 0 0 0 1px #333;"></div>
<div class="t" style="left:52.90px;top:597.76px;font-size:12.240px;color:#000;">Übernommen aus BV</div>
<div class="a" style="left:33px;top:620px;width:13px;height:13px;background:#fff;box-shadow:inset 0 0 0 1px #333;"></div>
<div class="t" style="left:52.90px;top:616.76px;font-size:12.240px;color:#000;">Übernahme in BV</div>
<div class="a" style="left:33px;top:639px;width:13px;height:13px;background:#fff;box-shadow:inset 0 0 0 1px #333;"></div>
<svg class="a" style="left:33px;top:639px" width="13" height="13" viewBox="0 0 13 13"><path d="M2.6 6.6 L5.2 9.2 L10.6 3.4" fill="none" stroke="#333" stroke-width="1.3"/></svg>
<div class="t" style="left:52.90px;top:635.76px;font-size:12.240px;color:#000;">Verursacher Ersteller</div>
<div class="a" style="left:33px;top:658px;width:13px;height:13px;background:#fff;box-shadow:inset 0 0 0 1px #333;"></div>
<svg class="a" style="left:33px;top:658px" width="13" height="13" viewBox="0 0 13 13"><path d="M2.6 6.6 L5.2 9.2 L10.6 3.4" fill="none" stroke="#333" stroke-width="1.3"/></svg>
<div class="t" style="left:52.90px;top:654.76px;font-size:12.240px;color:#000;">Verursacherliste</div>
<div class="a" style="left:33px;top:677px;width:13px;height:13px;background:#fff;box-shadow:inset 0 0 0 1px #333;"></div>
<div class="t" style="left:52.90px;top:673.76px;font-size:12.240px;color:#000;">Lieferadressen</div>
<div class="a" style="left:33px;top:696px;width:13px;height:13px;background:#fff;box-shadow:inset 0 0 0 1px #333;"></div>
<svg class="a" style="left:33px;top:696px" width="13" height="13" viewBox="0 0 13 13"><path d="M2.6 6.6 L5.2 9.2 L10.6 3.4" fill="none" stroke="#333" stroke-width="1.3"/></svg>
<div class="t" style="left:52.90px;top:692.76px;font-size:12.240px;color:#000;">Bestelldatum</div>
<div class="a" style="left:33px;top:715px;width:13px;height:13px;background:#fff;box-shadow:inset 0 0 0 1px #333;"></div>
<svg class="a" style="left:33px;top:715px" width="13" height="13" viewBox="0 0 13 13"><path d="M2.6 6.6 L5.2 9.2 L10.6 3.4" fill="none" stroke="#333" stroke-width="1.3"/></svg>
<div class="t" style="left:52.90px;top:711.76px;font-size:12.240px;color:#000;">Lieferdatum</div>
<div class="a" style="left:33px;top:734px;width:13px;height:13px;background:#fff;box-shadow:inset 0 0 0 1px #333;"></div>
<div class="t" style="left:52.90px;top:730.76px;font-size:12.240px;color:#000;">ArtStat</div>
<div class="a" style="left:33px;top:753px;width:13px;height:13px;background:#fff;box-shadow:inset 0 0 0 1px #333;"></div>
<svg class="a" style="left:33px;top:753px" width="13" height="13" viewBox="0 0 13 13"><path d="M2.6 6.6 L5.2 9.2 L10.6 3.4" fill="none" stroke="#333" stroke-width="1.3"/></svg>
<div class="t" style="left:52.90px;top:749.76px;font-size:12.240px;color:#000;">Stückliste / Vorproduktion</div>
<div class="a" style="left:33px;top:772px;width:13px;height:13px;background:#fff;box-shadow:inset 0 0 0 1px #333;"></div>
<svg class="a" style="left:33px;top:772px" width="13" height="13" viewBox="0 0 13 13"><path d="M2.6 6.6 L5.2 9.2 L10.6 3.4" fill="none" stroke="#333" stroke-width="1.3"/></svg>
<div class="t" style="left:52.90px;top:768.76px;font-size:12.240px;color:#000;">Artikel-Nr.</div>
<div class="a" style="left:33px;top:791px;width:13px;height:13px;background:#fff;box-shadow:inset 0 0 0 1px #333;"></div>
<svg class="a" style="left:33px;top:791px" width="13" height="13" viewBox="0 0 13 13"><path d="M2.6 6.6 L5.2 9.2 L10.6 3.4" fill="none" stroke="#333" stroke-width="1.3"/></svg>
<div class="t" style="left:52.90px;top:787.76px;font-size:12.240px;color:#000;">Artikelbezeichnung</div>
<div class="a" style="left:33px;top:810px;width:13px;height:13px;background:#fff;box-shadow:inset 0 0 0 1px #333;"></div>
<div class="t" style="left:52.90px;top:806.76px;font-size:12.240px;color:#000;">Arbeitspaket-Nr.</div>
<div class="a" style="left:33px;top:829px;width:13px;height:13px;background:#fff;box-shadow:inset 0 0 0 1px #333;"></div>
<div class="t" style="left:52.90px;top:825.76px;font-size:12.240px;color:#000;">Material</div>
<div class="a" style="left:33px;top:848px;width:13px;height:13px;background:#fff;box-shadow:inset 0 0 0 1px #333;"></div>
<svg class="a" style="left:33px;top:848px" width="13" height="13" viewBox="0 0 13 13"><path d="M2.6 6.6 L5.2 9.2 L10.6 3.4" fill="none" stroke="#333" stroke-width="1.3"/></svg>
<div class="t" style="left:52.90px;top:844.76px;font-size:12.240px;color:#000;">Dimension</div>
<div class="a" style="left:33px;top:867px;width:13px;height:13px;background:#fff;box-shadow:inset 0 0 0 1px #333;"></div>
<svg class="a" style="left:33px;top:867px" width="13" height="13" viewBox="0 0 13 13"><path d="M2.6 6.6 L5.2 9.2 L10.6 3.4" fill="none" stroke="#333" stroke-width="1.3"/></svg>
<div class="t" style="left:52.90px;top:863.76px;font-size:12.240px;color:#000;">Fertigungsartikel</div>
<div class="a" style="left:33px;top:886px;width:13px;height:13px;background:#fff;box-shadow:inset 0 0 0 1px #333;"></div>
<svg class="a" style="left:33px;top:886px" width="13" height="13" viewBox="0 0 13 13"><path d="M2.6 6.6 L5.2 9.2 L10.6 3.4" fill="none" stroke="#333" stroke-width="1.3"/></svg>
<div class="t" style="left:52.90px;top:882.76px;font-size:12.240px;color:#000;">Chargennummernpflicht!</div>
<div class="a" style="left:33px;top:905px;width:13px;height:13px;background:#fff;box-shadow:inset 0 0 0 1px #333;"></div>
<svg class="a" style="left:33px;top:905px" width="13" height="13" viewBox="0 0 13 13"><path d="M2.6 6.6 L5.2 9.2 L10.6 3.4" fill="none" stroke="#333" stroke-width="1.3"/></svg>
<div class="t" style="left:52.90px;top:901.76px;font-size:12.240px;color:#000;">Prüfmerkmal</div>
<div class="a" style="left:33px;top:924px;width:13px;height:13px;background:#fff;box-shadow:inset 0 0 0 1px #333;"></div>
<div class="t" style="left:52.90px;top:920.76px;font-size:12.240px;color:#000;">Beistellung an Lieferant [BL]</div>
<div class="a" style="left:33px;top:943px;width:13px;height:13px;background:#fff;box-shadow:inset 0 0 0 1px #333;"></div>
<svg class="a" style="left:33px;top:943px" width="13" height="13" viewBox="0 0 13 13"><path d="M2.6 6.6 L5.2 9.2 L10.6 3.4" fill="none" stroke="#333" stroke-width="1.3"/></svg>
<div class="t" style="left:52.90px;top:939.76px;font-size:12.240px;color:#000;">Menge [Gesamt, ME] (Einkauf)</div>
<div class="a" style="left:33px;top:962px;width:13px;height:13px;background:#fff;box-shadow:inset 0 0 0 1px #333;"></div>
<svg class="a" style="left:33px;top:962px" width="13" height="13" viewBox="0 0 13 13"><path d="M2.6 6.6 L5.2 9.2 L10.6 3.4" fill="none" stroke="#333" stroke-width="1.3"/></svg>
<div class="t" style="left:52.90px;top:958.76px;font-size:12.240px;color:#000;">ME</div>
<div class="a" style="left:33px;top:981px;width:13px;height:13px;background:#fff;box-shadow:inset 0 0 0 1px #333;"></div>
<svg class="a" style="left:33px;top:981px" width="13" height="13" viewBox="0 0 13 13"><path d="M2.6 6.6 L5.2 9.2 L10.6 3.4" fill="none" stroke="#333" stroke-width="1.3"/></svg>
<div class="t" style="left:52.90px;top:977.76px;font-size:12.240px;color:#000;">Menge lagernd (ART) [GME]</div>
<div class="a" style="left:33px;top:1000px;width:13px;height:13px;background:#fff;box-shadow:inset 0 0 0 1px #333;"></div>
<div class="t" style="left:52.90px;top:996.76px;font-size:12.240px;color:#000;">Nicht verfügbar</div>
<div class="a" style="left:33px;top:1019px;width:13px;height:13px;background:#fff;box-shadow:inset 0 0 0 1px #333;"></div>
<div class="t" style="left:52.90px;top:1015.76px;font-size:12.240px;color:#000;">Meldebestand</div>
<div class="a" style="left:33px;top:1038px;width:13px;height:13px;background:#fff;box-shadow:inset 0 0 0 1px #333;"></div>
<div class="t" style="left:52.90px;top:1034.76px;font-size:12.240px;color:#000;">Mahnstufe des Lieferanten</div>
<div class="a" style="left:33px;top:1057px;width:13px;height:13px;background:#fff;box-shadow:inset 0 0 0 1px #333;"></div>
<svg class="a" style="left:33px;top:1057px" width="13" height="13" viewBox="0 0 13 13"><path d="M2.6 6.6 L5.2 9.2 L10.6 3.4" fill="none" stroke="#333" stroke-width="1.3"/></svg>
<div class="t" style="left:52.90px;top:1053.76px;font-size:12.240px;color:#000;">Menge verfügbar (ART) [GME]</div>
<div class="a" style="left:33px;top:1076px;width:13px;height:13px;background:#fff;box-shadow:inset 0 0 0 1px #333;"></div>
<div class="t" style="left:52.90px;top:1072.76px;font-size:12.240px;color:#000;">Kundenzuordnung (Artikel)</div>
<div class="a" style="left:33px;top:1095px;width:13px;height:13px;background:#fff;box-shadow:inset 0 0 0 1px #333;"></div>
<svg class="a" style="left:33px;top:1095px" width="13" height="13" viewBox="0 0 13 13"><path d="M2.6 6.6 L5.2 9.2 L10.6 3.4" fill="none" stroke="#333" stroke-width="1.3"/></svg>
<div class="t" style="left:52.90px;top:1091.76px;font-size:12.240px;color:#000;">Sollbestand</div>
<div class="a" style="left:33px;top:1114px;width:13px;height:13px;background:#fff;box-shadow:inset 0 0 0 1px #333;"></div>
<div class="t" style="left:52.90px;top:1110.76px;font-size:12.240px;color:#000;">Bedarfsmenge (GME)</div>
<div class="a" style="left:33px;top:1133px;width:13px;height:13px;background:#fff;box-shadow:inset 0 0 0 1px #333;"></div>
<div class="t" style="left:52.90px;top:1129.76px;font-size:12.240px;color:#000;">Bearbeiter (Einkauf)</div>
<div class="a" style="left:33px;top:1152px;width:13px;height:13px;background:#fff;box-shadow:inset 0 0 0 1px #333;"></div>
<svg class="a" style="left:33px;top:1152px" width="13" height="13" viewBox="0 0 13 13"><path d="M2.6 6.6 L5.2 9.2 L10.6 3.4" fill="none" stroke="#333" stroke-width="1.3"/></svg>
<div class="t" style="left:52.90px;top:1148.76px;font-size:12.240px;color:#000;">Referenz/Artikel-Nr. (Lieferant)</div>
<div class="a" style="left:33px;top:1171px;width:13px;height:13px;background:#fff;box-shadow:inset 0 0 0 1px #333;"></div>
<div class="t" style="left:52.90px;top:1167.76px;font-size:12.240px;color:#000;">Kostenstelle</div>
<div class="a" style="left:33px;top:1190px;width:13px;height:13px;background:#fff;box-shadow:inset 0 0 0 1px #333;"></div>
<div class="t" style="left:52.90px;top:1186.76px;font-size:12.240px;color:#000;">Konto Aufwand (Einkauf)</div>
<div class="a" style="left:270px;top:525px;width:13px;height:13px;background:#fff;box-shadow:inset 0 0 0 1px #333;"></div>
<div class="t" style="left:290.40px;top:521.76px;font-size:12.240px;color:#000;">IC</div>
<div class="a" style="left:270px;top:544px;width:13px;height:13px;background:#fff;box-shadow:inset 0 0 0 1px #333;"></div>
<svg class="a" style="left:270px;top:544px" width="13" height="13" viewBox="0 0 13 13"><path d="M2.6 6.6 L5.2 9.2 L10.6 3.4" fill="none" stroke="#333" stroke-width="1.3"/></svg>
<div class="t" style="left:290.40px;top:540.76px;font-size:12.240px;color:#000;">AC</div>
<div class="a" style="left:270px;top:563px;width:13px;height:13px;background:#fff;box-shadow:inset 0 0 0 1px #333;"></div>
<svg class="a" style="left:270px;top:563px" width="13" height="13" viewBox="0 0 13 13"><path d="M2.6 6.6 L5.2 9.2 L10.6 3.4" fill="none" stroke="#333" stroke-width="1.3"/></svg>
<div class="t" style="left:290.40px;top:559.76px;font-size:12.240px;color:#000;">Zuschnitt</div>
<div class="a" style="left:270px;top:582px;width:13px;height:13px;background:#fff;box-shadow:inset 0 0 0 1px #333;"></div>
<svg class="a" style="left:270px;top:582px" width="13" height="13" viewBox="0 0 13 13"><path d="M2.6 6.6 L5.2 9.2 L10.6 3.4" fill="none" stroke="#333" stroke-width="1.3"/></svg>
<div class="t" style="left:290.40px;top:578.76px;font-size:12.240px;color:#000;">bvp_status</div>
<div class="a" style="left:270px;top:601px;width:13px;height:13px;background:#fff;box-shadow:inset 0 0 0 1px #333;"></div>
<svg class="a" style="left:270px;top:601px" width="13" height="13" viewBox="0 0 13 13"><path d="M2.6 6.6 L5.2 9.2 L10.6 3.4" fill="none" stroke="#333" stroke-width="1.3"/></svg>
<div class="t" style="left:290.40px;top:597.76px;font-size:12.240px;color:#000;">bvp_not_gme</div>
<div class="a" style="left:270px;top:620px;width:13px;height:13px;background:#fff;box-shadow:inset 0 0 0 1px #333;"></div>
<svg class="a" style="left:270px;top:620px" width="13" height="13" viewBox="0 0 13 13"><path d="M2.6 6.6 L5.2 9.2 L10.6 3.4" fill="none" stroke="#333" stroke-width="1.3"/></svg>
<div class="t" style="left:290.40px;top:616.76px;font-size:12.240px;color:#000;">F-Norm</div>
<div class="a" style="left:270px;top:639px;width:13px;height:13px;background:#fff;box-shadow:inset 0 0 0 1px #333;"></div>
<svg class="a" style="left:270px;top:639px" width="13" height="13" viewBox="0 0 13 13"><path d="M2.6 6.6 L5.2 9.2 L10.6 3.4" fill="none" stroke="#333" stroke-width="1.3"/></svg>
<div class="t" style="left:290.40px;top:635.76px;font-size:12.240px;color:#000;">Alternativartikel</div>
<div class="a" style="left:270px;top:658px;width:13px;height:13px;background:#fff;box-shadow:inset 0 0 0 1px #333;"></div>
<div class="t" style="left:290.40px;top:654.76px;font-size:12.240px;color:#000;">Zusatztext (BV-Pos.)</div>
<div class="a" style="left:270px;top:677px;width:13px;height:13px;background:#fff;box-shadow:inset 0 0 0 1px #333;"></div>
<div class="t" style="left:290.40px;top:673.76px;font-size:12.240px;color:#000;">Zusatztext Position intern</div>
<div class="a" style="left:270px;top:696px;width:13px;height:13px;background:#fff;box-shadow:inset 0 0 0 1px #333;"></div>
<div class="t" style="left:290.40px;top:692.76px;font-size:12.240px;color:#000;">Einlagerungshinweis</div>
<div class="a" style="left:270px;top:715px;width:13px;height:13px;background:#fff;box-shadow:inset 0 0 0 1px #333;"></div>
<svg class="a" style="left:270px;top:715px" width="13" height="13" viewBox="0 0 13 13"><path d="M2.6 6.6 L5.2 9.2 L10.6 3.4" fill="none" stroke="#333" stroke-width="1.3"/></svg>
<div class="t" style="left:290.40px;top:711.76px;font-size:12.240px;color:#000;">Zusatztext Organisatiorisch BV</div>
<div class="a" style="left:270px;top:734px;width:13px;height:13px;background:#fff;box-shadow:inset 0 0 0 1px #333;"></div>
<svg class="a" style="left:270px;top:734px" width="13" height="13" viewBox="0 0 13 13"><path d="M2.6 6.6 L5.2 9.2 L10.6 3.4" fill="none" stroke="#333" stroke-width="1.3"/></svg>
<div class="t" style="left:290.40px;top:730.76px;font-size:12.240px;color:#000;">Lieferant</div>
<div class="a" style="left:270px;top:753px;width:13px;height:13px;background:#fff;box-shadow:inset 0 0 0 1px #333;"></div>
<div class="t" style="left:290.40px;top:749.76px;font-size:12.240px;color:#000;">Adressbezeichnung (Lieferant)</div>
<div class="a" style="left:270px;top:772px;width:13px;height:13px;background:#fff;box-shadow:inset 0 0 0 1px #333;"></div>
<div class="t" style="left:290.40px;top:768.76px;font-size:12.240px;color:#000;">Fixierter Lieferant</div>
<div class="a" style="left:270px;top:791px;width:13px;height:13px;background:#fff;box-shadow:inset 0 0 0 1px #333;"></div>
<svg class="a" style="left:270px;top:791px" width="13" height="13" viewBox="0 0 13 13"><path d="M2.6 6.6 L5.2 9.2 L10.6 3.4" fill="none" stroke="#333" stroke-width="1.3"/></svg>
<div class="t" style="left:290.40px;top:787.76px;font-size:12.240px;color:#000;">Preis [EP, ME] (Einkauf)</div>
<div class="a" style="left:270px;top:810px;width:13px;height:13px;background:#fff;box-shadow:inset 0 0 0 1px #333;"></div>
<div class="t" style="left:290.40px;top:806.76px;font-size:12.240px;color:#000;">Preiseinheit für Menge [Preis/Menge]</div>
<div class="a" style="left:270px;top:829px;width:13px;height:13px;background:#fff;box-shadow:inset 0 0 0 1px #333;"></div>
<div class="t" style="left:290.40px;top:825.76px;font-size:12.240px;color:#000;">Preis [EP, ME] (Einkauf)</div>
<div class="a" style="left:270px;top:848px;width:13px;height:13px;background:#fff;box-shadow:inset 0 0 0 1px #333;"></div>
<div class="t" style="left:290.40px;top:844.76px;font-size:12.240px;color:#000;">Preis [EP, GME] (Einkauf)</div>
<div class="a" style="left:270px;top:867px;width:13px;height:13px;background:#fff;box-shadow:inset 0 0 0 1px #333;"></div>
<div class="t" style="left:290.40px;top:863.76px;font-size:12.240px;color:#000;">Preis [EP, GME, BW] (Einkauf)</div>
<div class="a" style="left:270px;top:886px;width:13px;height:13px;background:#fff;box-shadow:inset 0 0 0 1px #333;"></div>
<svg class="a" style="left:270px;top:886px" width="13" height="13" viewBox="0 0 13 13"><path d="M2.6 6.6 L5.2 9.2 L10.6 3.4" fill="none" stroke="#333" stroke-width="1.3"/></svg>
<div class="t" style="left:290.40px;top:882.76px;font-size:12.240px;color:#000;">Preis [EP, GME, AZ, BW] (Einkauf)</div>
<div class="a" style="left:270px;top:905px;width:13px;height:13px;background:#fff;box-shadow:inset 0 0 0 1px #333;"></div>
<svg class="a" style="left:270px;top:905px" width="13" height="13" viewBox="0 0 13 13"><path d="M2.6 6.6 L5.2 9.2 L10.6 3.4" fill="none" stroke="#333" stroke-width="1.3"/></svg>
<div class="t" style="left:290.40px;top:901.76px;font-size:12.240px;color:#000;">Wert</div>
<div class="a" style="left:270px;top:924px;width:13px;height:13px;background:#fff;box-shadow:inset 0 0 0 1px #333;"></div>
<div class="t" style="left:290.40px;top:920.76px;font-size:12.240px;color:#000;">Währung</div>
<div class="a" style="left:270px;top:943px;width:13px;height:13px;background:#fff;box-shadow:inset 0 0 0 1px #333;"></div>
<div class="t" style="left:290.40px;top:939.76px;font-size:12.240px;color:#000;">Rabatt</div>
<div class="a" style="left:270px;top:962px;width:13px;height:13px;background:#fff;box-shadow:inset 0 0 0 1px #333;"></div>
<svg class="a" style="left:270px;top:962px" width="13" height="13" viewBox="0 0 13 13"><path d="M2.6 6.6 L5.2 9.2 L10.6 3.4" fill="none" stroke="#333" stroke-width="1.3"/></svg>
<div class="t" style="left:290.40px;top:958.76px;font-size:12.240px;color:#000;">Preisursprung</div>
<div class="a" style="left:270px;top:981px;width:13px;height:13px;background:#fff;box-shadow:inset 0 0 0 1px #333;"></div>
<div class="t" style="left:290.40px;top:977.76px;font-size:12.240px;color:#000;">Hinweistext</div>
<div class="a" style="left:270px;top:1000px;width:13px;height:13px;background:#fff;box-shadow:inset 0 0 0 1px #333;"></div>
<svg class="a" style="left:270px;top:1000px" width="13" height="13" viewBox="0 0 13 13"><path d="M2.6 6.6 L5.2 9.2 L10.6 3.4" fill="none" stroke="#333" stroke-width="1.3"/></svg>
<div class="t" style="left:290.40px;top:996.76px;font-size:12.240px;color:#000;">Losgröße</div>
<div class="a" style="left:270px;top:1019px;width:13px;height:13px;background:#fff;box-shadow:inset 0 0 0 1px #333;"></div>
<svg class="a" style="left:270px;top:1019px" width="13" height="13" viewBox="0 0 13 13"><path d="M2.6 6.6 L5.2 9.2 L10.6 3.4" fill="none" stroke="#333" stroke-width="1.3"/></svg>
<div class="t" style="left:290.40px;top:1015.76px;font-size:12.240px;color:#000;">Ab- / Zuschläge</div>
<div class="a" style="left:270px;top:1038px;width:13px;height:13px;background:#fff;box-shadow:inset 0 0 0 1px #333;"></div>
<div class="t" style="left:290.40px;top:1034.76px;font-size:12.240px;color:#000;">S</div>
<div class="a" style="left:270px;top:1057px;width:13px;height:13px;background:#fff;box-shadow:inset 0 0 0 1px #333;"></div>
<svg class="a" style="left:270px;top:1057px" width="13" height="13" viewBox="0 0 13 13"><path d="M2.6 6.6 L5.2 9.2 L10.6 3.4" fill="none" stroke="#333" stroke-width="1.3"/></svg>
<div class="t" style="left:290.40px;top:1053.76px;font-size:12.240px;color:#000;">Bestell-Nr.</div>
<div class="a" style="left:270px;top:1076px;width:13px;height:13px;background:#fff;box-shadow:inset 0 0 0 1px #333;"></div>
<div class="t" style="left:290.40px;top:1072.76px;font-size:12.240px;color:#000;">Pos. (Einkauf)</div>
<div class="a" style="left:270px;top:1095px;width:13px;height:13px;background:#fff;box-shadow:inset 0 0 0 1px #333;"></div>
<svg class="a" style="left:270px;top:1095px" width="13" height="13" viewBox="0 0 13 13"><path d="M2.6 6.6 L5.2 9.2 L10.6 3.4" fill="none" stroke="#333" stroke-width="1.3"/></svg>
<div class="t" style="left:290.40px;top:1091.76px;font-size:12.240px;color:#000;">Bestelldokument</div>
<div class="a" style="left:270px;top:1114px;width:13px;height:13px;background:#fff;box-shadow:inset 0 0 0 1px #333;"></div>
<svg class="a" style="left:270px;top:1114px" width="13" height="13" viewBox="0 0 13 13"><path d="M2.6 6.6 L5.2 9.2 L10.6 3.4" fill="none" stroke="#333" stroke-width="1.3"/></svg>
<div class="t" style="left:290.40px;top:1110.76px;font-size:12.240px;color:#000;">Anfrage (Lieferant)</div>
<div class="a" style="left:270px;top:1133px;width:13px;height:13px;background:#fff;box-shadow:inset 0 0 0 1px #333;"></div>
<div class="t" style="left:290.40px;top:1129.76px;font-size:12.240px;color:#000;">Position</div>
<div class="a" style="left:270px;top:1152px;width:13px;height:13px;background:#fff;box-shadow:inset 0 0 0 1px #333;"></div>
<div class="t" style="left:290.40px;top:1148.76px;font-size:12.240px;color:#000;">aart_anf_nr_anfart_offen</div>
<div class="a" style="left:26px;top:1378px;width:2334px;height:22px;background:#efefef;"></div>
<div class="a" style="left:27px;top:1382px;width:61px;height:18px;background:#efefef;"></div>
<div class="a" style="left:27px;top:1382px;width:61px;height:1px;background:#a8a8a8;"></div>
<div class="a" style="left:27px;top:1382px;width:1px;height:18px;background:#a8a8a8;"></div>
<div class="a" style="left:87px;top:1382px;width:1px;height:18px;background:#ffffff;"></div>
<div class="a" style="left:91px;top:1382px;width:176px;height:18px;background:#efefef;"></div>
<div class="a" style="left:91px;top:1382px;width:176px;height:1px;background:#a8a8a8;"></div>
<div class="a" style="left:91px;top:1382px;width:1px;height:18px;background:#a8a8a8;"></div>
<div class="a" style="left:266px;top:1382px;width:1px;height:18px;background:#ffffff;"></div>
<div class="a" style="left:270px;top:1382px;width:80px;height:18px;background:#efefef;"></div>
<div class="a" style="left:270px;top:1382px;width:80px;height:1px;background:#a8a8a8;"></div>
<div class="a" style="left:270px;top:1382px;width:1px;height:18px;background:#a8a8a8;"></div>
<div class="a" style="left:349px;top:1382px;width:1px;height:18px;background:#ffffff;"></div>
<div class="a" style="left:353px;top:1382px;width:176px;height:18px;background:#efefef;"></div>
<div class="a" style="left:353px;top:1382px;width:176px;height:1px;background:#a8a8a8;"></div>
<div class="a" style="left:353px;top:1382px;width:1px;height:18px;background:#a8a8a8;"></div>
<div class="a" style="left:528px;top:1382px;width:1px;height:18px;background:#ffffff;"></div>
<div class="a" style="left:532px;top:1382px;width:103px;height:18px;background:#efefef;"></div>
<div class="a" style="left:532px;top:1382px;width:103px;height:1px;background:#a8a8a8;"></div>
<div class="a" style="left:532px;top:1382px;width:1px;height:18px;background:#a8a8a8;"></div>
<div class="a" style="left:634px;top:1382px;width:1px;height:18px;background:#ffffff;"></div>
<div class="a" style="left:638px;top:1382px;width:86px;height:18px;background:#efefef;"></div>
<div class="a" style="left:638px;top:1382px;width:86px;height:1px;background:#a8a8a8;"></div>
<div class="a" style="left:638px;top:1382px;width:1px;height:18px;background:#a8a8a8;"></div>
<div class="a" style="left:723px;top:1382px;width:1px;height:18px;background:#ffffff;"></div>
<div class="a" style="left:727px;top:1382px;width:76px;height:18px;background:#efefef;"></div>
<div class="a" style="left:727px;top:1382px;width:76px;height:1px;background:#a8a8a8;"></div>
<div class="a" style="left:727px;top:1382px;width:1px;height:18px;background:#a8a8a8;"></div>
<div class="a" style="left:802px;top:1382px;width:1px;height:18px;background:#ffffff;"></div>
<div class="a" style="left:806px;top:1382px;width:96px;height:18px;background:#efefef;"></div>
<div class="a" style="left:806px;top:1382px;width:96px;height:1px;background:#a8a8a8;"></div>
<div class="a" style="left:806px;top:1382px;width:1px;height:18px;background:#a8a8a8;"></div>
<div class="a" style="left:901px;top:1382px;width:1px;height:18px;background:#ffffff;"></div>
<div class="a" style="left:905px;top:1382px;width:101px;height:18px;background:#efefef;"></div>
<div class="a" style="left:905px;top:1382px;width:101px;height:1px;background:#a8a8a8;"></div>
<div class="a" style="left:905px;top:1382px;width:1px;height:18px;background:#a8a8a8;"></div>
<div class="a" style="left:1005px;top:1382px;width:1px;height:18px;background:#ffffff;"></div>
<div class="a" style="left:1009px;top:1382px;width:101px;height:18px;background:#efefef;"></div>
<div class="a" style="left:1009px;top:1382px;width:101px;height:1px;background:#a8a8a8;"></div>
<div class="a" style="left:1009px;top:1382px;width:1px;height:18px;background:#a8a8a8;"></div>
<div class="a" style="left:1109px;top:1382px;width:1px;height:18px;background:#ffffff;"></div>
<div class="a" style="left:1113px;top:1382px;width:1247px;height:18px;background:#efefef;"></div>
<div class="a" style="left:1113px;top:1382px;width:1247px;height:1px;background:#a8a8a8;"></div>
<div class="a" style="left:1113px;top:1382px;width:1px;height:18px;background:#a8a8a8;"></div>
<div class="a" style="left:2359px;top:1382px;width:1px;height:18px;background:#ffffff;"></div>
<div class="t" style="left:49.20px;top:1381.89px;font-size:10.138px;color:#000;">Erstellt:</div>
<div class="t" style="left:94.00px;top:1381.32px;font-size:11.784px;color:#000;">2025-11-26  Steffen Angrick</div>
<div class="t" style="left:283.40px;top:1382.55px;font-size:11.393px;color:#000;">Bearbeitet:</div>
<div class="t" style="left:356.10px;top:1381.32px;font-size:11.784px;color:#000;">2025-11-26  Steffen Angrick</div>
<div class="t" style="left:551.00px;top:1381.34px;font-size:11.717px;color:#000;">Wiedervorlage:</div>
<div class="a" style="left:640px;top:1384px;width:82px;height:13px;border-radius:2px;box-shadow:inset 0 0 0 1px #7a8ea8;background:linear-gradient(#fafcff,#e4ecf4);"></div>
<div class="t" style="left:676.22px;top:1380.19px;font-size:11.000px;color:#000;">**</div>
<div class="a" style="left:677px;top:1397px;width:8px;height:1px;background:#111;"></div>
<div class="t" style="left:737.80px;top:1381.73px;font-size:12.309px;color:#1a1aff;text-decoration:underline;">Dokument</div>
<div class="t" style="left:833.90px;top:1381.82px;font-size:12.063px;color:#1a1aff;text-decoration:underline;">Notizen</div>
<div class="t" style="left:919.00px;top:1381.98px;font-size:11.613px;color:#ff1a1a;text-decoration:underline;">Eigenschaften</div>
<div class="t" style="left:1039.80px;top:1381.77px;font-size:12.198px;color:#ff1a1a;text-decoration:underline;">Softlink</div>
<div class="a" style="left:-6px;top:897px;width:12px;height:188px;border-radius:3px;background:#005890;box-shadow:inset -1px 0 0 #080808, 1px 1px 2px rgba(0,0,0,.45);"></div>
<div class="a" style="left:0px;top:987px;width:2px;height:2px;background:#fff;"></div>
<div class="a" style="left:0px;top:991px;width:2px;height:2px;background:#fff;"></div>
<div class="a" style="left:0px;top:995px;width:2px;height:2px;background:#fff;"></div>
<div class="a" style="left:3px;top:1320px;width:21px;height:21px;background:#d8d8e0;box-shadow:inset 0 0 0 1px #a8a8b8;"></div>
<svg class="a" style="left:4px;top:1322px" width="19" height="17" viewBox="0 0 19 17"><path d="M5 1 L15 1 Q18 2 17 5 L15 5 L14 14 L3 15 Q0 14 2 11 L5 11Z" fill="#f4f4fa" stroke="#9898b0" stroke-width="0.8"/><circle cx="16" cy="3" r="2" fill="#b0b0d0"/><path d="M13 10h3v2.5h2.5v3H16V18h-3v-2.5h-2.5v-3H13z" fill="#40c030" stroke="#187010" stroke-width="0.6"/></svg>
<div class="a" style="left:4px;top:1346px;width:19px;height:1px;background:#f0f0f4;"></div>
<div class="a" style="left:4px;top:1347px;width:19px;height:1px;background:#a8a8b8;"></div>
<div class="a" style="left:3px;top:1353px;width:21px;height:20px;background:#d8d8e0;box-shadow:inset 0 0 0 1px #a8a8b8;"></div>
<svg class="a" style="left:7px;top:1356px" width="12" height="15" viewBox="0 0 12 15"><rect x="0.5" y="0.5" width="11" height="14" fill="#fff" stroke="#606878"/><path d="M2 3h8M2 5h8M2 7h8M2 9h8" stroke="#4a80c0" stroke-width="0.7"/><rect x="2" y="10.5" width="8" height="2.5" fill="#3a78c0"/></svg>
<div class="a" style="left:3px;top:1377px;width:21px;height:20px;background:#d8d8e0;box-shadow:inset 0 0 0 1px #a8a8b8;"></div>
<svg class="a" style="left:6px;top:1380px" width="15" height="15" viewBox="0 0 15 15"><defs><radialGradient id="rg" cx="50%" cy="70%" r="60%"><stop offset="0" stop-color="#ffb080"/><stop offset="0.6" stop-color="#f83818"/><stop offset="1" stop-color="#e01008"/></radialGradient></defs><path d="M4.5 0.5h6l4 4v6l-4 4h-6l-4-4v-6z" fill="url(#rg)"/><ellipse cx="7.5" cy="3.5" rx="4" ry="2" fill="#fff" opacity="0.35"/></svg>
<div class="a" style="left:0px;top:1400px;width:2360px;height:40px;background:#111111;"></div>
<div class="a" style="left:0px;top:1410px;width:2px;height:20px;background:#f0d060;"></div>
<div class="a" style="left:28px;top:1409px;width:23px;height:23px;border-radius:50%;background:radial-gradient(circle at 60% 40%,#ffbd4f 0%,#ff7139 45%,#e31587 90%);"></div>
<div class="a" style="left:34px;top:1414px;width:12px;height:12px;border-radius:50%;background:radial-gradient(circle at 50% 50%,#7542e5,#592acb);"></div>
<div class="a" style="left:20px;top:1438px;width:40px;height:2px;background:#76b9ed;"></div>
<div class="a" style="left:77px;top:1409px;width:14px;height:22px;background:#0a64c8;transform:skewY(-8deg);"></div>
<div class="a" style="left:80px;top:1414px;width:8px;height:11px;border-radius:50%;box-shadow:inset 0 0 0 2px #fff;"></div>
<div class="a" style="left:90px;top:1414px;width:10px;height:10px;background:#ffffff;box-shadow:inset 0 0 0 1px #0a64c8;"></div>
<svg class="a" style="left:90px;top:1414px" width="10" height="10" viewBox="0 0 10 10"><path d="M0.5 1.5 L5 6 L9.5 1.5" stroke="#0a64c8" fill="none" stroke-width="1.3"/></svg>
<div class="a" style="left:114px;top:1400px;width:48px;height:40px;background:#333333;"></div>
<div class="a" style="left:114px;top:1438px;width:48px;height:2px;background:#76b9ed;"></div>
<svg class="a" style="left:126px;top:1410px" width="24" height="20" viewBox="0 0 24 20"><rect x="0.5" y="0" width="23.5" height="19.5" rx="4" fill="#22a0d8"/><path d="M4.5 0 Q0.5 0 0.5 4 V15.5 Q0.5 19.5 4.5 19.5 H7 V0Z" fill="#1674a8"/><rect x="6" y="3" width="16" height="14" rx="1.5" fill="#fff"/><path d="M10.2 3 L14.9 3 L19.5 10 L14.7 17 L10.2 17 L14 10Z" fill="#22a0d8"/></svg>
<svg class="a" style="left:28px;top:1406px" width="24" height="10" viewBox="0 0 24 10"><path d="M14 9 Q16 2 12 0 Q22 3 21 10Z" fill="#ffbd2e"/></svg>
<div class="a" style="left:2117px;top:1410px;width:1px;height:20px;background:#555;"></div>
<div class="a" style="left:2120px;top:1410px;width:1px;height:20px;background:#555;"></div>
<div class="t" style="left:2128.00px;top:1410.44px;font-size:11.722px;color:#e8e8e8;">Desktop</div>
<svg class="a" style="left:2180px;top:1406px" width="8" height="6" viewBox="0 0 8 6"><path d="M0.5 0.5 L3 3 L0.5 5.5 M4.5 0.5 L7 3 L4.5 5.5" stroke="#fff" fill="none"/></svg>
<svg class="a" style="left:2198px;top:1415px" width="12" height="7" viewBox="0 0 12 7"><path d="M0.5 6.5 L6 1 L11.5 6.5" stroke="#fff" fill="none" stroke-width="1.2"/></svg>
<svg class="a" style="left:2221px;top:1414px" width="17" height="15" viewBox="0 0 17 15"><rect x="0.5" y="1.5" width="16" height="9" fill="none" stroke="#fff"/><path d="M8 11v3M4 14.5h8" stroke="#fff"/><rect x="1" y="1" width="5" height="5" fill="#111" stroke="#fff" stroke-width="0.8"/></svg>
<div class="t" style="left:2260.20px;top:1402.06px;font-size:10.789px;color:#f0f0f0;">17:03</div>
<div class="t" style="left:2246.70px;top:1418.81px;font-size:10.952px;color:#f0f0f0;">26.11.2025</div>
<svg class="a" style="left:2319px;top:1412px" width="17" height="17" viewBox="0 0 17 17"><path d="M0.5 0.5h16v11h-5l-3 4v-4h-8z" fill="#fff"/><path d="M3 3.5h11M3 6h11M3 8.5h8" stroke="#111" stroke-width="1"/></svg>
<div class="a" style="left:2356px;top:1400px;width:1px;height:40px;background:#444;"></div>
</body></html>
